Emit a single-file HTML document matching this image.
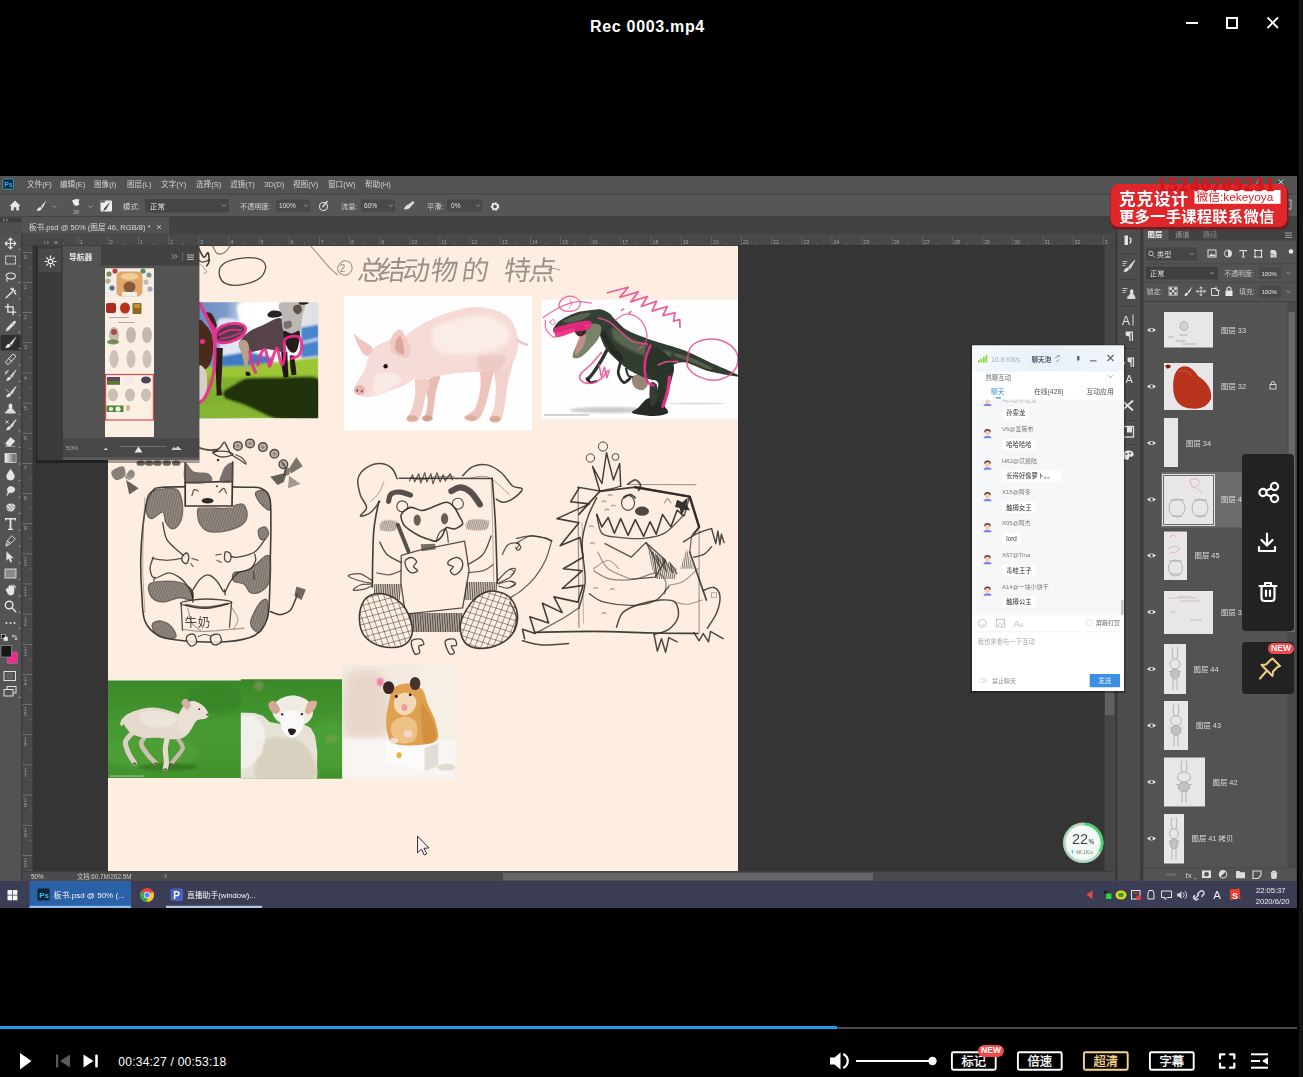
<!DOCTYPE html>
<html lang="zh"><head><meta charset="utf-8"><title>Rec 0003.mp4</title>
<style>
html,body{margin:0;padding:0;background:#000;}
body{width:1303px;height:1077px;overflow:hidden;font-family:"Liberation Sans",sans-serif;}
#app{position:relative;width:1303px;height:1077px;background:#000;overflow:hidden;}
.abs{position:absolute;display:block;}
.title{position:absolute;left:547.5px;top:15.9px;width:200px;text-align:center;color:#fff;font-weight:bold;font-size:16px;line-height:22px;letter-spacing:0.68px;white-space:nowrap;}
.time{position:absolute;left:118.3px;top:1053px;color:#fff;font-size:12.1px;line-height:18px;letter-spacing:0.2px;white-space:nowrap;}
.newb{position:absolute;background:#f2494b;color:#fff;border-radius:6px;text-align:center;font-weight:bold;letter-spacing:0.1px;}
#video{position:absolute;left:0;top:176px;width:1297px;height:732px;overflow:hidden;background:#282828;}
</style></head>
<body>
<div id="app">
<div id="video">
<svg class="abs" style="left:0;top:0" width="1297" height="732" viewBox="0 176 1297 732" font-family="'Liberation Sans','Noto Sans CJK SC',sans-serif">
<defs>
<linearGradient id="tgrad" x1="0" x2="1"><stop offset="0" stop-color="#f4f4f4"/><stop offset="1" stop-color="#555"/></linearGradient>
<linearGradient id="chatgrad" x1="0" x2="1"><stop offset="0" stop-color="#f4f8fb"/><stop offset="0.5" stop-color="#e8f1f8"/><stop offset="1" stop-color="#f1f6fa"/></linearGradient>
<filter id="b1" x="-5%" y="-5%" width="110%" height="110%"><feGaussianBlur stdDeviation="0.7"/></filter>
<filter id="b2" x="-10%" y="-10%" width="120%" height="120%"><feGaussianBlur stdDeviation="1"/></filter>
<filter id="b3" x="-15%" y="-15%" width="130%" height="130%"><feGaussianBlur stdDeviation="2"/></filter>
<filter id="b5" x="-20%" y="-20%" width="140%" height="140%"><feGaussianBlur stdDeviation="4"/></filter>
</defs>
<g filter="url(#b1)">
<rect x="0.0" y="176.0" width="1297.0" height="732.0" fill="#353535"/>
<rect x="108.0" y="245.5" width="630.0" height="626.0" fill="#fdeee1"/>
<clipPath id="cpCanvas"><rect x="108" y="245.5" width="630" height="625.5"/></clipPath><g clip-path="url(#cpCanvas)"><path d="M197.9 246.9 C198.9 248.6 202.0 256.1 203.7 257.1 C205.4 258.1 207.2 252.0 208.1 252.7 C209.0 253.5 209.2 259.3 209.0 261.5 C208.8 263.7 207.1 265.1 206.7 265.9" fill="none" stroke="#2a2622" stroke-width="1.6" stroke-linecap="round" stroke-linejoin="round" opacity="0.9"/><path d="M196.5 258.6 C197.4 259.2 200.1 261.8 202.3 262.1 C204.5 262.3 208.4 260.4 209.6 260.0" fill="none" stroke="#2a2622" stroke-width="1.4" stroke-linecap="round" stroke-linejoin="round" opacity="0.8"/><path d="M212.5 245.5 C213.2 246.8 214.9 252.1 216.9 253.3 C218.8 254.5 222.0 253.9 224.2 252.7 C226.3 251.6 229.0 247.4 230.0 246.3" fill="none" stroke="#5a544e" stroke-width="1.1" stroke-linecap="round" stroke-linejoin="round" opacity="0.8"/><path d="M200.8 264.4 C201.8 265.6 206.2 270.2 206.7 271.7 C207.1 273.2 204.2 272.9 203.7 273.2" fill="none" stroke="#6a645e" stroke-width="1.0" stroke-linecap="round" stroke-linejoin="round" opacity="0.6"/><path d="M222.7 264.4 C225.9 261.6 232.9 259.5 238.7 258.6 C244.6 257.6 253.2 257.4 257.7 258.6 C262.2 259.8 265.1 262.7 265.6 265.9 C266.0 269.0 264.1 274.5 260.6 277.5 C257.1 280.6 250.2 283.1 244.6 284.2 C239.0 285.4 231.2 285.7 227.1 284.2 C222.9 282.8 220.2 278.8 219.5 275.5 C218.8 272.2 219.5 267.2 222.7 264.4Z" fill="none" stroke="#3a3530" stroke-width="1.3" stroke-linecap="round" stroke-linejoin="round" opacity="0.9"/><path d="M311.0 246.3 C312.6 248.1 317.3 253.5 320.4 257.1 C323.5 260.7 326.9 265.0 329.7 267.9 C332.5 270.8 336.0 273.5 337.3 274.6" fill="none" stroke="#8a847c" stroke-width="1.2" stroke-linecap="round" stroke-linejoin="round" opacity="0.8"/><path d="M337.9 267.3 C338.4 265.3 341.1 261.7 343.1 260.9 C345.1 260.1 348.6 261.2 350.1 262.7 C351.6 264.1 352.4 267.6 351.9 269.7 C351.3 271.7 348.6 274.3 346.6 274.9 C344.6 275.5 341.4 274.4 339.9 273.2 C338.4 271.9 337.3 269.4 337.9 267.3Z" fill="none" stroke="#8f8981" stroke-width="1.1" stroke-linecap="round" stroke-linejoin="round" opacity="0.85"/><text x="339.8" y="272" font-size="10" fill="#8f8981">2</text><g transform="translate(0 0) skewX(-8) translate(39 0)" opacity="0.9"><text y="280" font-size="27" fill="#8f8981" x="357 378 402 430 461 503 528">总结动物的特点</text></g><path d="M548.4 269.7 C549.3 269.5 552.2 268.4 554.2 268.5 C556.1 268.6 559.0 269.9 560.0 270.2" fill="none" stroke="#8f8981" stroke-width="1.2" stroke-linecap="round" stroke-linejoin="round" opacity="0.85"/><clipPath id="cpCow"><rect x="170" y="302.2" width="148.2" height="116"/></clipPath><linearGradient id="gSky" x1="0" y1="0" x2="1" y2="0"><stop offset="0" stop-color="#4f7cc0"/><stop offset="0.38" stop-color="#7f9cc8"/><stop offset="0.55" stop-color="#f4f6f8"/><stop offset="0.8" stop-color="#ffffff"/><stop offset="1" stop-color="#d4d8de"/></linearGradient><g clip-path="url(#cpCow)"><rect x="170.0" y="302.0" width="149.0" height="117.0" fill="url(#gSky)"/><g filter="url(#b2)"><path d="M240.9 302.2 C247.7 299.8 271.8 299.4 279.5 302.2 C287.1 305.1 287.9 313.7 286.7 319.1 C285.5 324.6 279.1 332.8 272.2 334.8 C265.4 336.8 251.3 334.2 245.7 331.2 C240.1 328.2 239.3 321.6 238.5 316.7 C237.6 311.9 234.0 304.7 240.9 302.2Z" fill="#ffffff" opacity="0.95"/><path d="M219.1 319.1 C223.6 316.3 241.1 319.5 245.7 324.0 C250.3 328.4 250.5 340.1 246.9 345.7 C243.3 351.3 228.6 358.6 224.0 357.8 C219.3 357.0 219.9 347.3 219.1 340.9 C218.3 334.4 214.7 322.0 219.1 319.1Z" fill="#e8eef4" opacity="0.9"/><path d="M303.6 302.2 C306.1 298.2 316.2 298.4 318.7 302.2 C321.2 306.1 321.2 321.2 318.7 325.2 C316.2 329.2 306.1 330.2 303.6 326.4 C301.1 322.6 301.1 306.3 303.6 302.2Z" fill="#dfe2e6" opacity="0.95"/><path d="M301.2 327.6 L318.7 324.6 L318.7 355.4 L301.2 357.8Z" fill="#4684cc" opacity="1"/><path d="M301.2 341.5 L318.7 337.2 L318.7 340.3 L301.2 344.5Z" fill="#c4daf0" opacity="0.9"/><path d="M222.2 355.4 L246.9 351.7 L272.2 357.8 L272.2 367.4 L222.2 367.4Z" fill="#3c7ac4" opacity="1"/><path d="M222.2 348.1 L246.9 344.5 L246.9 351.7 L222.2 356.0Z" fill="#dfe8f2" opacity="0.9"/><path d="M198.6 367.4 L245.7 365.6 L318.7 357.2 L318.7 381.9 L198.6 381.9Z" fill="#9cc634" opacity="1"/><path d="M198.6 378.3 L318.7 374.7 L318.7 418.7 L198.6 418.7Z" fill="#7fb02e" opacity="1"/><path d="M223.4 391.6 C224.3 390.2 232.5 385.6 234.8 384.3 C237.2 383.0 242.4 378.9 246.9 378.3 C251.4 377.6 272.3 377.6 279.5 377.7 C286.7 377.7 314.8 374.8 318.7 378.9 C322.6 383.0 323.0 414.7 318.7 418.7 C314.4 422.7 282.0 419.5 275.9 418.7 C269.8 417.9 261.3 412.4 257.8 410.9 C254.3 409.4 244.1 404.9 240.9 403.6 C237.6 402.4 226.9 399.4 225.2 398.2 C223.4 397.0 222.4 392.9 223.4 391.6Z" fill="#1d2c10" opacity="0.95"/><path d="M198.6 403.6 L231.2 401.2 L274.7 418.7 L198.6 418.7Z" fill="#86b634" opacity="0.9"/></g><g filter="url(#b1)"><path d="M239.1 343.3 C239.9 339.9 244.2 335.4 248.1 332.4 C252.0 329.4 257.4 327.6 262.6 325.2 C267.8 322.8 275.8 317.7 279.5 317.9 C283.2 318.1 283.9 322.2 284.9 326.4 C285.9 330.6 285.7 339.1 285.5 343.3 C285.3 347.5 286.7 350.7 283.7 351.7 C280.7 352.7 272.5 349.3 267.4 349.3 C262.3 349.3 257.0 351.1 252.9 351.7 C248.9 352.3 245.6 354.3 243.3 352.9 C241.0 351.5 238.3 346.7 239.1 343.3Z" fill="#57424a" opacity="1"/><path d="M238.5 343.3 C238.8 341.1 241.7 339.7 243.3 339.7 C244.9 339.7 247.1 341.1 248.1 343.3 C249.1 345.5 249.3 349.7 249.3 352.9 C249.3 356.2 248.7 359.2 248.1 362.6 C247.5 366.0 246.4 373.5 245.7 373.5 C245.0 373.5 244.6 366.0 243.9 362.6 C243.2 359.2 242.4 356.2 241.5 352.9 C240.6 349.7 238.2 345.5 238.5 343.3Z" fill="#b8a08a" opacity="1"/><path d="M245.7 372.2 C246.2 371.7 248.5 371.7 249.3 372.2 C250.1 372.8 251.0 374.7 250.5 375.3 C250.0 375.8 247.1 376.1 246.3 375.6 C245.5 375.1 245.2 372.8 245.7 372.2Z" fill="#1c1410" opacity="1"/><path d="M281.3 351.7 L287.3 351.7 L287.9 367.4 L288.5 377.1 L283.7 377.7 L281.9 367.4Z" fill="#1f1612" opacity="1"/><path d="M289.7 355.4 L294.0 355.4 L295.8 367.4 L296.4 374.7 L291.6 375.3 L290.4 367.4Z" fill="#241a14" opacity="1"/><path d="M280.1 302.8 C283.8 300.5 299.9 300.2 303.6 302.5 C307.4 304.8 303.0 311.9 302.4 316.7 C301.8 321.5 301.8 328.1 300.0 331.2 C298.2 334.3 294.3 335.4 291.6 335.4 C288.8 335.4 285.4 334.3 283.7 331.2 C282.0 328.1 281.9 321.5 281.3 316.7 C280.7 312.0 276.4 305.2 280.1 302.8Z" fill="#bdb8b4" opacity="1"/><path d="M294.0 305.9 C295.1 304.9 298.7 303.9 300.0 304.7 C301.3 305.5 302.2 309.1 301.8 310.7 C301.4 312.3 299.0 314.3 297.6 314.3 C296.2 314.3 294.0 312.1 293.4 310.7 C292.8 309.3 292.9 306.9 294.0 305.9Z" fill="#4a403c" opacity="0.85"/><path d="M283.7 322.8 C284.5 321.5 289.0 320.3 290.4 321.0 C291.7 321.6 292.4 325.1 291.6 326.4 C290.8 327.7 286.8 329.4 285.5 328.8 C284.2 328.2 282.9 324.1 283.7 322.8Z" fill="#5a504c" opacity="0.7"/><path d="M298.8 302.2 C299.9 301.8 306.4 301.9 307.9 302.2 C309.3 302.5 308.4 303.7 307.3 304.1 C306.1 304.5 302.6 305.0 301.2 304.7 C299.8 304.4 297.7 302.6 298.8 302.2Z" fill="#2a2220" opacity="1"/><path d="M267.4 314.3 C267.8 313.2 270.2 311.2 272.2 310.7 C274.3 310.2 277.9 310.6 279.5 311.3 C281.1 312.0 282.3 313.9 281.9 314.9 C281.5 315.9 279.1 316.9 277.1 317.3 C275.1 317.7 271.4 317.8 269.8 317.3 C268.2 316.8 267.0 315.4 267.4 314.3Z" fill="#2c2426" opacity="1"/><path d="M283.7 331.2 C284.7 329.6 288.9 333.6 291.6 333.6 C294.2 333.6 298.2 329.6 299.4 331.2 C300.6 332.8 299.4 339.9 298.8 343.3 C298.2 346.7 297.2 350.3 295.8 351.7 C294.4 353.1 292.1 353.1 290.4 351.7 C288.6 350.3 286.6 346.7 285.5 343.3 C284.4 339.9 282.7 332.8 283.7 331.2Z" fill="#221a1c" opacity="1"/><path d="M198.6 322.8 C199.8 315.5 203.7 323.2 205.9 325.2 C208.1 327.2 210.7 330.8 211.9 334.8 C213.1 338.9 213.3 344.7 213.1 349.3 C212.9 353.9 212.1 359.2 210.7 362.6 C209.3 366.0 206.7 368.8 204.7 369.8 C202.6 370.8 199.6 376.5 198.6 368.6 C197.6 360.8 197.4 330.0 198.6 322.8Z" fill="#4b2c1e" opacity="1"/><path d="M198.6 367.4 C199.7 362.2 203.9 367.8 205.3 369.8 C206.7 371.8 206.9 375.9 207.1 379.5 C207.3 383.1 207.1 388.3 206.5 391.6 C205.9 394.8 204.8 397.2 203.4 398.8 C202.1 400.4 199.4 406.4 198.6 401.2 C197.8 396.0 197.5 372.7 198.6 367.4Z" fill="#d8d0c8" opacity="1"/><path d="M214.3 348.1 L222.8 348.1 L222.2 367.4 L221.0 386.7 L222.2 395.2 L216.7 395.8 L216.1 379.5Z" fill="#2a1c14" opacity="1"/><path d="M205.9 313.1 C206.5 311.7 210.1 312.3 211.9 314.3 C213.7 316.3 216.5 322.6 216.7 325.2 C216.9 327.8 214.5 330.4 213.1 330.0 C211.7 329.6 209.5 325.6 208.3 322.8 C207.1 319.9 205.3 314.5 205.9 313.1Z" fill="#3a2218" opacity="1"/></g><path d="M199.8 303.4 C200.8 305.5 203.7 310.9 205.9 315.5 C208.1 320.1 211.6 325.6 213.1 331.2 C214.6 336.8 214.7 343.3 214.9 349.3 C215.1 355.4 215.0 361.6 214.3 367.4 C213.6 373.3 212.3 379.3 210.7 384.3 C209.1 389.3 206.5 394.6 204.7 397.6 C202.8 400.6 200.6 401.6 199.8 402.4" fill="none" stroke="#ec2f8b" stroke-width="3.2" stroke-linecap="round" stroke-linejoin="round" opacity="0.92"/><path d="M202.2 309.5 C203.7 311.7 208.4 319.3 210.7 322.8 C213.0 326.2 215.2 328.8 216.1 330.0" fill="none" stroke="#ec2f8b" stroke-width="2.4" stroke-linecap="round" stroke-linejoin="round" opacity="0.85"/><ellipse cx="202.5" cy="341.5" rx="2.6" ry="2.6" fill="#ec2f8b" opacity="0.95"/><path d="M216.1 332.4 C217.1 329.9 219.6 327.3 222.8 325.8 C225.9 324.3 231.2 323.3 234.8 323.4 C238.5 323.5 243.0 324.7 244.5 326.4 C246.0 328.1 245.3 331.4 243.9 333.6 C242.5 335.8 239.2 338.2 236.0 339.7 C232.9 341.2 228.4 342.5 225.2 342.7 C222.0 342.9 218.2 342.6 216.7 340.9 C215.2 339.2 215.1 334.9 216.1 332.4Z" fill="#3a1c30" opacity="0.85"/><path d="M216.1 332.4 C217.1 329.9 219.6 327.3 222.8 325.8 C225.9 324.3 231.2 323.3 234.8 323.4 C238.5 323.5 243.0 324.7 244.5 326.4 C246.0 328.1 245.3 331.4 243.9 333.6 C242.5 335.8 239.2 338.2 236.0 339.7 C232.9 341.2 228.4 342.5 225.2 342.7 C222.0 342.9 218.2 342.6 216.7 340.9 C215.2 339.2 215.1 334.9 216.1 332.4Z" fill="none" stroke="#ec2f8b" stroke-width="3.0" stroke-linecap="round" stroke-linejoin="round" opacity="0.95"/><path d="M219.1 334.8 C221.0 334.0 226.4 330.8 230.0 330.0 C233.6 329.2 239.1 330.0 240.9 330.0" fill="none" stroke="#ec2f8b" stroke-width="2.0" stroke-linecap="round" stroke-linejoin="round" opacity="0.9"/><path d="M220.3 339.1 C222.2 338.7 227.8 337.7 231.2 336.6 C234.6 335.5 239.3 333.1 240.9 332.4" fill="none" stroke="#ec2f8b" stroke-width="1.6" stroke-linecap="round" stroke-linejoin="round" opacity="0.8"/><path d="M249.9 351.7 C250.2 353.5 250.8 359.2 251.7 362.6 C252.6 366.0 254.7 370.6 255.4 372.2" fill="none" stroke="#ec2f8b" stroke-width="3.4" stroke-linecap="round" stroke-linejoin="round" opacity="0.9"/><path d="M257.8 365.0 C258.3 363.2 259.6 356.8 260.8 354.1 C262.0 351.5 263.9 348.7 265.0 349.3 C266.1 349.9 266.6 354.9 267.4 357.8 C268.2 360.6 268.8 366.6 269.8 366.2 C270.8 365.8 272.2 358.4 273.5 355.4 C274.7 352.3 276.1 347.7 277.1 348.1 C278.1 348.5 278.6 354.9 279.5 357.8 C280.4 360.6 281.6 365.8 282.5 365.0 C283.4 364.2 284.6 357.0 284.9 352.9 C285.2 348.9 283.4 343.6 284.3 340.9 C285.2 338.2 287.9 337.2 290.4 336.6 C292.8 336.0 296.9 335.7 298.8 337.2 C300.7 338.8 301.8 342.7 301.8 345.7 C301.8 348.7 300.5 353.2 298.8 355.4 C297.1 357.5 292.8 357.9 291.6 358.4" fill="none" stroke="#ec2f8b" stroke-width="3.0" stroke-linecap="round" stroke-linejoin="round" opacity="0.9"/></g><rect x="343.8" y="296.0" width="188.2" height="134.5" fill="#fffefe"/><g filter="url(#b1)"><path d="M481.2 366.7 C479.0 370.3 481.5 381.3 480.4 388.2 C479.4 395.1 477.8 403.5 475.1 408.2 C472.4 412.9 465.6 414.7 464.3 416.6 C463.0 418.5 465.0 419.3 467.4 419.7 C469.8 420.1 475.8 421.6 478.9 418.9 C482.0 416.2 483.8 409.7 485.8 403.6 C487.9 397.4 489.9 388.2 491.2 382.1 C492.5 376.0 495.2 369.3 493.5 366.7 C491.8 364.2 483.4 363.2 481.2 366.7Z" fill="#ecc4bc" opacity="1"/><path d="M426.0 382.1 C424.0 386.2 427.8 395.4 427.8 400.5 C427.8 405.6 426.6 409.5 426.0 412.8 C425.3 416.1 422.8 418.9 423.7 420.2 C424.5 421.4 429.2 422.2 430.9 420.2 C432.5 418.2 432.8 413.0 433.6 408.2 C434.5 403.4 434.9 396.7 435.9 391.3 C437.0 385.9 441.4 377.5 439.8 376.0 C438.1 374.4 428.0 378.0 426.0 382.1Z" fill="#e8beb4" opacity="1"/><path d="M493.5 362.1 C490.6 367.3 495.7 377.7 495.8 385.2 C495.9 392.6 495.3 400.8 494.3 406.7 C493.2 412.5 488.6 418.0 489.7 420.5 C490.7 422.9 497.8 424.0 500.4 421.2 C503.0 418.4 503.9 409.6 505.0 403.6 C506.2 397.6 506.2 391.3 507.3 385.2 C508.5 379.0 510.9 371.9 511.9 366.7 C512.9 361.6 516.5 355.2 513.4 354.5 C510.4 353.7 496.4 357.0 493.5 362.1Z" fill="#f2d2cc" opacity="1"/><path d="M416.0 376.0 C413.7 378.0 415.9 389.0 415.2 394.4 C414.6 399.7 413.5 403.8 412.1 408.2 C410.7 412.5 405.9 418.3 406.8 420.5 C407.7 422.6 415.0 422.8 417.5 421.2 C420.1 419.7 420.8 415.2 422.1 411.3 C423.4 407.3 424.0 402.3 425.2 397.4 C426.3 392.6 430.6 385.7 429.0 382.1 C427.5 378.5 418.3 373.9 416.0 376.0Z" fill="#f0cec6" opacity="1"/><ellipse cx="412.1" cy="418.2" rx="5.5" ry="3.0" fill="#d0a08c" opacity="0.75" filter="url(#b1)"/><ellipse cx="427.2" cy="418.2" rx="5.5" ry="3.0" fill="#c8927e" opacity="0.75" filter="url(#b1)"/><ellipse cx="471.2" cy="418.2" rx="5.5" ry="3.0" fill="#d8a894" opacity="0.75" filter="url(#b1)"/><ellipse cx="495.0" cy="418.9" rx="5.5" ry="3.0" fill="#cc9a86" opacity="0.75" filter="url(#b1)"/><path d="M406.0 336.0 C409.6 331.2 419.0 326.1 426.0 322.2 C432.9 318.4 439.8 315.5 447.4 313.0 C455.1 310.5 464.1 307.7 472.0 307.2 C479.9 306.7 488.6 308.0 495.0 310.0 C501.4 311.9 506.7 315.1 510.4 319.2 C514.1 323.3 516.0 329.7 517.3 334.5 C518.6 339.4 518.8 343.7 518.1 348.3 C517.3 352.9 515.5 358.6 512.7 362.1 C509.9 365.7 506.4 368.2 501.2 369.8 C495.9 371.5 488.6 371.6 481.2 372.1 C473.8 372.6 464.3 372.1 456.7 372.9 C449.0 373.7 441.8 375.6 435.2 376.7 C428.5 377.9 421.4 380.9 416.7 379.8 C412.1 378.6 409.6 374.5 407.5 369.8 C405.5 365.1 404.7 357.0 404.5 351.4 C404.2 345.8 402.4 340.9 406.0 336.0Z" fill="#f5dad5" opacity="1"/><path d="M432.1 329.9 C435.2 324.5 448.0 321.5 456.7 319.2 C465.4 316.9 476.1 315.1 484.3 316.1 C492.5 317.1 501.7 321.2 505.8 325.3 C509.9 329.4 511.4 336.3 508.8 340.7 C506.3 345.0 498.6 349.1 490.4 351.4 C482.2 353.7 468.4 354.5 459.7 354.5 C451.0 354.5 442.8 355.5 438.2 351.4 C433.6 347.3 429.0 335.3 432.1 329.9Z" fill="#fcf0ec" opacity="0.85" filter="url(#b3)"/><path d="M478.1 357.5 C480.2 354.7 488.9 354.5 493.5 354.5 C498.1 354.5 504.7 355.0 505.8 357.5 C506.8 360.1 503.7 367.5 499.6 369.8 C495.5 372.1 484.8 373.4 481.2 371.4 C477.6 369.3 476.1 360.4 478.1 357.5Z" fill="#e8c0b8" opacity="0.6" filter="url(#b2)"/><path d="M517.3 339.9 C518.1 340.4 520.3 342.2 521.9 343.0 C523.5 343.7 526.1 344.4 527.0 344.6" fill="none" stroke="#ecc0b8" stroke-width="2.2" stroke-linecap="round" stroke-linejoin="round" opacity="1"/><path d="M372.2 349.1 C375.2 346.4 381.2 343.1 386.0 341.4 C390.9 339.8 397.0 338.5 401.4 339.1 C405.7 339.8 409.6 341.9 412.1 345.3 C414.7 348.6 416.2 354.0 416.7 359.1 C417.3 364.2 417.3 371.6 415.2 376.0 C413.2 380.3 408.6 382.7 404.5 385.2 C400.4 387.6 395.5 388.7 390.7 390.5 C385.8 392.3 379.9 394.9 375.3 395.9 C370.7 396.9 366.5 397.3 363.0 396.7 C359.6 396.0 355.9 393.9 354.6 392.1 C353.3 390.3 353.7 389.6 355.3 385.9 C357.0 382.2 362.4 374.5 364.6 369.8 C366.7 365.1 367.1 361.0 368.4 357.5 C369.7 354.1 369.3 351.8 372.2 349.1Z" fill="#f6dcd8" opacity="1"/><path d="M375.3 376.0 C377.9 372.4 386.3 372.4 390.7 372.9 C395.0 373.4 401.4 376.5 401.4 379.0 C401.4 381.6 395.0 385.7 390.7 388.2 C386.3 390.8 377.9 396.4 375.3 394.4 C372.7 392.3 372.7 379.5 375.3 376.0Z" fill="#fbeeea" opacity="0.8" filter="url(#b2)"/><path d="M354.1 333.7 C354.6 333.2 357.8 337.6 360.0 339.1 C362.1 340.7 364.7 341.3 366.9 343.0 C369.0 344.6 372.9 346.9 373.0 349.1 C373.1 351.3 369.5 355.6 367.6 356.0 C365.7 356.4 363.3 353.7 361.5 351.4 C359.7 349.1 358.1 345.1 356.9 342.2 C355.7 339.2 353.6 334.3 354.1 333.7Z" fill="#f0c4c0" opacity="1"/><path d="M390.7 350.6 C389.5 347.6 390.0 341.1 391.4 337.6 C392.8 334.1 396.8 329.9 399.1 329.6 C401.4 329.3 403.3 332.9 405.2 336.0 C407.2 339.2 410.2 344.7 410.6 348.3 C411.0 351.9 409.6 356.3 407.5 357.5 C405.5 358.8 401.1 357.2 398.3 356.0 C395.5 354.9 391.8 353.7 390.7 350.6Z" fill="#f2cac4" opacity="1"/><path d="M396.0 350.6 C394.7 348.3 395.3 343.1 396.0 340.7 C396.7 338.2 399.0 335.5 400.2 336.0 C401.4 336.6 402.7 340.7 403.2 343.7 C403.8 346.8 404.9 353.3 403.7 354.5 C402.5 355.6 397.3 352.9 396.0 350.6Z" fill="#d89c98" opacity="0.8" filter="url(#b1)"/><ellipse cx="359.6" cy="390.1" rx="5.5" ry="5.0" fill="#eab4b2" opacity="1"/><ellipse cx="357.2" cy="390.5" rx="1.0" ry="1.3" fill="#7a4a4a" opacity="1"/><ellipse cx="361.8" cy="391.3" rx="1.0" ry="1.3" fill="#8a5a58" opacity="1"/><ellipse cx="385.6" cy="366.3" rx="2.2" ry="2.2" fill="#1a1012" opacity="1"/></g><rect x="541.5" y="299.6" width="196.5" height="119.0" fill="#fefefe"/><g filter="url(#b1)"><ellipse cx="609.1" cy="410.1" rx="40.0" ry="3.0" fill="#bdbdc2" opacity="0.8" filter="url(#b2)"/><ellipse cx="696.6" cy="403.5" rx="28.0" ry="1.0" fill="#d8d8dc" opacity="0.8" filter="url(#b1)"/><rect x="544.0" y="414.0" width="45.0" height="1.8" fill="#b0b0b0" opacity="0.65"/><path d="M633.6 375.6 C635.7 374.4 641.9 373.5 644.4 374.8 C646.8 376.1 648.5 380.7 648.2 383.2 C648.0 385.8 645.0 389.4 642.8 390.1 C640.7 390.9 637.0 389.2 635.2 387.8 C633.4 386.4 632.4 383.7 632.1 381.7 C631.8 379.7 631.6 376.7 633.6 375.6Z" fill="#94806f" opacity="0.95"/><path d="M601.4 310.3 C603.2 309.6 607.3 312.4 610.6 314.9 C613.9 317.5 621.0 326.3 626.0 329.5 C630.9 332.7 642.1 336.7 647.4 338.7 C652.8 340.7 660.7 342.9 665.9 344.6 C671.0 346.2 680.1 348.7 685.8 351.0 C691.5 353.3 702.0 358.6 708.8 361.7 C715.7 364.9 733.5 372.5 737.2 374.5 C741.0 376.5 741.0 377.1 737.2 376.6 C733.5 376.2 715.7 373.1 708.8 371.3 C702.0 369.4 690.5 363.4 685.8 362.5 C681.1 361.7 676.4 363.1 673.5 364.8 C670.7 366.6 667.0 373.5 664.3 375.6 C661.7 377.6 656.9 380.2 653.6 380.2 C650.3 380.2 643.5 377.2 639.8 375.6 C636.1 373.9 629.4 370.3 626.0 367.9 C622.5 365.4 616.5 360.0 613.7 357.1 C610.8 354.3 606.4 349.7 604.5 346.4 C602.5 343.1 600.1 336.1 599.1 332.6 C598.1 329.1 596.5 323.3 596.8 320.3 C597.1 317.3 599.6 311.0 601.4 310.3Z" fill="#323d33" opacity="1"/><path d="M612.1 328.0 C613.9 327.2 621.1 333.1 626.0 335.7 C630.8 338.2 636.2 341.0 641.3 343.3 C646.4 345.6 651.5 347.9 656.7 349.5 C661.8 351.0 671.0 351.0 672.0 352.5 C673.0 354.1 667.4 358.2 662.8 358.7 C658.2 359.2 650.0 357.1 644.4 355.6 C638.7 354.1 633.9 352.0 629.0 349.5 C624.2 346.9 618.0 343.8 615.2 340.3 C612.4 336.7 610.4 328.7 612.1 328.0Z" fill="#61755a" opacity="0.75" filter="url(#b2)"/><path d="M675.1 353.3 C677.9 353.6 687.4 356.2 693.5 358.7 C699.6 361.1 709.4 366.1 711.9 367.9 C714.5 369.6 712.4 370.1 708.8 369.1 C705.3 368.1 695.8 363.7 690.4 361.7 C685.0 359.8 679.2 358.5 676.6 357.1 C674.0 355.7 672.3 353.0 675.1 353.3Z" fill="#6a7a5e" opacity="0.6" filter="url(#b1)"/><path d="M604.5 331.0 C606.3 332.3 609.1 339.0 612.1 343.3 C615.2 347.7 621.6 354.1 622.9 357.1 C624.2 360.2 622.1 363.0 619.8 361.7 C617.5 360.5 612.1 353.8 609.1 349.5 C606.0 345.1 602.2 338.7 601.4 335.7 C600.6 332.6 602.7 329.8 604.5 331.0Z" fill="#20281f" opacity="0.7" filter="url(#b1)"/><path d="M647.4 346.4 C650.5 344.1 658.4 347.9 662.8 351.0 C667.1 354.1 672.0 360.2 673.5 364.8 C675.1 369.4 673.0 374.0 672.0 378.6 C671.0 383.2 668.7 387.8 667.4 392.4 C666.1 397.0 666.1 403.7 664.3 406.3 C662.5 408.8 658.1 409.6 656.7 407.8 C655.2 406.0 655.6 399.6 655.9 395.5 C656.1 391.4 659.1 386.3 658.2 383.2 C657.3 380.2 652.8 380.2 650.5 377.1 C648.2 374.0 644.9 369.9 644.4 364.8 C643.9 359.7 644.4 348.7 647.4 346.4Z" fill="#2b352c" opacity="1"/><path d="M632.1 412.7 C630.8 411.4 635.9 410.0 638.2 407.8 C640.5 405.6 643.4 400.9 645.9 399.4 C648.5 397.8 651.0 397.9 653.6 398.6 C656.1 399.2 658.8 400.9 661.3 403.2 C663.7 405.5 668.9 410.3 668.2 412.4 C667.4 414.5 660.4 415.3 656.7 415.8 C652.9 416.3 650.0 416.0 645.9 415.5 C641.8 415.0 633.4 414.0 632.1 412.7Z" fill="#262c26" opacity="1"/><path d="M650.5 383.2 C651.7 380.7 655.5 382.2 656.7 384.8 C657.8 387.3 658.1 395.0 657.4 398.6 C656.8 402.2 654.1 406.0 652.8 406.3 C651.5 406.5 650.1 404.0 649.7 400.1 C649.4 396.3 649.4 385.8 650.5 383.2Z" fill="#353d33" opacity="1"/><path d="M553.0 329.8 C553.6 327.8 556.2 323.4 560.0 320.6 C563.7 317.8 570.4 314.6 575.3 312.9 C580.2 311.2 584.8 310.9 589.1 310.3 C593.5 309.8 597.6 308.5 601.4 309.6 C605.2 310.6 611.1 313.7 612.1 316.5 C613.2 319.3 610.4 325.0 607.5 326.4 C604.7 327.9 598.8 325.5 595.3 325.2 C591.7 324.9 590.7 323.8 586.0 324.6 C581.4 325.4 572.5 328.5 567.6 329.8 C562.8 331.1 559.3 332.6 556.9 332.6 C554.5 332.6 552.5 331.8 553.0 329.8Z" fill="#343f35" opacity="1"/><path d="M563.0 321.1 C564.0 319.8 572.2 316.3 576.8 314.9 C581.4 313.5 589.1 312.1 590.7 312.6 C592.2 313.1 589.4 316.3 586.0 318.0 C582.7 319.7 574.5 322.1 570.7 322.6 C566.9 323.1 562.0 322.3 563.0 321.1Z" fill="#5e6c5a" opacity="0.75" filter="url(#b1)"/><path d="M589.1 324.1 C591.8 323.4 599.0 323.5 600.6 325.7 C602.3 327.8 600.8 333.5 599.1 337.2 C597.4 340.9 593.7 344.6 590.7 347.9 C587.6 351.3 583.6 355.6 580.7 357.1 C577.7 358.7 574.0 358.7 573.0 357.4 C572.0 356.2 573.3 352.6 574.5 349.5 C575.7 346.3 578.6 341.9 580.2 338.7 C581.9 335.5 583.0 332.7 584.5 330.3 C586.0 327.8 586.4 324.9 589.1 324.1Z" fill="#78846a" opacity="1"/><path d="M580.2 335.7 C581.6 333.1 583.5 330.5 584.5 331.0 C585.5 331.6 586.6 335.7 586.0 338.7 C585.5 341.8 583.2 346.8 581.4 349.5 C579.7 352.2 576.5 355.4 575.6 354.8 C574.7 354.3 575.3 349.6 576.1 346.4 C576.8 343.2 578.8 338.2 580.2 335.7Z" fill="#c4908c" opacity="0.9"/><path d="M574.5 327.2 C575.9 325.8 582.6 324.8 584.5 325.7 C586.4 326.6 586.7 330.8 586.0 332.6 C585.4 334.4 582.3 336.2 580.7 336.4 C579.0 336.7 577.1 335.7 576.1 334.1 C575.0 332.6 573.1 328.6 574.5 327.2Z" fill="#33151d" opacity="0.9"/><path d="M553.8 328.7 C555.5 327.3 560.5 326.1 564.6 324.9 C568.7 323.8 574.2 322.5 578.4 321.8 C582.6 321.2 587.7 320.3 589.9 321.1 C592.1 321.8 592.1 324.9 591.4 326.4 C590.8 328.0 588.7 329.4 586.0 330.3 C583.4 331.2 578.6 331.0 575.3 331.8 C572.0 332.6 569.2 334.0 566.1 334.9 C563.0 335.8 558.8 337.4 556.9 337.2 C555.0 336.9 555.1 334.8 554.6 333.3 C554.1 331.9 552.2 330.2 553.8 328.7Z" fill="#ec2a80" opacity="0.92"/><path d="M606.8 350.2 C605.7 352.2 602.9 357.9 600.6 361.7 C598.3 365.6 595.1 370.3 593.0 373.3 C590.8 376.2 588.5 378.4 587.6 379.4" fill="none" stroke="#2d362e" stroke-width="3.4" stroke-linecap="round" stroke-linejoin="round" opacity="1"/><path d="M586.8 378.6 C587.5 379.3 589.1 382.0 590.7 382.5 C592.2 382.9 595.1 381.6 596.0 381.4" fill="none" stroke="#1c221c" stroke-width="2.4" stroke-linecap="round" stroke-linejoin="round" opacity="1"/><path d="M620.6 361.7 C620.2 363.7 617.8 369.8 618.3 373.3 C618.8 376.7 621.7 381.6 623.7 382.5 C625.6 383.4 628.8 379.3 629.8 378.6" fill="none" stroke="#2a322a" stroke-width="2.8" stroke-linecap="round" stroke-linejoin="round" opacity="1"/><path d="M626.0 368.7 C626.3 369.8 627.2 374.2 628.3 375.6 C629.3 377.0 631.5 376.8 632.1 377.1" fill="none" stroke="#303830" stroke-width="2.2" stroke-linecap="round" stroke-linejoin="round" opacity="1"/><path d="M607.5 292.7 L628.3 287.3 L619.8 297.3 L638.2 291.9 L630.6 301.9 L647.4 296.5 L641.3 306.5 L656.7 301.1 L652.0 311.1 L667.4 306.5 L662.8 315.7 L675.1 312.6 L673.5 321.1 L679.7 319.5 L680.0 327.2" fill="none" stroke="#ee4a92" stroke-width="1.7" stroke-linecap="round" stroke-linejoin="round" opacity="0.9"/><path d="M559.2 303.4 C560.0 301.5 562.8 298.4 565.3 297.3 C567.9 296.2 572.1 296.1 574.5 297.0 C577.0 297.9 579.8 300.6 580.2 302.7 C580.6 304.7 578.9 308.1 576.8 309.6 C574.7 311.0 570.3 311.5 567.6 311.4 C564.9 311.3 562.1 310.1 560.7 308.8 C559.3 307.5 558.4 305.3 559.2 303.4Z" fill="none" stroke="#ee4a92" stroke-width="1.2" stroke-linecap="round" stroke-linejoin="round" opacity="0.85"/><path d="M569.9 299.6 C570.2 300.3 571.6 302.8 571.5 304.2 C571.3 305.6 569.5 307.4 569.2 308.0" fill="none" stroke="#ee4a92" stroke-width="1.0" stroke-linecap="round" stroke-linejoin="round" opacity="0.7"/><path d="M543.1 317.5 C545.6 316.0 553.0 310.6 558.4 308.0 C563.8 305.4 569.8 302.7 575.3 301.9 C580.8 301.1 588.7 302.9 591.4 303.1" fill="none" stroke="#ee4a92" stroke-width="1.3" stroke-linecap="round" stroke-linejoin="round" opacity="0.8"/><path d="M545.4 320.3 C545.5 321.8 544.7 326.7 546.1 329.5 C547.5 332.3 551.8 336.4 553.8 337.2 C555.9 338.0 557.7 334.6 558.4 334.1" fill="none" stroke="#ee4a92" stroke-width="1.3" stroke-linecap="round" stroke-linejoin="round" opacity="0.8"/><path d="M550.0 321.8 C550.1 321.0 552.2 319.4 553.0 319.5 C553.9 319.7 555.4 321.8 555.3 322.6 C555.3 323.4 553.5 324.7 552.6 324.6 C551.7 324.5 549.9 322.7 550.0 321.8Z" fill="none" stroke="#ee4a92" stroke-width="1.0" stroke-linecap="round" stroke-linejoin="round" opacity="0.8"/><path d="M615.2 320.3 C617.0 319.3 622.1 314.5 626.0 314.2 C629.8 313.8 634.9 315.4 638.2 318.0 C641.6 320.6 644.6 325.5 645.9 329.5 C647.2 333.5 647.2 338.5 645.9 341.8 C644.6 345.1 639.5 348.2 638.2 349.5" fill="none" stroke="#ee4a92" stroke-width="1.3" stroke-linecap="round" stroke-linejoin="round" opacity="0.8"/><path d="M621.4 310.3 L623.7 308.8" fill="none" stroke="#ee4a92" stroke-width="1.6" stroke-linecap="round" stroke-linejoin="round" opacity="0.8"/><path d="M629.0 313.4 L630.9 311.4" fill="none" stroke="#ee4a92" stroke-width="1.6" stroke-linecap="round" stroke-linejoin="round" opacity="0.8"/><path d="M598.3 318.0 C600.1 318.6 605.5 319.7 609.1 321.8 C612.7 324.0 616.0 327.8 619.8 331.0 C623.7 334.2 627.5 338.9 632.1 341.0 C636.7 343.2 644.9 343.6 647.4 344.1" fill="none" stroke="#ee4a92" stroke-width="1.7" stroke-linecap="round" stroke-linejoin="round" opacity="0.85"/><path d="M687.4 360.2 C687.9 356.6 688.1 349.9 691.2 346.4 C694.3 342.9 700.5 340.4 705.8 339.5 C711.0 338.6 717.7 339.1 722.7 341.0 C727.6 342.9 733.3 347.0 735.7 351.0 C738.1 355.0 738.4 360.7 737.2 364.8 C736.1 368.9 732.8 373.0 728.8 375.6 C724.8 378.1 718.8 380.2 713.4 380.2 C708.1 380.2 700.8 377.6 696.6 375.6 C692.3 373.5 689.7 370.4 688.1 367.9 C686.6 365.3 686.8 363.8 687.4 360.2Z" fill="none" stroke="#ee4a92" stroke-width="1.5" stroke-linecap="round" stroke-linejoin="round" opacity="0.85"/><path d="M650.5 345.6 C649.7 347.5 646.9 352.9 645.9 357.1 C644.9 361.4 644.4 366.9 644.7 371.0 C644.9 375.0 646.0 379.3 647.4 381.7 C648.9 384.1 652.6 384.9 653.6 385.5" fill="none" stroke="#e8308a" stroke-width="2.6" stroke-linecap="round" stroke-linejoin="round" opacity="0.92"/><path d="M658.2 364.8 C659.7 364.3 664.1 362.3 667.4 361.7 C670.7 361.2 676.4 361.7 678.1 361.7" fill="none" stroke="#ee4a92" stroke-width="1.7" stroke-linecap="round" stroke-linejoin="round" opacity="0.85"/><path d="M669.7 377.1 C669.3 379.7 668.5 387.6 667.4 392.4 C666.2 397.3 663.6 404.0 662.8 406.3" fill="none" stroke="#e8308a" stroke-width="3.4" stroke-linecap="round" stroke-linejoin="round" opacity="0.92"/><path d="M601.4 352.5 C599.6 354.6 594.1 361.2 590.7 364.8 C587.2 368.4 582.2 371.3 580.7 374.0 C579.1 376.7 579.8 379.4 581.4 380.9 C583.1 382.5 587.3 383.6 590.7 383.2 C594.0 382.9 598.6 380.7 601.4 378.6 C604.2 376.6 606.5 372.2 607.5 371.0" fill="none" stroke="#ee4a92" stroke-width="1.6" stroke-linecap="round" stroke-linejoin="round" opacity="0.85"/><path d="M599.1 364.8 L601.4 377.1 L604.5 367.1 L606.8 377.9 L609.4 370.2" fill="none" stroke="#ee4a92" stroke-width="1.5" stroke-linecap="round" stroke-linejoin="round" opacity="0.85"/></g><clipPath id="cpL"><rect x="108" y="680.500" width="133" height="97.500"/></clipPath><clipPath id="cpS"><rect x="240.800" y="679.300" width="101.400" height="99.400"/></clipPath><clipPath id="cpH"><rect x="342.200" y="665" width="114.300" height="113.300"/></clipPath><linearGradient id="gGr" x1="0" y1="0" x2="0" y2="1"><stop offset="0" stop-color="#3a8829"/><stop offset="0.5" stop-color="#479a31"/><stop offset="1" stop-color="#42922e"/></linearGradient><g clip-path="url(#cpL)"><rect x="108.0" y="680.0" width="134.0" height="99.0" fill="url(#gGr)"/><ellipse cx="150.0" cy="752.0" rx="50.0" ry="16.0" fill="#56a83a" opacity="0.5" filter="url(#b3)"/><ellipse cx="215.0" cy="700.0" rx="30.0" ry="14.0" fill="#327f25" opacity="0.5" filter="url(#b3)"/><ellipse cx="168.0" cy="767.0" rx="30.0" ry="3.5" fill="#2c641f" opacity="0.55" filter="url(#b2)"/><g filter="url(#b1)"><path d="M133.0 732.4 C131.8 733.9 126.3 738.2 125.6 741.5 C124.8 744.9 126.8 749.0 128.3 752.6 C129.8 756.1 133.4 761.1 134.4 762.8" fill="none" stroke="#ddd0c4" stroke-width="5.0" stroke-linecap="round" stroke-linejoin="round" opacity="1"/><path d="M145.4 736.0 C144.8 737.4 140.8 741.1 141.3 744.3 C141.8 747.5 145.9 752.2 148.2 755.3 C150.6 758.4 154.2 761.5 155.4 762.8" fill="none" stroke="#cdbfb2" stroke-width="4.6" stroke-linecap="round" stroke-linejoin="round" opacity="1"/><path d="M168.1 734.6 C167.6 736.9 165.6 743.8 165.3 748.4 C165.1 753.0 166.4 758.9 166.4 762.2 C166.4 765.6 165.5 767.3 165.3 768.3" fill="none" stroke="#e6dace" stroke-width="5.2" stroke-linecap="round" stroke-linejoin="round" opacity="1"/><path d="M178.1 738.8 C178.8 740.3 183.0 744.8 182.8 747.9 C182.5 751.0 178.3 754.7 176.4 757.3 C174.5 759.8 172.3 762.3 171.4 763.3" fill="none" stroke="#c6b8ab" stroke-width="4.2" stroke-linecap="round" stroke-linejoin="round" opacity="1"/><path d="M122.8 719.4 C123.5 715.9 129.2 713.1 134.4 711.1 C139.6 709.1 147.3 707.4 153.7 707.5 C160.2 707.7 167.6 710.0 173.1 711.9 C178.6 713.9 184.0 716.3 186.9 719.4 C189.8 722.5 191.4 727.2 190.2 730.5 C189.1 733.7 185.1 737.5 180.0 738.8 C174.8 740.0 165.5 738.2 159.3 737.9 C153.0 737.7 147.5 738.3 142.7 737.4 C137.8 736.4 133.6 735.4 130.3 732.4 C126.9 729.4 122.1 723.0 122.8 719.4Z" fill="#e6dacf" opacity="1"/><path d="M139.9 713.9 C141.8 711.3 153.3 710.7 159.3 711.1 C165.3 711.6 174.0 714.1 175.8 716.6 C177.7 719.2 174.9 724.7 170.3 726.3 C165.7 727.9 153.3 728.4 148.2 726.3 C143.1 724.2 138.1 716.4 139.9 713.9Z" fill="#efe6dd" opacity="0.8"/><path d="M128.3 716.6 C127.5 717.2 124.4 719.0 123.3 720.2 C122.2 721.5 122.0 723.5 121.7 724.1" fill="none" stroke="#e6dacf" stroke-width="3.4" stroke-linecap="round" stroke-linejoin="round" opacity="1"/><path d="M177.2 719.4 C177.7 714.8 181.5 708.7 184.1 705.6 C186.8 702.5 189.8 700.9 193.0 700.9 C196.1 700.9 200.3 703.4 202.9 705.6 C205.5 707.8 208.0 711.7 208.4 713.9 C208.9 716.0 207.7 717.4 205.7 718.6 C203.7 719.7 199.1 718.8 196.6 720.8 C194.0 722.8 192.7 728.4 190.2 730.5 C187.7 732.5 183.5 735.1 181.4 733.2 C179.2 731.4 176.8 724.0 177.2 719.4Z" fill="#eae0d6" opacity="1"/><path d="M181.4 702.8 C181.2 701.0 184.2 698.4 185.8 698.7 C187.4 699.0 190.6 702.9 190.8 704.8 C190.9 706.6 188.5 710.1 186.9 709.7 C185.3 709.4 181.6 704.7 181.4 702.8Z" fill="#d6b0a4" opacity="1"/><ellipse cx="199.3" cy="709.2" rx="0.9" ry="0.9" fill="#3a2a28" opacity="1"/><ellipse cx="207.3" cy="714.7" rx="1.3" ry="1.1" fill="#7a5a58" opacity="1"/><ellipse cx="134.4" cy="763.6" rx="1.8" ry="1.2" fill="#4a3a30" opacity="0.8"/><ellipse cx="155.7" cy="763.6" rx="1.8" ry="1.2" fill="#4a3a30" opacity="0.8"/><ellipse cx="165.3" cy="769.4" rx="1.8" ry="1.2" fill="#4a3a30" opacity="0.8"/><ellipse cx="171.1" cy="764.2" rx="1.8" ry="1.2" fill="#4a3a30" opacity="0.8"/></g><rect x="110.0" y="775.5" width="34.0" height="1.2" fill="#cfe0c8" opacity="0.6"/></g><g clip-path="url(#cpS)"><rect x="240.0" y="679.0" width="103.0" height="100.0" fill="url(#gGr)"/><ellipse cx="330.0" cy="745.0" rx="20.0" ry="26.0" fill="#4ea838" opacity="0.5" filter="url(#b3)"/><ellipse cx="259.0" cy="686.0" rx="5.0" ry="5.0" fill="#7f9458" opacity="0.7" filter="url(#b2)"/><ellipse cx="331.0" cy="739.0" rx="6.0" ry="4.5" fill="#78a44e" opacity="0.6" filter="url(#b2)"/><g filter="url(#b1)"><path d="M236.6 712.5 L254.6 713.1 L262.9 715.8 L269.8 721.9 L280.8 724.1 L302.9 724.1 L310.7 727.7 L315.1 736.0 L317.3 751.2 L316.8 784.3 L236.6 784.3Z" fill="#e6e2d6" opacity="1"/><path d="M257.4 742.9 C260.7 738.8 268.6 737.8 275.3 737.4 C282.0 736.9 291.4 737.4 297.4 740.1 C303.4 742.9 308.5 747.5 311.2 753.9 C314.0 760.4 322.8 774.7 314.0 778.8 C305.3 783.0 268.5 781.6 258.7 778.8 C249.0 776.1 255.7 768.2 255.4 762.2 C255.2 756.3 254.0 747.0 257.4 742.9Z" fill="#d4ccb8" opacity="0.75" filter="url(#b2)"/><path d="M236.6 715.3 L254.6 716.1 L262.9 724.9 L265.6 737.4 L261.5 753.9 L250.4 766.4 L236.6 770.5Z" fill="#f4f2ee" opacity="0.9" filter="url(#b2)"/><path d="M273.1 705.6 C274.7 702.4 279.6 698.9 283.6 697.3 C287.7 695.7 293.0 695.0 297.4 695.9 C301.8 696.8 307.3 699.6 309.9 702.8 C312.4 706.1 313.8 711.6 312.6 715.3 C311.5 718.9 307.8 723.5 302.9 724.9 C298.1 726.4 288.4 725.5 283.6 724.1 C278.8 722.7 275.7 719.7 273.9 716.6 C272.2 713.6 271.5 708.8 273.1 705.6Z" fill="#eeece4" opacity="1"/><path d="M268.4 704.2 C268.9 702.5 272.0 700.1 273.9 700.9 C275.9 701.7 279.7 707.0 280.0 709.2 C280.3 711.3 277.4 713.6 275.9 713.9 C274.4 714.2 272.1 712.7 270.9 711.1 C269.7 709.5 267.9 705.9 268.4 704.2Z" fill="#d2a894" opacity="1"/><path d="M304.9 711.1 C305.0 709.1 307.0 703.6 309.0 702.0 C311.0 700.4 315.8 700.3 316.8 701.4 C317.7 702.6 315.9 707.1 314.6 709.2 C313.2 711.3 310.1 713.8 308.5 714.2 C306.9 714.5 304.8 713.1 304.9 711.1Z" fill="#dcae9c" opacity="1"/><path d="M280.8 713.9 C282.7 711.4 288.2 710.3 291.9 710.3 C295.6 710.3 301.0 711.4 302.9 713.9 C304.9 716.3 304.2 721.6 303.5 724.9 C302.8 728.3 300.7 732.0 298.8 734.1 C296.9 736.1 294.2 737.4 291.9 737.4 C289.6 737.4 286.8 736.1 285.0 734.1 C283.1 732.0 281.5 728.3 280.8 724.9 C280.2 721.6 279.0 716.3 280.8 713.9Z" fill="#faf9f7" opacity="1"/><ellipse cx="282.2" cy="714.4" rx="1.3" ry="1.1" fill="#2a2422" opacity="1"/><ellipse cx="301.8" cy="714.2" rx="1.3" ry="1.1" fill="#2a2422" opacity="1"/><path d="M288.0 729.6 C288.4 728.7 290.6 728.4 291.9 728.5 C293.2 728.6 295.7 729.3 296.0 730.2 C296.4 731.1 294.8 733.2 294.1 734.1 C293.4 734.9 292.6 735.2 291.9 735.2 C291.2 735.2 290.3 735.0 289.7 734.1 C289.0 733.1 287.7 730.6 288.0 729.6Z" fill="#221c1a" opacity="1"/></g></g><g clip-path="url(#cpH)"><rect x="342.0" y="665.0" width="115.0" height="114.0" fill="#f3ebe2"/><path d="M347.2 676.6 C353.1 666.7 376.6 666.9 383.1 676.6 C389.5 686.3 391.8 724.7 385.8 734.6 C379.9 744.5 353.6 745.7 347.2 736.0 C340.7 726.3 341.2 686.5 347.2 676.6Z" fill="#e6d4c8" opacity="0.9" filter="url(#b5)"/><rect x="342.0" y="738.0" width="115.0" height="41.0" fill="#f8f5f2" filter="url(#b3)"/><rect x="422.0" y="665.0" width="36.0" height="70.0" fill="#f6f0e6" filter="url(#b3)" opacity="0.9"/><ellipse cx="380.3" cy="682.1" rx="3.2" ry="4.0" fill="#f25c98" opacity="0.8" filter="url(#b2)"/><g filter="url(#b1)"><path d="M385.8 740.7 L438.3 742.9 L438.3 766.4 L424.5 771.1 L387.2 762.8Z" fill="#fbfbfa" opacity="1"/><path d="M424.5 747.9 L438.3 742.9 L438.3 766.4 L424.5 771.1Z" fill="#e2ddd8" opacity="1"/><ellipse cx="446.6" cy="767.2" rx="9.0" ry="3.5" fill="#dccfc2" opacity="0.7"/><path d="M388.6 704.2 C389.7 699.6 389.8 692.5 392.8 689.0 C395.7 685.6 401.7 683.5 406.6 683.5 C411.4 683.5 418.2 685.6 421.8 689.0 C425.3 692.5 425.5 698.7 427.8 704.2 C430.1 709.7 434.1 716.2 435.6 722.2 C437.1 728.2 439.7 736.3 437.0 740.1 C434.2 744.0 426.1 744.6 419.0 745.1 C411.9 745.7 399.4 745.6 394.1 743.4 C388.8 741.3 388.5 736.9 387.2 732.4 C385.9 727.9 386.2 721.3 386.4 716.6 C386.6 711.9 387.5 708.8 388.6 704.2Z" fill="#dfa050" opacity="1"/><path d="M421.8 704.2 C423.6 703.3 430.5 715.0 432.8 720.8 C435.1 726.5 437.0 735.1 435.6 738.8 C434.2 742.4 426.8 745.0 424.5 742.9 C422.2 740.8 422.2 732.8 421.8 726.3 C421.3 719.9 419.9 705.1 421.8 704.2Z" fill="#d08c3c" opacity="0.8"/><path d="M392.8 722.2 C395.1 719.4 401.3 716.5 405.2 716.6 C409.1 716.8 414.6 719.1 416.2 723.0 C417.9 726.9 417.6 736.8 414.9 740.1 C412.1 743.4 403.6 744.0 399.7 742.9 C395.7 741.7 392.5 736.7 391.4 733.2 C390.2 729.8 390.5 724.9 392.8 722.2Z" fill="#f0c48a" opacity="0.9"/><path d="M394.7 698.7 C396.3 695.7 401.7 692.6 405.2 692.6 C408.7 692.6 414.2 695.8 415.7 698.7 C417.2 701.5 415.9 707.0 414.0 709.7 C412.2 712.5 407.7 715.2 404.6 715.3 C401.6 715.4 397.5 713.1 395.8 710.3 C394.1 707.5 393.1 701.6 394.7 698.7Z" fill="#f6dcbc" opacity="0.95"/><ellipse cx="388.6" cy="687.6" rx="5.6" ry="6.4" fill="#3a2626" opacity="1"/><ellipse cx="415.1" cy="683.5" rx="5.2" ry="6.6" fill="#4a3030" opacity="1"/><ellipse cx="396.3" cy="696.5" rx="1.4" ry="1.4" fill="#1a1212" opacity="1"/><ellipse cx="410.2" cy="694.8" rx="1.4" ry="1.4" fill="#1a1212" opacity="1"/><ellipse cx="404.4" cy="707.5" rx="3.0" ry="3.6" fill="#ee9aa4" opacity="1"/><ellipse cx="394.1" cy="740.7" rx="4.0" ry="3.0" fill="#f6dccc" opacity="1"/><ellipse cx="408.0" cy="734.1" rx="4.5" ry="3.5" fill="#f6d8c8" opacity="1"/><ellipse cx="399.1" cy="755.3" rx="2.6" ry="3.0" fill="#ecb43c" opacity="1"/></g></g><path d="M111.5 471.6 C112.7 469.3 120.7 465.6 123.0 466.3 C125.2 467.0 126.3 473.5 125.1 475.7 C123.8 478.0 117.9 480.6 115.7 479.9 C113.4 479.2 110.3 473.8 111.5 471.6Z" fill="#6a645e" opacity="0.8"/><path d="M125.1 476.8 C125.4 475.0 129.8 469.6 131.3 469.5 C132.9 469.3 134.8 474.0 134.5 475.7 C134.1 477.5 130.8 479.7 129.2 479.9 C127.7 480.1 124.7 478.5 125.1 476.8Z" fill="#7a746e" opacity="0.7"/><path d="M126.1 479.9 L129.2 494.5 L138.6 488.3Z" fill="#4a443f" opacity="0.85"/><ellipse cx="131.3" cy="473.6" rx="3.5" ry="3.5" fill="#8a847e" opacity="0.7"/><ellipse cx="140.7" cy="463.2" rx="4.2" ry="2.6" fill="#4a443f" opacity="0.8"/><ellipse cx="149.1" cy="463.2" rx="4.2" ry="2.6" fill="#4a443f" opacity="0.8"/><ellipse cx="157.4" cy="463.2" rx="4.2" ry="2.6" fill="#4a443f" opacity="0.8"/><ellipse cx="166.8" cy="463.2" rx="4.2" ry="2.6" fill="#4a443f" opacity="0.8"/><ellipse cx="176.2" cy="463.2" rx="4.2" ry="2.6" fill="#4a443f" opacity="0.8"/><path d="M198.2 447.5 C199.9 448.0 205.5 449.7 208.6 450.0 C211.8 450.4 215.6 449.7 217.0 449.6" fill="none" stroke="#2e2a26" stroke-width="1.95" stroke-linecap="round" stroke-linejoin="round" opacity="0.8"/><path d="M213.9 452.8 C214.9 451.9 218.4 449.3 220.1 447.5 C221.9 445.8 223.1 442.3 224.3 442.3 C225.5 442.3 226.4 445.6 227.4 447.5 C228.5 449.4 230.0 452.8 230.6 453.8" fill="none" stroke="#2e2a26" stroke-width="1.46" stroke-linecap="round" stroke-linejoin="round" opacity="0.85"/><path d="M212.8 452.8 C213.5 453.7 217.9 456.6 221.2 456.9 C224.5 457.3 231.6 455.7 232.7 454.8 C233.7 454.0 230.0 452.3 227.4 451.7 C224.8 451.1 219.4 451.1 217.0 451.3 C214.5 451.5 212.1 451.8 212.8 452.8Z" fill="none" stroke="#2e2a26" stroke-width="1.34" stroke-linecap="round" stroke-linejoin="round" opacity="0.85"/><path d="M231.6 454.8 C233.0 455.7 237.5 458.5 240.0 460.1 C242.4 461.6 245.9 464.6 246.2 464.2 C246.6 463.9 243.8 459.5 242.1 458.0 C240.3 456.4 236.8 455.4 235.8 454.8" fill="none" stroke="#2e2a26" stroke-width="1.22" stroke-linecap="round" stroke-linejoin="round" opacity="0.8"/><ellipse cx="218.0" cy="460.1" rx="1.3" ry="1.3" fill="#2e2a26" opacity="0.9"/><circle cx="237.9" cy="445.9" r="4.3" fill="#b4a89c" stroke="#3a3430" stroke-width="1.4" opacity="0.9"/><path d="M236.4 445.9 h3 M237.9 444.4 v3" fill="none" stroke="#6a645e" stroke-width="0.85" stroke-linecap="round" stroke-linejoin="round" opacity="0.7"/><circle cx="250.0" cy="443.4" r="4.3" fill="#b4a89c" stroke="#3a3430" stroke-width="1.4" opacity="0.9"/><path d="M248.5 443.4 h3 M250.0 441.9 v3" fill="none" stroke="#6a645e" stroke-width="0.85" stroke-linecap="round" stroke-linejoin="round" opacity="0.7"/><circle cx="262.9" cy="447.1" r="4.3" fill="#b4a89c" stroke="#3a3430" stroke-width="1.4" opacity="0.9"/><path d="M261.4 447.1 h3 M262.9 445.6 v3" fill="none" stroke="#6a645e" stroke-width="0.85" stroke-linecap="round" stroke-linejoin="round" opacity="0.7"/><circle cx="274.4" cy="453.8" r="4.3" fill="#b4a89c" stroke="#3a3430" stroke-width="1.4" opacity="0.9"/><path d="M272.9 453.8 h3 M274.4 452.3 v3" fill="none" stroke="#6a645e" stroke-width="0.85" stroke-linecap="round" stroke-linejoin="round" opacity="0.7"/><circle cx="283.4" cy="464.2" r="4.3" fill="#b4a89c" stroke="#3a3430" stroke-width="1.4" opacity="0.9"/><path d="M281.9 464.2 h3 M283.4 462.7 v3" fill="none" stroke="#6a645e" stroke-width="0.85" stroke-linecap="round" stroke-linejoin="round" opacity="0.7"/><path d="M296.4 456.9 L302.6 466.3 L291.1 473.6 L289.1 468.4Z" fill="#5a544e" opacity="0.8"/><path d="M270.3 476.8 L287.0 472.6 L283.8 482.0 L277.6 485.1Z" fill="#4a443f" opacity="0.85"/><path d="M289.1 475.7 L300.5 484.1 L288.0 488.3Z" fill="#7a746e" opacity="0.7"/><ellipse cx="287.0" cy="471.6" rx="3.0" ry="4.0" fill="#6a645e" opacity="0.8"/><path d="M281.7 462.2 C282.4 463.2 285.6 466.3 285.9 468.4 C286.3 470.5 284.2 473.6 283.8 474.7" fill="none" stroke="#2e2a26" stroke-width="1.22" stroke-linecap="round" stroke-linejoin="round" opacity="0.7"/><path d="M162.7 487.2 C171.2 486.6 190.5 486.6 204.4 486.6 C218.4 486.6 236.8 486.9 246.2 487.2 C255.6 487.5 257.0 486.5 260.9 488.3 C264.8 490.0 268.0 491.9 269.6 497.7 C271.3 503.4 270.8 512.3 270.9 522.7 C271.0 533.2 270.5 548.5 270.3 560.3 C270.0 572.2 270.1 584.0 269.6 593.8 C269.1 603.5 269.6 611.9 267.1 618.8 C264.6 625.8 261.5 631.7 254.6 635.5 C247.6 639.4 237.2 640.9 225.3 641.8 C213.5 642.7 194.7 641.8 183.6 640.8 C172.4 639.7 164.9 638.9 158.5 635.5 C152.1 632.2 147.7 627.9 144.9 620.9 C142.1 614.0 142.5 603.9 141.8 593.8 C141.1 583.7 140.6 571.5 140.7 560.3 C140.9 549.2 141.8 536.7 142.8 526.9 C143.9 517.2 145.3 507.9 147.0 501.8 C148.7 495.8 150.7 492.8 153.3 490.4 C155.9 487.9 154.1 487.9 162.7 487.2Z" fill="none" stroke="#2e2a26" stroke-width="1.59" stroke-linecap="round" stroke-linejoin="round" opacity="0.9"/><path d="M144.9 497.7 C144.7 502.9 143.8 516.8 143.5 529.0 C143.1 541.2 142.6 556.9 142.8 570.8 C143.1 584.7 144.6 605.6 144.9 612.6" fill="none" stroke="#6a645e" stroke-width="0.98" stroke-linecap="round" stroke-linejoin="round" opacity="0.5"/><clipPath id="pt1"><path d="M150.1 492.4 C152.9 490.3 158.1 489.3 162.7 488.9 C167.2 488.4 174.0 487.2 177.3 489.7 C180.6 492.2 181.9 498.8 182.5 503.9 C183.1 509.1 182.6 516.5 181.1 520.6 C179.5 524.8 175.7 528.7 173.1 529.0 C170.6 529.4 167.5 525.5 165.8 522.7 C164.1 520.0 164.9 513.0 162.7 512.3 C160.4 511.6 154.8 518.2 152.2 518.6 C149.6 518.9 148.0 517.2 147.0 514.4 C146.0 511.6 145.9 505.5 146.4 501.8 C146.9 498.2 147.4 494.6 150.1 492.4Z"/></clipPath><path d="M150.1 492.4 C152.9 490.3 158.1 489.3 162.7 488.9 C167.2 488.4 174.0 487.2 177.3 489.7 C180.6 492.2 181.9 498.8 182.5 503.9 C183.1 509.1 182.6 516.5 181.1 520.6 C179.5 524.8 175.7 528.7 173.1 529.0 C170.6 529.4 167.5 525.5 165.8 522.7 C164.1 520.0 164.9 513.0 162.7 512.3 C160.4 511.6 154.8 518.2 152.2 518.6 C149.6 518.9 148.0 517.2 147.0 514.4 C146.0 511.6 145.9 505.5 146.4 501.8 C146.9 498.2 147.4 494.6 150.1 492.4Z" fill="#4d4742" opacity="0.72" filter="url(#b1)"/><path d="M143.4 487.9 L134.4 530.0M146.0 487.9 L137.0 530.0M148.6 487.9 L139.6 530.0M151.2 487.9 L142.2 530.0M153.8 487.9 L144.8 530.0M156.4 487.9 L147.4 530.0M159.0 487.9 L150.0 530.0M161.6 487.9 L152.6 530.0M164.2 487.9 L155.2 530.0M166.8 487.9 L157.8 530.0M169.4 487.9 L160.4 530.0M172.0 487.9 L163.0 530.0M174.6 487.9 L165.6 530.0M177.2 487.9 L168.2 530.0M179.8 487.9 L170.8 530.0M182.4 487.9 L173.4 530.0M185.0 487.9 L176.0 530.0M187.6 487.9 L178.6 530.0M190.2 487.9 L181.2 530.0M192.8 487.9 L183.8 530.0M195.4 487.9 L186.4 530.0" stroke="#fdeee1" stroke-width="0.7" opacity="0.32" fill="none" clip-path="url(#pt1)"/><path d="M150.1 492.4 C152.9 490.3 158.1 489.3 162.7 488.9 C167.2 488.4 174.0 487.2 177.3 489.7 C180.6 492.2 181.9 498.8 182.5 503.9 C183.1 509.1 182.6 516.5 181.1 520.6 C179.5 524.8 175.7 528.7 173.1 529.0 C170.6 529.4 167.5 525.5 165.8 522.7 C164.1 520.0 164.9 513.0 162.7 512.3 C160.4 511.6 154.8 518.2 152.2 518.6 C149.6 518.9 148.0 517.2 147.0 514.4 C146.0 511.6 145.9 505.5 146.4 501.8 C146.9 498.2 147.4 494.6 150.1 492.4Z" fill="none" stroke="#2e2a26" stroke-width="1.1" stroke-linecap="round" stroke-linejoin="round" opacity="0.55"/><clipPath id="pt2"><path d="M198.2 508.1 C199.7 505.5 204.1 507.1 208.6 507.1 C213.2 507.1 219.8 508.6 225.3 508.1 C230.9 507.6 238.4 502.9 242.1 503.9 C245.7 505.0 247.3 510.9 247.3 514.4 C247.3 517.9 245.7 522.0 242.1 524.8 C238.4 527.6 230.9 530.0 225.3 531.1 C219.8 532.2 213.0 532.9 208.6 531.5 C204.3 530.1 201.0 526.6 199.2 522.7 C197.5 518.8 196.6 510.7 198.2 508.1Z"/></clipPath><path d="M198.2 508.1 C199.7 505.5 204.1 507.1 208.6 507.1 C213.2 507.1 219.8 508.6 225.3 508.1 C230.9 507.6 238.4 502.9 242.1 503.9 C245.7 505.0 247.3 510.9 247.3 514.4 C247.3 517.9 245.7 522.0 242.1 524.8 C238.4 527.6 230.9 530.0 225.3 531.1 C219.8 532.2 213.0 532.9 208.6 531.5 C204.3 530.1 201.0 526.6 199.2 522.7 C197.5 518.8 196.6 510.7 198.2 508.1Z" fill="#4d4742" opacity="0.72" filter="url(#b1)"/><path d="M195.2 502.9 L186.2 532.5M197.8 502.9 L188.8 532.5M200.4 502.9 L191.4 532.5M203.0 502.9 L194.0 532.5M205.6 502.9 L196.6 532.5M208.2 502.9 L199.2 532.5M210.8 502.9 L201.8 532.5M213.4 502.9 L204.4 532.5M216.0 502.9 L207.0 532.5M218.6 502.9 L209.6 532.5M221.2 502.9 L212.2 532.5M223.8 502.9 L214.8 532.5M226.4 502.9 L217.4 532.5M229.0 502.9 L220.0 532.5M231.6 502.9 L222.6 532.5M234.2 502.9 L225.2 532.5M236.8 502.9 L227.8 532.5M239.4 502.9 L230.4 532.5M242.0 502.9 L233.0 532.5M244.6 502.9 L235.6 532.5M247.2 502.9 L238.2 532.5M249.8 502.9 L240.8 532.5M252.4 502.9 L243.4 532.5M255.0 502.9 L246.0 532.5M257.6 502.9 L248.6 532.5M260.2 502.9 L251.2 532.5" stroke="#fdeee1" stroke-width="0.7" opacity="0.32" fill="none" clip-path="url(#pt2)"/><path d="M198.2 508.1 C199.7 505.5 204.1 507.1 208.6 507.1 C213.2 507.1 219.8 508.6 225.3 508.1 C230.9 507.6 238.4 502.9 242.1 503.9 C245.7 505.0 247.3 510.9 247.3 514.4 C247.3 517.9 245.7 522.0 242.1 524.8 C238.4 527.6 230.9 530.0 225.3 531.1 C219.8 532.2 213.0 532.9 208.6 531.5 C204.3 530.1 201.0 526.6 199.2 522.7 C197.5 518.8 196.6 510.7 198.2 508.1Z" fill="none" stroke="#2e2a26" stroke-width="1.1" stroke-linecap="round" stroke-linejoin="round" opacity="0.55"/><clipPath id="pt3"><path d="M255.6 492.4 C256.8 490.9 262.6 489.1 265.0 490.4 C267.5 491.6 269.5 496.5 270.3 499.8 C271.0 503.1 270.8 509.2 269.6 510.2 C268.4 511.2 264.9 507.8 262.9 506.0 C261.0 504.3 258.9 502.0 257.7 499.8 C256.5 497.5 254.4 494.0 255.6 492.4Z"/></clipPath><path d="M255.6 492.4 C256.8 490.9 262.6 489.1 265.0 490.4 C267.5 491.6 269.5 496.5 270.3 499.8 C271.0 503.1 270.8 509.2 269.6 510.2 C268.4 511.2 264.9 507.8 262.9 506.0 C261.0 504.3 258.9 502.0 257.7 499.8 C256.5 497.5 254.4 494.0 255.6 492.4Z" fill="#4d4742" opacity="0.72" filter="url(#b1)"/><path d="M252.6 489.4 L243.6 511.2M255.2 489.4 L246.2 511.2M257.8 489.4 L248.8 511.2M260.4 489.4 L251.4 511.2M263.0 489.4 L254.0 511.2M265.6 489.4 L256.6 511.2M268.2 489.4 L259.2 511.2M270.8 489.4 L261.8 511.2M273.4 489.4 L264.4 511.2M276.0 489.4 L267.0 511.2M278.6 489.4 L269.6 511.2M281.2 489.4 L272.2 511.2" stroke="#fdeee1" stroke-width="0.7" opacity="0.32" fill="none" clip-path="url(#pt3)"/><path d="M255.6 492.4 C256.8 490.9 262.6 489.1 265.0 490.4 C267.5 491.6 269.5 496.5 270.3 499.8 C271.0 503.1 270.8 509.2 269.6 510.2 C268.4 511.2 264.9 507.8 262.9 506.0 C261.0 504.3 258.9 502.0 257.7 499.8 C256.5 497.5 254.4 494.0 255.6 492.4Z" fill="none" stroke="#2e2a26" stroke-width="1.1" stroke-linecap="round" stroke-linejoin="round" opacity="0.55"/><clipPath id="pt4"><path d="M258.3 530.0 C259.2 528.1 263.3 526.4 265.0 526.9 C266.8 527.4 268.8 531.1 268.8 533.2 C268.8 535.3 266.5 538.6 265.0 539.4 C263.5 540.3 260.9 540.0 259.8 538.4 C258.7 536.8 257.5 532.0 258.3 530.0Z"/></clipPath><path d="M258.3 530.0 C259.2 528.1 263.3 526.4 265.0 526.9 C266.8 527.4 268.8 531.1 268.8 533.2 C268.8 535.3 266.5 538.6 265.0 539.4 C263.5 540.3 260.9 540.0 259.8 538.4 C258.7 536.8 257.5 532.0 258.3 530.0Z" fill="#4d4742" opacity="0.72" filter="url(#b1)"/><path d="M255.3 525.9 L246.3 540.4M257.9 525.9 L248.9 540.4M260.5 525.9 L251.5 540.4M263.1 525.9 L254.1 540.4M265.7 525.9 L256.7 540.4M268.3 525.9 L259.3 540.4M270.9 525.9 L261.9 540.4M273.5 525.9 L264.5 540.4M276.1 525.9 L267.1 540.4M278.7 525.9 L269.7 540.4M281.3 525.9 L272.3 540.4" stroke="#fdeee1" stroke-width="0.7" opacity="0.32" fill="none" clip-path="url(#pt4)"/><path d="M258.3 530.0 C259.2 528.1 263.3 526.4 265.0 526.9 C266.8 527.4 268.8 531.1 268.8 533.2 C268.8 535.3 266.5 538.6 265.0 539.4 C263.5 540.3 260.9 540.0 259.8 538.4 C258.7 536.8 257.5 532.0 258.3 530.0Z" fill="none" stroke="#2e2a26" stroke-width="1.1" stroke-linecap="round" stroke-linejoin="round" opacity="0.55"/><clipPath id="pt5"><path d="M233.7 572.9 C235.8 571.1 242.6 572.2 246.2 570.8 C249.9 569.4 252.5 567.0 255.6 564.5 C258.8 562.1 262.6 557.2 265.0 556.2 C267.5 555.1 269.5 554.1 270.3 558.3 C271.0 562.4 271.2 575.7 269.6 581.2 C268.1 586.8 264.1 589.8 260.9 591.7 C257.6 593.6 253.2 593.9 250.4 592.7 C247.6 591.5 246.9 586.3 244.1 584.4 C241.4 582.4 235.4 583.1 233.7 581.2 C232.0 579.3 231.6 574.6 233.7 572.9Z"/></clipPath><path d="M233.7 572.9 C235.8 571.1 242.6 572.2 246.2 570.8 C249.9 569.4 252.5 567.0 255.6 564.5 C258.8 562.1 262.6 557.2 265.0 556.2 C267.5 555.1 269.5 554.1 270.3 558.3 C271.0 562.4 271.2 575.7 269.6 581.2 C268.1 586.8 264.1 589.8 260.9 591.7 C257.6 593.6 253.2 593.9 250.4 592.7 C247.6 591.5 246.9 586.3 244.1 584.4 C241.4 582.4 235.4 583.1 233.7 581.2 C232.0 579.3 231.6 574.6 233.7 572.9Z" fill="#4d4742" opacity="0.72" filter="url(#b1)"/><path d="M230.7 555.2 L221.7 593.7M233.3 555.2 L224.3 593.7M235.9 555.2 L226.9 593.7M238.5 555.2 L229.5 593.7M241.1 555.2 L232.1 593.7M243.7 555.2 L234.7 593.7M246.3 555.2 L237.3 593.7M248.9 555.2 L239.9 593.7M251.5 555.2 L242.5 593.7M254.1 555.2 L245.1 593.7M256.7 555.2 L247.7 593.7M259.3 555.2 L250.3 593.7M261.9 555.2 L252.9 593.7M264.5 555.2 L255.5 593.7M267.1 555.2 L258.1 593.7M269.7 555.2 L260.7 593.7M272.3 555.2 L263.3 593.7M274.9 555.2 L265.9 593.7M277.5 555.2 L268.5 593.7M280.1 555.2 L271.1 593.7M282.7 555.2 L273.7 593.7" stroke="#fdeee1" stroke-width="0.7" opacity="0.32" fill="none" clip-path="url(#pt5)"/><path d="M233.7 572.9 C235.8 571.1 242.6 572.2 246.2 570.8 C249.9 569.4 252.5 567.0 255.6 564.5 C258.8 562.1 262.6 557.2 265.0 556.2 C267.5 555.1 269.5 554.1 270.3 558.3 C271.0 562.4 271.2 575.7 269.6 581.2 C268.1 586.8 264.1 589.8 260.9 591.7 C257.6 593.6 253.2 593.9 250.4 592.7 C247.6 591.5 246.9 586.3 244.1 584.4 C241.4 582.4 235.4 583.1 233.7 581.2 C232.0 579.3 231.6 574.6 233.7 572.9Z" fill="none" stroke="#2e2a26" stroke-width="1.1" stroke-linecap="round" stroke-linejoin="round" opacity="0.55"/><clipPath id="pt6"><path d="M149.1 584.4 C151.0 581.8 157.6 581.6 162.7 581.2 C167.7 580.9 174.5 580.9 179.4 582.3 C184.3 583.7 189.8 586.6 191.9 589.6 C194.0 592.5 194.0 598.6 191.9 600.0 C189.8 601.4 184.3 597.6 179.4 597.9 C174.5 598.3 167.4 602.3 162.7 602.1 C158.0 601.9 153.4 599.9 151.2 596.9 C148.9 593.9 147.2 587.0 149.1 584.4Z"/></clipPath><path d="M149.1 584.4 C151.0 581.8 157.6 581.6 162.7 581.2 C167.7 580.9 174.5 580.9 179.4 582.3 C184.3 583.7 189.8 586.6 191.9 589.6 C194.0 592.5 194.0 598.6 191.9 600.0 C189.8 601.4 184.3 597.6 179.4 597.9 C174.5 598.3 167.4 602.3 162.7 602.1 C158.0 601.9 153.4 599.9 151.2 596.9 C148.9 593.9 147.2 587.0 149.1 584.4Z" fill="#4d4742" opacity="0.72" filter="url(#b1)"/><path d="M146.1 580.2 L137.1 603.1M148.7 580.2 L139.7 603.1M151.3 580.2 L142.3 603.1M153.9 580.2 L144.9 603.1M156.5 580.2 L147.5 603.1M159.1 580.2 L150.1 603.1M161.7 580.2 L152.7 603.1M164.3 580.2 L155.3 603.1M166.9 580.2 L157.9 603.1M169.5 580.2 L160.5 603.1M172.1 580.2 L163.1 603.1M174.7 580.2 L165.7 603.1M177.3 580.2 L168.3 603.1M179.9 580.2 L170.9 603.1M182.5 580.2 L173.5 603.1M185.1 580.2 L176.1 603.1M187.7 580.2 L178.7 603.1M190.3 580.2 L181.3 603.1M192.9 580.2 L183.9 603.1M195.5 580.2 L186.5 603.1M198.1 580.2 L189.1 603.1M200.7 580.2 L191.7 603.1M203.3 580.2 L194.3 603.1" stroke="#fdeee1" stroke-width="0.7" opacity="0.32" fill="none" clip-path="url(#pt6)"/><path d="M149.1 584.4 C151.0 581.8 157.6 581.6 162.7 581.2 C167.7 580.9 174.5 580.9 179.4 582.3 C184.3 583.7 189.8 586.6 191.9 589.6 C194.0 592.5 194.0 598.6 191.9 600.0 C189.8 601.4 184.3 597.6 179.4 597.9 C174.5 598.3 167.4 602.3 162.7 602.1 C158.0 601.9 153.4 599.9 151.2 596.9 C148.9 593.9 147.2 587.0 149.1 584.4Z" fill="none" stroke="#2e2a26" stroke-width="1.1" stroke-linecap="round" stroke-linejoin="round" opacity="0.55"/><clipPath id="pt7"><path d="M152.2 624.1 C153.1 622.0 157.4 620.6 160.6 620.9 C163.7 621.3 168.4 623.5 171.0 626.1 C173.6 628.8 176.9 634.5 176.2 636.6 C175.6 638.7 170.3 639.2 166.8 638.7 C163.4 638.2 157.8 635.9 155.4 633.5 C152.9 631.0 151.4 626.1 152.2 624.1Z"/></clipPath><path d="M152.2 624.1 C153.1 622.0 157.4 620.6 160.6 620.9 C163.7 621.3 168.4 623.5 171.0 626.1 C173.6 628.8 176.9 634.5 176.2 636.6 C175.6 638.7 170.3 639.2 166.8 638.7 C163.4 638.2 157.8 635.9 155.4 633.5 C152.9 631.0 151.4 626.1 152.2 624.1Z" fill="#4d4742" opacity="0.72" filter="url(#b1)"/><path d="M149.2 619.9 L140.2 639.7M151.8 619.9 L142.8 639.7M154.4 619.9 L145.4 639.7M157.0 619.9 L148.0 639.7M159.6 619.9 L150.6 639.7M162.2 619.9 L153.2 639.7M164.8 619.9 L155.8 639.7M167.4 619.9 L158.4 639.7M170.0 619.9 L161.0 639.7M172.6 619.9 L163.6 639.7M175.2 619.9 L166.2 639.7M177.8 619.9 L168.8 639.7M180.4 619.9 L171.4 639.7M183.0 619.9 L174.0 639.7M185.6 619.9 L176.6 639.7M188.2 619.9 L179.2 639.7" stroke="#fdeee1" stroke-width="0.7" opacity="0.32" fill="none" clip-path="url(#pt7)"/><path d="M152.2 624.1 C153.1 622.0 157.4 620.6 160.6 620.9 C163.7 621.3 168.4 623.5 171.0 626.1 C173.6 628.8 176.9 634.5 176.2 636.6 C175.6 638.7 170.3 639.2 166.8 638.7 C163.4 638.2 157.8 635.9 155.4 633.5 C152.9 631.0 151.4 626.1 152.2 624.1Z" fill="none" stroke="#2e2a26" stroke-width="1.1" stroke-linecap="round" stroke-linejoin="round" opacity="0.55"/><clipPath id="pt8"><path d="M250.4 623.0 C250.4 618.3 256.0 608.0 258.8 604.2 C261.5 600.4 265.7 597.6 267.1 600.0 C268.5 602.5 268.5 613.4 267.1 618.8 C265.7 624.2 261.5 631.7 258.8 632.4 C256.0 633.1 250.4 627.7 250.4 623.0Z"/></clipPath><path d="M250.4 623.0 C250.4 618.3 256.0 608.0 258.8 604.2 C261.5 600.4 265.7 597.6 267.1 600.0 C268.5 602.5 268.5 613.4 267.1 618.8 C265.7 624.2 261.5 631.7 258.8 632.4 C256.0 633.1 250.4 627.7 250.4 623.0Z" fill="#4d4742" opacity="0.72" filter="url(#b1)"/><path d="M247.4 599.0 L238.4 633.4M250.0 599.0 L241.0 633.4M252.6 599.0 L243.6 633.4M255.2 599.0 L246.2 633.4M257.8 599.0 L248.8 633.4M260.4 599.0 L251.4 633.4M263.0 599.0 L254.0 633.4M265.6 599.0 L256.6 633.4M268.2 599.0 L259.2 633.4M270.8 599.0 L261.8 633.4M273.4 599.0 L264.4 633.4M276.0 599.0 L267.0 633.4M278.6 599.0 L269.6 633.4" stroke="#fdeee1" stroke-width="0.7" opacity="0.32" fill="none" clip-path="url(#pt8)"/><path d="M250.4 623.0 C250.4 618.3 256.0 608.0 258.8 604.2 C261.5 600.4 265.7 597.6 267.1 600.0 C268.5 602.5 268.5 613.4 267.1 618.8 C265.7 624.2 261.5 631.7 258.8 632.4 C256.0 633.1 250.4 627.7 250.4 623.0Z" fill="none" stroke="#2e2a26" stroke-width="1.1" stroke-linecap="round" stroke-linejoin="round" opacity="0.55"/><rect x="184.8" y="481.5" width="48.0" height="26.0" fill="#fdeee1"/><path d="M185.2 463.2 L185.2 506.0 L232.0 506.0 L232.7 462.2" fill="none" stroke="#2e2a26" stroke-width="1.71" stroke-linecap="round" stroke-linejoin="round" opacity="0.95"/><path d="M185.2 482.6 L232.0 481.4" fill="none" stroke="#2e2a26" stroke-width="1.59" stroke-linecap="round" stroke-linejoin="round" opacity="0.9"/><path d="M185.6 463.2 C187.0 461.4 190.2 469.8 194.0 471.6 C197.8 473.3 205.8 471.9 208.6 473.6 C211.4 475.4 214.5 480.6 210.7 482.0 C207.0 483.4 190.2 485.3 186.1 482.2 C181.9 479.1 184.3 465.0 185.6 463.2Z" fill="#57514c" opacity="0.8"/><path d="M225.3 466.3 C227.0 464.8 230.9 460.7 232.0 463.2 C233.2 465.7 234.2 478.3 232.2 481.4 C230.2 484.4 221.8 482.8 220.1 481.4 C218.4 479.9 221.3 475.1 222.2 472.6 C223.1 470.1 223.7 467.9 225.3 466.3Z" fill="#57514c" opacity="0.8"/><path d="M191.9 495.6 C192.3 494.6 193.0 490.5 194.0 489.7 C195.0 489.0 197.5 490.8 198.2 491.0" fill="none" stroke="#2e2a26" stroke-width="1.22" stroke-linecap="round" stroke-linejoin="round" opacity="0.8"/><path d="M219.1 492.4 C219.8 491.8 222.4 488.1 223.7 488.3 C224.9 488.4 225.9 492.6 226.4 493.5" fill="none" stroke="#2e2a26" stroke-width="1.22" stroke-linecap="round" stroke-linejoin="round" opacity="0.8"/><ellipse cx="207.6" cy="500.8" rx="6.0" ry="2.8" fill="#221e1c" opacity="0.95"/><ellipse cx="217.0" cy="486.2" rx="1.0" ry="1.0" fill="#2e2a26" opacity="0.9"/><path d="M162.7 522.7 C163.4 525.5 164.1 534.6 166.8 539.4 C169.6 544.3 176.2 549.0 179.4 552.0 C182.5 554.9 184.6 556.3 185.6 557.2" fill="none" stroke="#2e2a26" stroke-width="1.34" stroke-linecap="round" stroke-linejoin="round" opacity="0.85"/><path d="M152.2 558.3 C154.7 558.6 162.0 560.3 166.8 560.3 C171.7 560.3 179.0 558.6 181.5 558.3" fill="none" stroke="#2e2a26" stroke-width="1.22" stroke-linecap="round" stroke-linejoin="round" opacity="0.8"/><path d="M182.5 556.2 C183.2 554.8 185.6 552.9 186.7 553.0 C187.7 553.2 188.8 555.5 188.8 557.2 C188.8 558.9 187.7 562.8 186.7 563.5 C185.6 564.2 183.2 562.6 182.5 561.4 C181.8 560.2 181.8 557.6 182.5 556.2Z" fill="#fdeee1" stroke="#2e2a26" stroke-width="1.34" stroke-linecap="round" stroke-linejoin="round" opacity="0.85"/><path d="M265.0 539.4 C263.3 541.5 259.1 549.0 254.6 552.0 C250.1 554.9 241.9 556.5 237.9 557.2 C233.9 557.9 231.8 556.3 230.6 556.2" fill="none" stroke="#2e2a26" stroke-width="1.34" stroke-linecap="round" stroke-linejoin="round" opacity="0.85"/><path d="M225.3 552.0 C226.3 550.9 229.8 552.5 230.6 554.1 C231.3 555.6 230.9 560.3 229.9 561.4 C229.0 562.4 225.7 561.9 224.9 560.3 C224.2 558.8 224.4 553.0 225.3 552.0Z" fill="#fdeee1" stroke="#2e2a26" stroke-width="1.34" stroke-linecap="round" stroke-linejoin="round" opacity="0.85"/><path d="M191.9 558.3 L198.2 560.3" fill="none" stroke="#2e2a26" stroke-width="1.22" stroke-linecap="round" stroke-linejoin="round" opacity="0.7"/><path d="M190.9 563.5 L193.0 566.6" fill="none" stroke="#2e2a26" stroke-width="1.22" stroke-linecap="round" stroke-linejoin="round" opacity="0.7"/><path d="M215.9 555.1 L221.2 554.1" fill="none" stroke="#2e2a26" stroke-width="1.22" stroke-linecap="round" stroke-linejoin="round" opacity="0.7"/><path d="M217.0 560.3 L221.2 562.4" fill="none" stroke="#2e2a26" stroke-width="1.22" stroke-linecap="round" stroke-linejoin="round" opacity="0.7"/><path d="M153.3 557.2 C152.7 559.1 149.9 565.2 150.1 568.7 C150.4 572.2 151.6 577.4 154.7 578.1 C157.9 578.8 164.5 572.7 168.9 572.9 C173.4 573.0 178.0 576.4 181.5 579.1 C185.0 581.9 187.9 586.5 189.8 589.6 C191.7 592.7 192.4 596.5 193.0 597.9" fill="none" stroke="#2e2a26" stroke-width="1.34" stroke-linecap="round" stroke-linejoin="round" opacity="0.85"/><path d="M193.0 589.6 C194.2 587.8 197.7 581.6 200.3 579.1 C202.9 576.7 205.8 574.6 208.6 575.0 C211.4 575.3 214.5 578.4 217.0 581.2 C219.4 584.0 222.2 589.9 223.3 591.7" fill="none" stroke="#2e2a26" stroke-width="1.34" stroke-linecap="round" stroke-linejoin="round" opacity="0.85"/><path d="M225.3 591.7 C226.2 589.9 228.5 584.4 230.6 581.2 C232.7 578.1 234.6 575.0 237.9 572.9 C241.2 570.8 247.4 570.8 250.4 568.7 C253.4 566.6 254.9 562.8 255.6 560.3 C256.3 557.9 254.8 555.1 254.6 554.1" fill="none" stroke="#2e2a26" stroke-width="1.34" stroke-linecap="round" stroke-linejoin="round" opacity="0.85"/><path d="M191.9 590.6 L193.0 602.1" fill="none" stroke="#2e2a26" stroke-width="1.46" stroke-linecap="round" stroke-linejoin="round" opacity="0.8"/><path d="M224.3 589.6 L225.3 594.8" fill="none" stroke="#2e2a26" stroke-width="1.46" stroke-linecap="round" stroke-linejoin="round" opacity="0.8"/><path d="M154.7 577.1 L153.9 581.2" fill="none" stroke="#2e2a26" stroke-width="1.34" stroke-linecap="round" stroke-linejoin="round" opacity="0.7"/><path d="M253.5 571.8 L254.2 579.1" fill="none" stroke="#2e2a26" stroke-width="1.34" stroke-linecap="round" stroke-linejoin="round" opacity="0.7"/><path d="M180.4 603.2 C180.4 601.6 195.9 599.2 204.4 599.0 C213.0 598.8 231.6 600.6 231.6 602.1 C231.6 603.7 213.0 608.2 204.4 608.4 C195.9 608.6 180.4 604.7 180.4 603.2Z" fill="none" stroke="#2e2a26" stroke-width="1.34" stroke-linecap="round" stroke-linejoin="round" opacity="0.85"/><path d="M185.6 604.6 C188.8 605.1 197.5 607.5 204.4 607.3 C211.4 607.2 223.6 604.4 227.4 603.8" fill="none" stroke="#2e2a26" stroke-width="1.95" stroke-linecap="round" stroke-linejoin="round" opacity="0.7"/><path d="M181.1 603.2 L182.5 630.3" fill="none" stroke="#2e2a26" stroke-width="1.34" stroke-linecap="round" stroke-linejoin="round" opacity="0.8"/><path d="M231.6 602.1 L229.5 627.2" fill="none" stroke="#2e2a26" stroke-width="1.34" stroke-linecap="round" stroke-linejoin="round" opacity="0.8"/><path d="M182.5 629.3 C186.2 629.6 194.2 631.5 204.4 631.4 C214.7 631.2 237.5 628.8 244.1 628.2" fill="none" stroke="#6a645e" stroke-width="1.22" stroke-linecap="round" stroke-linejoin="round" opacity="0.6"/><path d="M187.7 608.4 C188.4 610.8 189.8 619.4 191.9 623.0 C194.0 626.7 198.9 629.1 200.3 630.3" fill="none" stroke="#6a645e" stroke-width="1.1" stroke-linecap="round" stroke-linejoin="round" opacity="0.6"/><path d="M230.6 606.3 C231.8 608.4 237.4 615.0 237.9 618.8 C238.4 622.7 234.4 627.5 233.7 629.3" fill="none" stroke="#6a645e" stroke-width="1.1" stroke-linecap="round" stroke-linejoin="round" opacity="0.5"/><text x="184.5" y="626.5" font-size="12.5" letter-spacing="0.7" fill="#2e2a26" opacity="0.85">牛奶</text><path d="M187.7 635.5 C189.0 634.5 192.5 633.3 194.0 634.5 C195.5 635.7 197.0 640.9 196.5 642.9 C196.0 644.8 192.5 646.3 190.9 646.0 C189.2 645.6 187.2 642.5 186.7 640.8 C186.2 639.0 186.5 636.6 187.7 635.5Z" fill="#fdeee1" stroke="#2e2a26" stroke-width="1.34" stroke-linecap="round" stroke-linejoin="round" opacity="0.85"/><path d="M211.8 635.5 C213.2 634.5 217.5 633.5 219.1 634.5 C220.6 635.5 221.9 640.1 221.2 641.8 C220.4 643.6 216.2 645.1 214.5 644.9 C212.7 644.8 211.2 642.3 210.7 640.8 C210.3 639.2 210.4 636.6 211.8 635.5Z" fill="#fdeee1" stroke="#2e2a26" stroke-width="1.34" stroke-linecap="round" stroke-linejoin="round" opacity="0.85"/><path d="M198.2 636.6 C199.2 636.2 202.4 634.6 204.4 634.5 C206.5 634.4 209.7 635.7 210.7 636.0" fill="none" stroke="#2e2a26" stroke-width="1.22" stroke-linecap="round" stroke-linejoin="round" opacity="0.7"/><path d="M270.3 611.5 C271.8 612.0 276.3 614.8 279.7 614.7 C283.0 614.5 287.5 612.9 290.1 610.5 C292.7 608.0 294.1 602.8 295.3 600.0 C296.5 597.2 297.1 594.8 297.4 593.8" fill="none" stroke="#2e2a26" stroke-width="1.46" stroke-linecap="round" stroke-linejoin="round" opacity="0.9"/><path d="M294.3 595.9 L296.4 586.5 L305.8 589.6 L301.6 600.0Z" fill="#4a443f" opacity="0.8"/><path d="M397.2 478.8 C396.4 477.1 394.8 471.2 392.1 468.6 C389.4 466.0 385.1 463.7 380.9 463.5 C376.6 463.3 370.4 465.0 366.6 467.6 C362.7 470.1 359.0 474.2 358.0 478.8 C357.0 483.4 359.0 490.4 360.4 495.2 C361.9 499.9 366.6 503.9 366.6 507.4 C366.6 510.9 359.7 515.1 360.4 516.0 C361.1 516.8 367.4 515.0 370.6 512.5 C373.9 510.1 378.3 503.2 379.8 501.3" fill="none" stroke="#2e2a26" stroke-width="1.46" stroke-linecap="round" stroke-linejoin="round" opacity="0.85"/><path d="M383.9 481.9 C383.1 483.8 381.0 489.9 378.8 493.1 C376.6 496.4 372.0 499.9 370.6 501.3" fill="none" stroke="#6a645e" stroke-width="0.98" stroke-linecap="round" stroke-linejoin="round" opacity="0.6"/><path d="M462.6 475.8 C464.3 474.2 468.7 468.4 472.8 466.6 C476.9 464.8 482.3 463.9 487.1 464.9 C491.9 465.9 497.1 469.2 501.4 472.7 C505.6 476.2 509.2 483.2 512.6 486.0 C516.1 488.7 522.1 487.0 522.2 489.0 C522.4 491.1 516.8 496.0 513.6 498.2 C510.5 500.4 506.3 502.1 503.4 502.3 C500.5 502.5 497.5 499.8 496.3 499.2" fill="none" stroke="#2e2a26" stroke-width="1.46" stroke-linecap="round" stroke-linejoin="round" opacity="0.85"/><path d="M470.7 477.8 C473.5 477.6 482.0 475.2 487.1 476.8 C492.2 478.3 497.6 483.9 501.4 487.0 C505.1 490.1 508.2 493.8 509.6 495.2" fill="none" stroke="#6a645e" stroke-width="0.98" stroke-linecap="round" stroke-linejoin="round" opacity="0.6"/><path d="M399.2 478.2 L492.2 478.4" fill="none" stroke="#2e2a26" stroke-width="1.46" stroke-linecap="round" stroke-linejoin="round" opacity="0.85"/><path d="M492.2 478.4 C492.7 485.6 494.4 504.3 495.3 521.7 C496.1 539.1 497.0 572.8 497.3 583.0" fill="none" stroke="#2e2a26" stroke-width="1.59" stroke-linecap="round" stroke-linejoin="round" opacity="0.9"/><path d="M378.8 501.3 C378.0 506.4 374.8 517.6 373.7 531.9 C372.6 546.2 372.5 577.9 372.3 587.1" fill="none" stroke="#2e2a26" stroke-width="1.59" stroke-linecap="round" stroke-linejoin="round" opacity="0.9"/><path d="M491.2 479.8 C491.4 488.5 492.4 515.1 492.8 531.9 C493.2 548.8 493.5 572.8 493.6 581.0" fill="none" stroke="#6a645e" stroke-width="0.98" stroke-linecap="round" stroke-linejoin="round" opacity="0.5"/><path d="M409.5 480.9 L412.5 474.7 L414.6 481.9 L418.7 473.7 L420.7 482.9 L424.8 472.7 L426.8 481.9 L430.9 473.7 L433.0 483.9 L437.0 472.7 L440.1 481.9 L443.2 474.7 L445.2 480.9 L450.3 473.7 L452.4 479.8" fill="none" stroke="#2e2a26" stroke-width="1.22" stroke-linecap="round" stroke-linejoin="round" opacity="0.75"/><path d="M410.5 477.8 C412.4 478.1 417.5 480.0 421.7 479.8 C426.0 479.7 430.6 477.3 436.0 476.8 C441.5 476.3 451.3 476.8 454.4 476.8" fill="none" stroke="#2e2a26" stroke-width="0.98" stroke-linecap="round" stroke-linejoin="round" opacity="0.5"/><path d="M388.6 501.3 C389.0 500.1 389.1 495.7 391.1 494.1 C393.0 492.6 397.0 491.9 400.3 492.1 C403.5 492.3 408.8 494.6 410.5 495.2" fill="none" stroke="#3a3430" stroke-width="5.12" stroke-linecap="round" stroke-linejoin="round" opacity="0.85"/><path d="M451.3 491.1 C452.9 490.5 457.3 487.2 460.5 487.4 C463.8 487.6 467.5 489.3 470.7 492.1 C474.0 494.9 478.4 502.3 479.9 504.4" fill="none" stroke="#3a3430" stroke-width="6.1" stroke-linecap="round" stroke-linejoin="round" opacity="0.85"/><circle cx="402.3" cy="506.4" r="5.5" fill="#fdeee1" stroke="#2e2a26" stroke-width="1.1" opacity="0.85"/><circle cx="457.9" cy="503.7" r="5.5" fill="#fdeee1" stroke="#2e2a26" stroke-width="1.1" opacity="0.85"/><ellipse cx="388.6" cy="525.8" rx="9.5" ry="6.2" fill="#8a847e" opacity="0.35"/><path d="M383.1 520.8 L380.1 530.8M385.1 520.8 L382.1 530.8M387.1 520.8 L384.1 530.8M389.1 520.8 L386.1 530.8M391.1 520.8 L388.1 530.8M393.1 520.8 L390.1 530.8M395.1 520.8 L392.1 530.8M397.1 520.8 L394.1 530.8" stroke="#4a443f" stroke-width="0.7" opacity="0.55" fill="none"/><ellipse cx="477.3" cy="524.8" rx="12.0" ry="6.2" fill="#8a847e" opacity="0.35"/><path d="M469.3 519.8 L466.3 529.8M471.3 519.8 L468.3 529.8M473.3 519.8 L470.3 529.8M475.3 519.8 L472.3 529.8M477.3 519.8 L474.3 529.8M479.3 519.8 L476.3 529.8M481.3 519.8 L478.3 529.8M483.3 519.8 L480.3 529.8M485.3 519.8 L482.3 529.8M487.3 519.8 L484.3 529.8M489.3 519.8 L486.3 529.8" stroke="#4a443f" stroke-width="0.7" opacity="0.55" fill="none"/><path d="M401.3 514.6 C402.5 511.8 407.1 508.1 410.5 507.4 C413.9 506.7 418.1 510.5 421.7 510.5 C425.3 510.5 427.8 508.8 431.9 507.4 C436.0 506.1 442.5 502.3 446.2 502.3 C450.0 502.3 452.2 505.0 454.4 507.4 C456.6 509.8 458.1 513.9 459.5 516.6 C460.9 519.3 463.4 521.7 462.6 523.8 C461.7 525.8 457.1 528.2 454.4 528.9 C451.7 529.5 448.3 526.7 446.2 527.8 C444.2 529.0 443.8 533.8 442.1 536.0 C440.4 538.2 438.4 540.6 436.0 541.1 C433.6 541.6 430.6 539.9 427.8 539.1 C425.1 538.2 422.7 537.5 419.7 536.0 C416.6 534.5 412.2 531.9 409.5 529.9 C406.7 527.8 404.7 526.3 403.3 523.8 C402.0 521.2 400.1 517.3 401.3 514.6Z" fill="#fdeee1" stroke="#2e2a26" stroke-width="1.59" stroke-linecap="round" stroke-linejoin="round" opacity="0.9"/><ellipse cx="417.2" cy="520.1" rx="3.6" ry="5.6" fill="#4a443f" opacity="0.85"/><ellipse cx="444.6" cy="518.7" rx="3.6" ry="5.6" fill="#4a443f" opacity="0.85"/><path d="M436.0 541.1 C436.7 539.6 438.4 533.8 440.1 531.9 C441.8 530.1 444.9 528.2 446.2 529.9 C447.6 531.6 447.9 540.1 448.3 542.1" fill="none" stroke="#2e2a26" stroke-width="1.22" stroke-linecap="round" stroke-linejoin="round" opacity="0.8"/><path d="M397.8 524.8 L408.4 551.3" fill="none" stroke="#3a3430" stroke-width="3.9" stroke-linecap="round" stroke-linejoin="round" opacity="0.85"/><path d="M379.8 542.1 C381.0 544.2 383.4 551.0 387.0 554.4 C390.6 557.8 398.9 561.2 401.3 562.6" fill="none" stroke="#2e2a26" stroke-width="1.34" stroke-linecap="round" stroke-linejoin="round" opacity="0.85"/><path d="M491.2 536.0 C489.8 539.1 486.9 549.6 483.0 554.4 C479.1 559.2 470.2 562.9 467.7 564.6" fill="none" stroke="#2e2a26" stroke-width="1.34" stroke-linecap="round" stroke-linejoin="round" opacity="0.85"/><path d="M376.8 572.8 C378.8 573.1 384.9 575.2 389.0 574.8 C393.1 574.5 399.2 571.4 401.3 570.7" fill="none" stroke="#2e2a26" stroke-width="1.22" stroke-linecap="round" stroke-linejoin="round" opacity="0.7"/><path d="M467.7 572.8 C470.2 572.4 478.7 572.1 483.0 570.7 C487.3 569.4 491.5 565.6 493.2 564.6" fill="none" stroke="#2e2a26" stroke-width="1.22" stroke-linecap="round" stroke-linejoin="round" opacity="0.7"/><path d="M375.0 584.0 L374.0 600.0M376.8 584.0 L375.8 600.0M378.6 584.0 L377.6 600.0M380.4 584.0 L379.4 600.0M382.2 584.0 L381.2 600.0M384.0 584.0 L383.0 600.0M385.8 584.0 L384.8 600.0M387.6 584.0 L386.6 600.0M389.4 584.0 L388.4 600.0M391.2 584.0 L390.2 600.0M393.0 584.0 L392.0 600.0M394.8 584.0 L393.8 600.0M396.6 584.0 L395.6 600.0M398.4 584.0 L397.4 600.0M400.2 584.0 L399.2 600.0" stroke="#2e2a26" stroke-width="1.1" opacity="0.75" fill="none"/><path d="M466.0 582.0 L465.0 600.0M467.8 582.0 L466.8 600.0M469.6 582.0 L468.6 600.0M471.4 582.0 L470.4 600.0M473.2 582.0 L472.2 600.0M475.0 582.0 L474.0 600.0M476.8 582.0 L475.8 600.0M478.6 582.0 L477.6 600.0M480.4 582.0 L479.4 600.0M482.2 582.0 L481.2 600.0M484.0 582.0 L483.0 600.0M485.8 582.0 L484.8 600.0M487.6 582.0 L486.6 600.0M489.4 582.0 L488.4 600.0M491.2 582.0 L490.2 600.0M493.0 582.0 L492.0 600.0M494.8 582.0 L493.8 600.0M496.6 582.0 L495.6 600.0" stroke="#2e2a26" stroke-width="1.1" opacity="0.75" fill="none"/><path d="M409.0 613.0 L408.0 632.0M410.7 613.0 L409.7 632.0M412.4 613.0 L411.4 632.0M414.1 613.0 L413.1 632.0M415.8 613.0 L414.8 632.0M417.5 613.0 L416.5 632.0M419.2 613.0 L418.2 632.0M420.9 613.0 L419.9 632.0M422.6 613.0 L421.6 632.0M424.3 613.0 L423.3 632.0M426.0 613.0 L425.0 632.0M427.7 613.0 L426.7 632.0M429.4 613.0 L428.4 632.0M431.1 613.0 L430.1 632.0M432.8 613.0 L431.8 632.0M434.5 613.0 L433.5 632.0M436.2 613.0 L435.2 632.0M437.9 613.0 L436.9 632.0M439.6 613.0 L438.6 632.0M441.3 613.0 L440.3 632.0M443.0 613.0 L442.0 632.0M444.7 613.0 L443.7 632.0M446.4 613.0 L445.4 632.0M448.1 613.0 L447.1 632.0M449.8 613.0 L448.8 632.0M451.5 613.0 L450.5 632.0M453.2 613.0 L452.2 632.0M454.9 613.0 L453.9 632.0M456.6 613.0 L455.6 632.0M458.3 613.0 L457.3 632.0M460.0 613.0 L459.0 632.0M461.7 613.0 L460.7 632.0" stroke="#2e2a26" stroke-width="1.2" opacity="0.8" fill="none"/><path d="M401.3 555.4 L420.7 549.9 L464.6 541.1 L469.1 570.7 L462.6 607.9 L405.4 614.1 L400.9 583.0Z" fill="#fdeee1" stroke="#2e2a26" stroke-width="1.34" stroke-linecap="round" stroke-linejoin="round" opacity="0.8"/><path d="M420.7 544.2 L435.0 543.8 L436.0 549.3 L421.7 551.3Z" fill="#4a443f" opacity="0.75"/><path d="M405.4 560.5 C406.2 558.8 409.6 557.3 411.5 557.5 C413.4 557.6 416.3 560.0 416.6 561.6 C416.9 563.1 413.4 565.1 413.5 566.7 C413.7 568.2 418.0 569.7 417.6 570.7 C417.3 571.8 413.4 573.3 411.5 572.8 C409.6 572.3 407.4 569.7 406.4 567.7 C405.4 565.6 404.5 562.2 405.4 560.5Z" fill="#fdeee1" stroke="#2e2a26" stroke-width="1.34" stroke-linecap="round" stroke-linejoin="round" opacity="0.85"/><path d="M449.3 560.5 C450.8 559.3 455.3 557.1 457.5 557.5 C459.7 557.8 462.1 560.4 462.6 562.6 C463.1 564.8 461.9 568.7 460.5 570.7 C459.2 572.8 456.1 574.8 454.4 574.8 C452.7 574.8 450.5 572.1 450.3 570.7 C450.1 569.4 453.7 567.7 453.4 566.7 C453.0 565.6 449.0 565.6 448.3 564.6 C447.6 563.6 447.8 561.7 449.3 560.5Z" fill="#fdeee1" stroke="#2e2a26" stroke-width="1.34" stroke-linecap="round" stroke-linejoin="round" opacity="0.85"/><path d="M372.7 581.0 C370.6 579.8 364.5 574.7 360.4 573.8 C356.3 573.0 348.2 574.7 348.2 575.9 C348.2 577.0 356.5 579.8 360.4 581.0 C364.3 582.2 369.8 582.7 371.7 583.0" fill="none" stroke="#2e2a26" stroke-width="1.22" stroke-linecap="round" stroke-linejoin="round" opacity="0.8"/><path d="M371.7 584.0 C369.8 584.2 363.5 584.0 360.4 585.0 C357.4 586.1 352.6 589.5 353.3 590.2 C354.0 590.8 361.3 589.9 364.5 589.1 C367.7 588.3 371.3 586.1 372.7 585.5" fill="none" stroke="#2e2a26" stroke-width="1.22" stroke-linecap="round" stroke-linejoin="round" opacity="0.8"/><path d="M497.3 581.0 C499.0 579.3 504.5 572.8 507.5 570.7 C510.5 568.7 514.8 567.7 515.3 568.7 C515.8 569.7 513.4 574.5 510.6 576.9 C507.8 579.3 500.4 582.0 498.3 583.0" fill="none" stroke="#2e2a26" stroke-width="1.22" stroke-linecap="round" stroke-linejoin="round" opacity="0.8"/><path d="M498.3 584.0 C500.2 583.5 506.7 581.0 509.6 581.0 C512.5 581.0 516.0 582.8 515.7 584.0 C515.3 585.2 510.3 587.8 507.5 588.1 C504.7 588.5 500.4 586.4 498.9 586.1" fill="none" stroke="#2e2a26" stroke-width="1.22" stroke-linecap="round" stroke-linejoin="round" opacity="0.8"/><clipPath id="ham0"><path d="M370.6 595.3 C374.4 593.7 379.8 592.9 384.9 594.2 C390.1 595.6 397.0 599.2 401.3 603.4 C405.5 607.7 408.8 614.3 410.5 619.8 C412.2 625.2 413.0 631.7 411.5 636.1 C410.0 640.5 406.4 644.6 401.3 646.3 C396.2 648.0 387.0 648.0 380.9 646.3 C374.7 644.6 368.1 640.5 364.5 636.1 C360.9 631.7 359.7 625.2 359.4 619.8 C359.1 614.3 360.6 607.5 362.5 603.4 C364.3 599.3 366.9 596.8 370.6 595.3Z"/></clipPath><path d="M370.6 595.3 C374.4 593.7 379.8 592.9 384.9 594.2 C390.1 595.6 397.0 599.2 401.3 603.4 C405.5 607.7 408.8 614.3 410.5 619.8 C412.2 625.2 413.0 631.7 411.5 636.1 C410.0 640.5 406.4 644.6 401.3 646.3 C396.2 648.0 387.0 648.0 380.9 646.3 C374.7 644.6 368.1 640.5 364.5 636.1 C360.9 631.7 359.7 625.2 359.4 619.8 C359.1 614.3 360.6 607.5 362.5 603.4 C364.3 599.3 366.9 596.8 370.6 595.3Z" fill="#fdeee1" opacity="1"/><path d="M329.4 594.2 L347.4 646.3M335.4 594.2 L353.4 646.3M341.4 594.2 L359.4 646.3M347.4 594.2 L365.4 646.3M353.4 594.2 L371.4 646.3M359.4 594.2 L377.4 646.3M365.4 594.2 L383.4 646.3M371.4 594.2 L389.4 646.3M377.4 594.2 L395.4 646.3M383.4 594.2 L401.4 646.3M389.4 594.2 L407.4 646.3M395.4 594.2 L413.4 646.3M401.4 594.2 L419.4 646.3M407.4 594.2 L425.4 646.3M413.4 594.2 L431.4 646.3M419.4 594.2 L437.4 646.3M425.4 594.2 L443.4 646.3M431.4 594.2 L449.4 646.3M437.4 594.2 L455.4 646.3M359.4 574.2 L411.5 560.2M359.4 580.6 L411.5 566.6M359.4 587.0 L411.5 573.0M359.4 593.4 L411.5 579.4M359.4 599.8 L411.5 585.8M359.4 606.2 L411.5 592.2M359.4 612.6 L411.5 598.6M359.4 619.0 L411.5 605.0M359.4 625.4 L411.5 611.4M359.4 631.8 L411.5 617.8M359.4 638.2 L411.5 624.2M359.4 644.6 L411.5 630.6M359.4 651.0 L411.5 637.0M359.4 657.4 L411.5 643.4M359.4 663.8 L411.5 649.8" stroke="#2e2a26" stroke-width="0.8" opacity="0.6" clip-path="url(#ham0)" fill="none"/><path d="M370.6 595.3 C374.4 593.7 379.8 592.9 384.9 594.2 C390.1 595.6 397.0 599.2 401.3 603.4 C405.5 607.7 408.8 614.3 410.5 619.8 C412.2 625.2 413.0 631.7 411.5 636.1 C410.0 640.5 406.4 644.6 401.3 646.3 C396.2 648.0 387.0 648.0 380.9 646.3 C374.7 644.6 368.1 640.5 364.5 636.1 C360.9 631.7 359.7 625.2 359.4 619.8 C359.1 614.3 360.6 607.5 362.5 603.4 C364.3 599.3 366.9 596.8 370.6 595.3Z" fill="none" stroke="#2e2a26" stroke-width="1.59" stroke-linecap="round" stroke-linejoin="round" opacity="0.9"/><clipPath id="ham1"><path d="M495.3 591.2 C499.7 591.9 505.9 593.6 509.6 597.3 C513.2 601.0 516.6 607.9 517.3 613.6 C518.0 619.4 516.6 626.9 513.6 632.0 C510.7 637.1 505.1 641.6 499.3 644.3 C493.6 647.0 484.7 648.7 478.9 648.4 C473.1 648.0 467.7 646.3 464.6 642.2 C461.6 638.2 459.5 630.3 460.5 623.9 C461.6 617.4 467.0 608.5 470.7 603.4 C474.5 598.3 478.9 595.3 483.0 593.2 C487.1 591.2 490.8 590.5 495.3 591.2Z"/></clipPath><path d="M495.3 591.2 C499.7 591.9 505.9 593.6 509.6 597.3 C513.2 601.0 516.6 607.9 517.3 613.6 C518.0 619.4 516.6 626.9 513.6 632.0 C510.7 637.1 505.1 641.6 499.3 644.3 C493.6 647.0 484.7 648.7 478.9 648.4 C473.1 648.0 467.7 646.3 464.6 642.2 C461.6 638.2 459.5 630.3 460.5 623.9 C461.6 617.4 467.0 608.5 470.7 603.4 C474.5 598.3 478.9 595.3 483.0 593.2 C487.1 591.2 490.8 590.5 495.3 591.2Z" fill="#fdeee1" opacity="1"/><path d="M430.5 591.2 L408.5 648.4M436.5 591.2 L414.5 648.4M442.5 591.2 L420.5 648.4M448.5 591.2 L426.5 648.4M454.5 591.2 L432.5 648.4M460.5 591.2 L438.5 648.4M466.5 591.2 L444.5 648.4M472.5 591.2 L450.5 648.4M478.5 591.2 L456.5 648.4M484.5 591.2 L462.5 648.4M490.5 591.2 L468.5 648.4M496.5 591.2 L474.5 648.4M502.5 591.2 L480.5 648.4M508.5 591.2 L486.5 648.4M514.5 591.2 L492.5 648.4M520.5 591.2 L498.5 648.4M526.5 591.2 L504.5 648.4M532.5 591.2 L510.5 648.4M538.5 591.2 L516.5 648.4M544.5 591.2 L522.5 648.4M460.5 571.2 L517.3 589.2M460.5 577.6 L517.3 595.6M460.5 584.0 L517.3 602.0M460.5 590.4 L517.3 608.4M460.5 596.8 L517.3 614.8M460.5 603.2 L517.3 621.2M460.5 609.6 L517.3 627.6M460.5 616.0 L517.3 634.0M460.5 622.4 L517.3 640.4M460.5 628.8 L517.3 646.8M460.5 635.2 L517.3 653.2M460.5 641.6 L517.3 659.6M460.5 648.0 L517.3 666.0M460.5 654.4 L517.3 672.4M460.5 660.8 L517.3 678.8M460.5 667.2 L517.3 685.2" stroke="#2e2a26" stroke-width="0.8" opacity="0.6" clip-path="url(#ham1)" fill="none"/><path d="M495.3 591.2 C499.7 591.9 505.9 593.6 509.6 597.3 C513.2 601.0 516.6 607.9 517.3 613.6 C518.0 619.4 516.6 626.9 513.6 632.0 C510.7 637.1 505.1 641.6 499.3 644.3 C493.6 647.0 484.7 648.7 478.9 648.4 C473.1 648.0 467.7 646.3 464.6 642.2 C461.6 638.2 459.5 630.3 460.5 623.9 C461.6 617.4 467.0 608.5 470.7 603.4 C474.5 598.3 478.9 595.3 483.0 593.2 C487.1 591.2 490.8 590.5 495.3 591.2Z" fill="none" stroke="#2e2a26" stroke-width="1.59" stroke-linecap="round" stroke-linejoin="round" opacity="0.9"/><path d="M411.5 641.2 C412.5 638.8 418.7 638.7 420.7 639.2 C422.7 639.7 424.1 643.1 423.8 644.3 C423.4 645.5 419.3 645.0 418.7 646.3 C418.0 647.7 420.4 651.3 419.7 652.5 C419.0 653.7 415.9 655.4 414.6 653.5 C413.2 651.6 410.5 643.6 411.5 641.2Z" fill="#fdeee1" stroke="#2e2a26" stroke-width="1.34" stroke-linecap="round" stroke-linejoin="round" opacity="0.85"/><path d="M445.2 641.2 C446.1 638.8 452.5 638.5 454.4 639.2 C456.3 639.9 457.0 644.1 456.4 645.3 C455.9 646.5 451.7 645.1 451.3 646.3 C451.0 647.5 454.7 651.3 454.4 652.5 C454.1 653.7 450.8 655.4 449.3 653.5 C447.8 651.6 444.4 643.6 445.2 641.2Z" fill="#fdeee1" stroke="#2e2a26" stroke-width="1.34" stroke-linecap="round" stroke-linejoin="round" opacity="0.85"/><path d="M502.4 554.4 C503.3 552.9 505.1 547.1 507.5 545.2 C509.9 543.3 514.5 542.8 516.7 543.2 C518.9 543.5 520.6 546.1 520.8 547.3 C521.0 548.4 518.6 550.3 517.7 550.3 C516.9 550.3 516.0 547.8 515.7 547.3" fill="none" stroke="#2e2a26" stroke-width="1.22" stroke-linecap="round" stroke-linejoin="round" opacity="0.8"/><path d="M516.7 543.2 C518.9 542.0 525.4 536.9 530.0 536.0 C534.6 535.1 540.7 536.8 544.3 537.7 C547.9 538.5 550.2 540.5 551.4 541.1" fill="none" stroke="#2e2a26" stroke-width="1.22" stroke-linecap="round" stroke-linejoin="round" opacity="0.8"/><path d="M516.3 538.4 C518.7 538.0 526.4 536.0 530.9 535.9 C535.4 535.8 539.9 537.0 543.4 537.8 C546.9 538.5 550.4 540.0 551.8 540.5" fill="none" stroke="#2e2a26" stroke-width="1.22" stroke-linecap="round" stroke-linejoin="round" opacity="0.8"/><path d="M516.3 548.9 C516.8 548.2 519.2 545.7 519.4 544.7 C519.6 543.6 517.7 542.9 517.3 542.6" fill="none" stroke="#2e2a26" stroke-width="1.1" stroke-linecap="round" stroke-linejoin="round" opacity="0.7"/><path d="M551.8 540.5 C550.7 543.8 548.3 554.2 545.5 560.3 C542.7 566.4 538.9 572.2 535.1 577.1 C531.2 581.9 526.7 586.1 522.5 589.6 C518.4 593.1 512.1 596.5 510.0 597.9" fill="none" stroke="#2e2a26" stroke-width="1.22" stroke-linecap="round" stroke-linejoin="round" opacity="0.75"/><path d="M510.0 568.7 C510.7 569.2 514.0 570.8 514.2 571.8 C514.4 572.9 511.6 574.4 511.0 575.0" fill="none" stroke="#2e2a26" stroke-width="1.1" stroke-linecap="round" stroke-linejoin="round" opacity="0.6"/><path d="M510.0 581.2 C510.9 581.6 515.0 582.4 515.2 583.3 C515.4 584.2 511.7 585.9 511.0 586.5" fill="none" stroke="#2e2a26" stroke-width="1.1" stroke-linecap="round" stroke-linejoin="round" opacity="0.6"/><path d="M510.0 602.1 C511.0 604.6 515.6 611.9 516.3 616.7 C517.0 621.6 514.5 628.9 514.2 631.4" fill="none" stroke="#2e2a26" stroke-width="1.46" stroke-linecap="round" stroke-linejoin="round" opacity="0.7"/><path d="M627.0 484.5 L695.9 484.7" fill="none" stroke="#6a645e" stroke-width="1.22" stroke-linecap="round" stroke-linejoin="round" opacity="0.6"/><path d="M699.1 526.9 L699.1 632.4" fill="none" stroke="#6a645e" stroke-width="1.22" stroke-linecap="round" stroke-linejoin="round" opacity="0.6"/><path d="M578.1 487.2 L578.9 627.2" fill="none" stroke="#6a645e" stroke-width="1.34" stroke-linecap="round" stroke-linejoin="round" opacity="0.65"/><path d="M582.1 522.7 L583.5 623.0" fill="none" stroke="#6a645e" stroke-width="0.98" stroke-linecap="round" stroke-linejoin="round" opacity="0.45"/><path d="M578.9 488.3 L570.6 501.8 L589.4 503.9 L557.0 518.6 L578.9 522.7 L560.1 545.7 L580.0 537.4 L583.1 557.2 L563.3 568.7 L582.1 570.8 L562.2 588.5 L583.1 585.4 L577.9 602.1 L553.9 596.9 L562.2 612.6 L542.4 603.2 L548.6 623.0 L529.8 616.7 L535.1 633.5 L522.5 629.3 L524.6 638.7" fill="none" stroke="#2e2a26" stroke-width="1.59" stroke-linecap="round" stroke-linejoin="round" opacity="0.9"/><path d="M577.9 487.2 L599.8 491.0" fill="none" stroke="#2e2a26" stroke-width="1.46" stroke-linecap="round" stroke-linejoin="round" opacity="0.85"/><path d="M535.1 632.4 C544.8 632.2 573.4 631.3 593.6 631.4 C613.8 631.5 638.8 632.7 656.2 633.0 C673.6 633.4 691.0 633.4 698.0 633.5" fill="none" stroke="#2e2a26" stroke-width="1.71" stroke-linecap="round" stroke-linejoin="round" opacity="0.9"/><path d="M522.5 640.8 C525.7 641.5 533.7 644.5 541.3 644.9 C549.0 645.4 564.0 643.7 568.5 643.5" fill="none" stroke="#2e2a26" stroke-width="1.46" stroke-linecap="round" stroke-linejoin="round" opacity="0.85"/><path d="M577.9 608.4 C575.3 610.1 569.0 614.8 562.2 618.8 C555.4 622.8 541.3 630.1 537.2 632.4" fill="none" stroke="#2e2a26" stroke-width="1.22" stroke-linecap="round" stroke-linejoin="round" opacity="0.7"/><path d="M578.9 514.4 L599.8 491.4 L635.3 487.2 L689.7 496.6 L699.1 526.9 L693.8 534.2" fill="none" stroke="#2e2a26" stroke-width="1.71" stroke-linecap="round" stroke-linejoin="round" opacity="0.9"/><path d="M596.7 497.7 C595.1 501.2 589.7 510.9 587.3 518.6 C584.9 526.2 582.4 533.2 582.1 543.6 C581.7 554.1 585.7 570.4 585.2 581.2 C584.7 592.0 580.0 603.9 578.9 608.4" fill="none" stroke="#2e2a26" stroke-width="1.46" stroke-linecap="round" stroke-linejoin="round" opacity="0.85"/><path d="M635.3 487.2 L689.7 496.6 L699.1 526.9" fill="none" stroke="#2e2a26" stroke-width="2.44" stroke-linecap="round" stroke-linejoin="round" opacity="0.9"/><path d="M689.2 497.3 L684.4 515.4" fill="none" stroke="#2e2a26" stroke-width="1.59" stroke-linecap="round" stroke-linejoin="round" opacity="0.8"/><path d="M699.1 526.9 L691.7 535.3 L689.7 552.0" fill="none" stroke="#2e2a26" stroke-width="1.22" stroke-linecap="round" stroke-linejoin="round" opacity="0.7"/><path d="M645.8 542.6 C647.2 545.2 652.4 552.5 654.1 558.3 C655.9 564.0 655.9 573.9 656.2 577.1" fill="none" stroke="#2e2a26" stroke-width="1.22" stroke-linecap="round" stroke-linejoin="round" opacity="0.65"/><path d="M652.1 552.0 L660.4 568.7 L656.2 555.1 L666.7 571.8 L662.5 558.3 L672.9 572.9 L669.8 562.4 L677.1 573.9" fill="none" stroke="#2e2a26" stroke-width="1.1" stroke-linecap="round" stroke-linejoin="round" opacity="0.7"/><path d="M597.7 552.0 C599.5 554.8 602.6 564.2 608.2 568.7 C613.8 573.2 627.3 577.4 631.2 579.1" fill="none" stroke="#5a544e" stroke-width="1.1" stroke-linecap="round" stroke-linejoin="round" opacity="0.6"/><path d="M668.8 585.4 C671.2 584.7 678.5 584.0 683.4 581.2 C688.3 578.4 695.6 570.8 698.0 568.7" fill="none" stroke="#5a544e" stroke-width="1.1" stroke-linecap="round" stroke-linejoin="round" opacity="0.6"/><path d="M596.7 514.4 L601.9 526.9 L608.2 517.5 L614.4 533.2 L620.7 518.6 L628.0 535.3 L635.3 519.6 L643.7 536.3 L650.0 521.7 L656.2 534.2 L662.5 514.4 L670.9 526.9 L677.1 510.2 L683.4 515.4" fill="none" stroke="#2e2a26" stroke-width="1.59" stroke-linecap="round" stroke-linejoin="round" opacity="0.9"/><path d="M596.7 514.4 C597.6 517.5 598.3 529.4 601.9 533.2 C605.6 537.0 611.7 536.5 618.6 537.4 C625.6 538.2 636.0 539.1 643.7 538.4 C651.4 537.7 658.0 537.0 664.6 533.2 C671.2 529.4 680.3 518.4 683.4 515.4" fill="none" stroke="#2e2a26" stroke-width="1.34" stroke-linecap="round" stroke-linejoin="round" opacity="0.8"/><ellipse cx="642.0" cy="511.2" rx="7.0" ry="4.6" fill="#3a3430" opacity="0.9"/><ellipse cx="628.0" cy="502.9" rx="6.5" ry="7.5" fill="#fdeee1" stroke="#2e2a26" stroke-width="1.1" opacity="0.85"/><path d="M623.9 497.7 C624.9 497.1 628.2 494.5 630.1 494.5 C632.0 494.5 634.5 497.1 635.3 497.7" fill="none" stroke="#2e2a26" stroke-width="1.95" stroke-linecap="round" stroke-linejoin="round" opacity="0.8"/><path d="M628.0 484.1 C629.2 483.4 633.3 479.7 635.3 479.9 C637.4 480.1 640.0 483.4 640.6 485.1 C641.1 486.9 638.8 489.5 638.5 490.4" fill="none" stroke="#2e2a26" stroke-width="1.83" stroke-linecap="round" stroke-linejoin="round" opacity="0.8"/><path d="M664.6 502.9 C665.1 502.2 666.7 498.7 667.7 498.7 C668.8 498.7 670.3 502.2 670.9 502.9" fill="none" stroke="#6a645e" stroke-width="1.22" stroke-linecap="round" stroke-linejoin="round" opacity="0.6"/><path d="M677.1 499.8 L682.3 502.3 L687.6 497.7 L686.5 505.0 L690.1 510.2 L684.4 509.8 L681.3 515.4 L679.6 508.1 L675.0 507.1Z" fill="#221e1c" opacity="0.9"/><path d="M601.9 501.8 q2 -2 4 0" fill="none" stroke="#6a645e" stroke-width="1.1" stroke-linecap="round" stroke-linejoin="round" opacity="0.6"/><path d="M608.2 495.6 q2 -2 4 0" fill="none" stroke="#6a645e" stroke-width="1.1" stroke-linecap="round" stroke-linejoin="round" opacity="0.6"/><path d="M611.3 506.0 q2 -2 4 0" fill="none" stroke="#6a645e" stroke-width="1.1" stroke-linecap="round" stroke-linejoin="round" opacity="0.6"/><path d="M605.0 510.2 q2 -2 4 0" fill="none" stroke="#6a645e" stroke-width="1.1" stroke-linecap="round" stroke-linejoin="round" opacity="0.6"/><path d="M589.4 526.9 q2 -2 4 0" fill="none" stroke="#6a645e" stroke-width="1.1" stroke-linecap="round" stroke-linejoin="round" opacity="0.6"/><path d="M590.4 543.6 q2 -2 4 0" fill="none" stroke="#6a645e" stroke-width="1.1" stroke-linecap="round" stroke-linejoin="round" opacity="0.6"/><path d="M593.6 588.5 q2 -2 4 0" fill="none" stroke="#6a645e" stroke-width="1.1" stroke-linecap="round" stroke-linejoin="round" opacity="0.6"/><path d="M610.3 589.6 q2 -2 4 0" fill="none" stroke="#6a645e" stroke-width="1.1" stroke-linecap="round" stroke-linejoin="round" opacity="0.6"/><path d="M601.9 613.6 q2 -2 4 0" fill="none" stroke="#6a645e" stroke-width="1.1" stroke-linecap="round" stroke-linejoin="round" opacity="0.6"/><path d="M599.8 491.0 L592.5 466.3 L601.9 483.5 L606.5 452.8 L613.4 479.9 L619.7 463.6 L620.7 486.2" fill="none" stroke="#2e2a26" stroke-width="1.46" stroke-linecap="round" stroke-linejoin="round" opacity="0.9"/><path d="M599.8 491.0 C601.6 490.6 606.8 489.7 610.3 488.9 C613.8 488.1 619.0 486.6 620.7 486.2" fill="none" stroke="#2e2a26" stroke-width="1.22" stroke-linecap="round" stroke-linejoin="round" opacity="0.8"/><circle cx="590.4" cy="458.0" r="4.2" fill="#fdeee1" stroke="#2e2a26" stroke-width="1" opacity="0.85"/><circle cx="603.0" cy="446.5" r="4.6" fill="#fdeee1" stroke="#2e2a26" stroke-width="1" opacity="0.85"/><circle cx="615.5" cy="456.9" r="3.4" fill="#fdeee1" stroke="#2e2a26" stroke-width="1" opacity="0.85"/><path d="M605.0 543.6 L631.2 557.2 L645.8 542.6 L665.6 560.3 L655.2 577.1 L632.2 579.1" fill="none" stroke="#2e2a26" stroke-width="1.34" stroke-linecap="round" stroke-linejoin="round" opacity="0.8"/><clipPath id="bibc"><path d="M646.8 543.6 L654.1 552.0 L677.1 568.7 L675.0 579.1 L656.2 579.1 L652.1 568.7Z"/></clipPath><g clip-path="url(#bibc)"><path d="M638.0 540.0 L645.0 582.0M639.9 540.0 L646.9 582.0M641.8 540.0 L648.8 582.0M643.7 540.0 L650.7 582.0M645.6 540.0 L652.6 582.0M647.5 540.0 L654.5 582.0M649.4 540.0 L656.4 582.0M651.3 540.0 L658.3 582.0M653.2 540.0 L660.2 582.0M655.1 540.0 L662.1 582.0M657.0 540.0 L664.0 582.0M658.9 540.0 L665.9 582.0M660.8 540.0 L667.8 582.0M662.7 540.0 L669.7 582.0M664.6 540.0 L671.6 582.0M666.5 540.0 L673.5 582.0M668.4 540.0 L675.4 582.0M670.3 540.0 L677.3 582.0M672.2 540.0 L679.2 582.0" stroke="#2e2a26" stroke-width="0.9" opacity="0.7" fill="none"/></g><clipPath id="bibd"><path d="M686.5 548.9 L693.8 568.7 L680.3 568.7Z"/></clipPath><g clip-path="url(#bibd)"><path d="M679.0 545.0 L676.0 572.0M680.9 545.0 L677.9 572.0M682.8 545.0 L679.8 572.0M684.7 545.0 L681.7 572.0M686.6 545.0 L683.6 572.0M688.5 545.0 L685.5 572.0M690.4 545.0 L687.4 572.0M692.3 545.0 L689.3 572.0M694.2 545.0 L691.2 572.0M696.1 545.0 L693.1 572.0M698.0 545.0 L695.0 572.0M699.9 545.0 L696.9 572.0" stroke="#2e2a26" stroke-width="0.9" opacity="0.65" fill="none"/></g><path d="M689.7 552.0 L699.1 579.1 L706.4 600.0" fill="none" stroke="#2e2a26" stroke-width="1.71" stroke-linecap="round" stroke-linejoin="round" opacity="0.85"/><path d="M683.4 542.0 C685.8 540.5 693.3 535.4 698.0 533.2 C702.7 531.0 709.3 529.4 711.6 528.6" fill="none" stroke="#2e2a26" stroke-width="1.34" stroke-linecap="round" stroke-linejoin="round" opacity="0.85"/><path d="M693.8 557.2 C695.6 556.7 701.3 555.8 704.3 554.1 C707.2 552.3 710.4 548.0 711.6 546.8" fill="none" stroke="#2e2a26" stroke-width="1.34" stroke-linecap="round" stroke-linejoin="round" opacity="0.8"/><path d="M711.6 528.6 L715.8 543.6 L717.9 531.1 L719.9 544.7 L721.4 534.2 L724.1 542.6" fill="none" stroke="#2e2a26" stroke-width="1.46" stroke-linecap="round" stroke-linejoin="round" opacity="0.85"/><path d="M593.6 570.8 C596.3 572.2 603.3 577.7 610.3 579.1 C617.2 580.5 627.7 580.2 635.3 579.1 C643.0 578.1 651.2 572.5 656.2 572.9 C661.3 573.2 664.2 577.7 665.6 581.2 C667.0 584.7 664.8 591.7 664.6 593.8" fill="none" stroke="#5a544e" stroke-width="1.22" stroke-linecap="round" stroke-linejoin="round" opacity="0.7"/><path d="M589.4 593.8 C591.8 595.2 596.3 600.2 604.0 602.1 C611.7 604.0 626.6 605.6 635.3 605.3 C644.0 604.9 650.7 603.2 656.2 600.0 C661.8 596.9 666.7 588.7 668.8 586.5" fill="none" stroke="#2e2a26" stroke-width="1.34" stroke-linecap="round" stroke-linejoin="round" opacity="0.8"/><path d="M593.6 568.7 C596.0 567.3 604.0 560.3 608.2 560.3 C612.4 560.3 616.9 567.3 618.6 568.7" fill="none" stroke="#6a645e" stroke-width="1.1" stroke-linecap="round" stroke-linejoin="round" opacity="0.6"/><path d="M616.5 627.2 C617.6 624.8 619.0 616.4 622.8 612.6 C626.6 608.7 633.3 606.3 639.5 604.2 C645.8 602.1 654.5 600.4 660.4 600.0 C666.3 599.7 672.1 599.3 675.0 602.1 C678.0 604.9 679.2 612.2 678.2 616.7 C677.1 621.3 672.8 626.3 668.8 629.3 C664.8 632.2 656.6 633.6 654.1 634.5" fill="none" stroke="#2e2a26" stroke-width="1.46" stroke-linecap="round" stroke-linejoin="round" opacity="0.85"/><path d="M654.1 634.5 L657.3 651.2 L661.5 638.7 L665.6 652.3 L668.8 637.6 L677.1 641.8" fill="none" stroke="#2e2a26" stroke-width="1.46" stroke-linecap="round" stroke-linejoin="round" opacity="0.85"/><path d="M675.0 602.1 C677.1 602.5 683.0 604.6 687.6 604.2 C692.1 603.9 699.8 600.7 702.2 600.0" fill="none" stroke="#6a645e" stroke-width="1.1" stroke-linecap="round" stroke-linejoin="round" opacity="0.6"/><path d="M703.2 590.6 C705.0 590.1 710.9 586.6 713.7 587.5 C716.5 588.4 719.4 591.7 719.9 595.9 C720.5 600.0 718.9 607.2 716.8 612.6 C714.7 618.0 709.0 625.6 707.4 628.2" fill="none" stroke="#2e2a26" stroke-width="1.46" stroke-linecap="round" stroke-linejoin="round" opacity="0.85"/><path d="M693.8 632.4 L699.1 640.8 L703.2 633.5 L708.5 641.8 L710.5 631.4 L723.1 638.7" fill="none" stroke="#2e2a26" stroke-width="1.46" stroke-linecap="round" stroke-linejoin="round" opacity="0.85"/><rect x="711.6" y="592.7" width="5" height="5" fill="none" stroke="#6a645e" stroke-width="0.8" opacity="0.6"/></g>
<rect x="22.0" y="233.0" width="1086.0" height="12.5" fill="#49494b"/><rect x="22.0" y="245.0" width="1086.0" height="0.8" fill="#303030"/><rect x="22.0" y="245.5" width="11.0" height="626.0" fill="#49494b"/><rect x="32.6" y="245.5" width="0.8" height="626.0" fill="#303030"/><rect x="47.7" y="236.0" width="0.7" height="9.0" fill="#6a6a6a"/><rect x="62.8" y="242.5" width="0.6" height="2.5" fill="#6a6a6a"/><text x="49.5" y="243.6" font-size="5.2" fill="#a0a0a0">2</text><rect x="77.8" y="236.0" width="0.7" height="9.0" fill="#6a6a6a"/><rect x="92.9" y="242.5" width="0.6" height="2.5" fill="#6a6a6a"/><text x="79.65" y="243.6" font-size="5.2" fill="#a0a0a0">1</text><rect x="108.0" y="236.0" width="0.7" height="9.0" fill="#6a6a6a"/><rect x="123.1" y="242.5" width="0.6" height="2.5" fill="#6a6a6a"/><text x="109.8" y="243.6" font-size="5.2" fill="#a0a0a0">0</text><rect x="138.2" y="236.0" width="0.7" height="9.0" fill="#6a6a6a"/><rect x="153.2" y="242.5" width="0.6" height="2.5" fill="#6a6a6a"/><text x="139.95" y="243.6" font-size="5.2" fill="#a0a0a0">1</text><rect x="168.3" y="236.0" width="0.7" height="9.0" fill="#6a6a6a"/><rect x="183.4" y="242.5" width="0.6" height="2.5" fill="#6a6a6a"/><text x="170.1" y="243.6" font-size="5.2" fill="#a0a0a0">2</text><rect x="198.4" y="236.0" width="0.7" height="9.0" fill="#6a6a6a"/><rect x="213.5" y="242.5" width="0.6" height="2.5" fill="#6a6a6a"/><text x="200.25" y="243.6" font-size="5.2" fill="#a0a0a0">3</text><rect x="228.6" y="236.0" width="0.7" height="9.0" fill="#6a6a6a"/><rect x="243.7" y="242.5" width="0.6" height="2.5" fill="#6a6a6a"/><text x="230.4" y="243.6" font-size="5.2" fill="#a0a0a0">4</text><rect x="258.8" y="236.0" width="0.7" height="9.0" fill="#6a6a6a"/><rect x="273.8" y="242.5" width="0.6" height="2.5" fill="#6a6a6a"/><text x="260.55" y="243.6" font-size="5.2" fill="#a0a0a0">5</text><rect x="288.9" y="236.0" width="0.7" height="9.0" fill="#6a6a6a"/><rect x="304.0" y="242.5" width="0.6" height="2.5" fill="#6a6a6a"/><text x="290.7" y="243.6" font-size="5.2" fill="#a0a0a0">6</text><rect x="319.0" y="236.0" width="0.7" height="9.0" fill="#6a6a6a"/><rect x="334.1" y="242.5" width="0.6" height="2.5" fill="#6a6a6a"/><text x="320.85" y="243.6" font-size="5.2" fill="#a0a0a0">7</text><rect x="349.2" y="236.0" width="0.7" height="9.0" fill="#6a6a6a"/><rect x="364.3" y="242.5" width="0.6" height="2.5" fill="#6a6a6a"/><text x="351" y="243.6" font-size="5.2" fill="#a0a0a0">8</text><rect x="379.3" y="236.0" width="0.7" height="9.0" fill="#6a6a6a"/><rect x="394.4" y="242.5" width="0.6" height="2.5" fill="#6a6a6a"/><text x="381.15" y="243.6" font-size="5.2" fill="#a0a0a0">9</text><rect x="409.5" y="236.0" width="0.7" height="9.0" fill="#6a6a6a"/><rect x="424.6" y="242.5" width="0.6" height="2.5" fill="#6a6a6a"/><text x="411.3" y="243.6" font-size="5.2" fill="#a0a0a0">10</text><rect x="439.6" y="236.0" width="0.7" height="9.0" fill="#6a6a6a"/><rect x="454.7" y="242.5" width="0.6" height="2.5" fill="#6a6a6a"/><text x="441.45" y="243.6" font-size="5.2" fill="#a0a0a0">11</text><rect x="469.8" y="236.0" width="0.7" height="9.0" fill="#6a6a6a"/><rect x="484.9" y="242.5" width="0.6" height="2.5" fill="#6a6a6a"/><text x="471.6" y="243.6" font-size="5.2" fill="#a0a0a0">12</text><rect x="499.9" y="236.0" width="0.7" height="9.0" fill="#6a6a6a"/><rect x="515.0" y="242.5" width="0.6" height="2.5" fill="#6a6a6a"/><text x="501.75" y="243.6" font-size="5.2" fill="#a0a0a0">13</text><rect x="530.1" y="236.0" width="0.7" height="9.0" fill="#6a6a6a"/><rect x="545.2" y="242.5" width="0.6" height="2.5" fill="#6a6a6a"/><text x="531.9" y="243.6" font-size="5.2" fill="#a0a0a0">14</text><rect x="560.2" y="236.0" width="0.7" height="9.0" fill="#6a6a6a"/><rect x="575.3" y="242.5" width="0.6" height="2.5" fill="#6a6a6a"/><text x="562.05" y="243.6" font-size="5.2" fill="#a0a0a0">15</text><rect x="590.4" y="236.0" width="0.7" height="9.0" fill="#6a6a6a"/><rect x="605.5" y="242.5" width="0.6" height="2.5" fill="#6a6a6a"/><text x="592.2" y="243.6" font-size="5.2" fill="#a0a0a0">16</text><rect x="620.5" y="236.0" width="0.7" height="9.0" fill="#6a6a6a"/><rect x="635.6" y="242.5" width="0.6" height="2.5" fill="#6a6a6a"/><text x="622.35" y="243.6" font-size="5.2" fill="#a0a0a0">17</text><rect x="650.7" y="236.0" width="0.7" height="9.0" fill="#6a6a6a"/><rect x="665.8" y="242.5" width="0.6" height="2.5" fill="#6a6a6a"/><text x="652.5" y="243.6" font-size="5.2" fill="#a0a0a0">18</text><rect x="680.9" y="236.0" width="0.7" height="9.0" fill="#6a6a6a"/><rect x="695.9" y="242.5" width="0.6" height="2.5" fill="#6a6a6a"/><text x="682.65" y="243.6" font-size="5.2" fill="#a0a0a0">19</text><rect x="711.0" y="236.0" width="0.7" height="9.0" fill="#6a6a6a"/><rect x="726.1" y="242.5" width="0.6" height="2.5" fill="#6a6a6a"/><text x="712.8" y="243.6" font-size="5.2" fill="#a0a0a0">20</text><rect x="741.1" y="236.0" width="0.7" height="9.0" fill="#6a6a6a"/><rect x="756.2" y="242.5" width="0.6" height="2.5" fill="#6a6a6a"/><text x="742.95" y="243.6" font-size="5.2" fill="#a0a0a0">21</text><rect x="771.3" y="236.0" width="0.7" height="9.0" fill="#6a6a6a"/><rect x="786.4" y="242.5" width="0.6" height="2.5" fill="#6a6a6a"/><text x="773.1" y="243.6" font-size="5.2" fill="#a0a0a0">22</text><rect x="801.4" y="236.0" width="0.7" height="9.0" fill="#6a6a6a"/><rect x="816.5" y="242.5" width="0.6" height="2.5" fill="#6a6a6a"/><text x="803.25" y="243.6" font-size="5.2" fill="#a0a0a0">23</text><rect x="831.6" y="236.0" width="0.7" height="9.0" fill="#6a6a6a"/><rect x="846.7" y="242.5" width="0.6" height="2.5" fill="#6a6a6a"/><text x="833.4" y="243.6" font-size="5.2" fill="#a0a0a0">24</text><rect x="861.8" y="236.0" width="0.7" height="9.0" fill="#6a6a6a"/><rect x="876.8" y="242.5" width="0.6" height="2.5" fill="#6a6a6a"/><text x="863.55" y="243.6" font-size="5.2" fill="#a0a0a0">25</text><rect x="891.9" y="236.0" width="0.7" height="9.0" fill="#6a6a6a"/><rect x="907.0" y="242.5" width="0.6" height="2.5" fill="#6a6a6a"/><text x="893.7" y="243.6" font-size="5.2" fill="#a0a0a0">26</text><rect x="922.0" y="236.0" width="0.7" height="9.0" fill="#6a6a6a"/><rect x="937.1" y="242.5" width="0.6" height="2.5" fill="#6a6a6a"/><text x="923.85" y="243.6" font-size="5.2" fill="#a0a0a0">27</text><rect x="952.2" y="236.0" width="0.7" height="9.0" fill="#6a6a6a"/><rect x="967.3" y="242.5" width="0.6" height="2.5" fill="#6a6a6a"/><text x="954" y="243.6" font-size="5.2" fill="#a0a0a0">28</text><rect x="982.3" y="236.0" width="0.7" height="9.0" fill="#6a6a6a"/><rect x="997.4" y="242.5" width="0.6" height="2.5" fill="#6a6a6a"/><text x="984.15" y="243.6" font-size="5.2" fill="#a0a0a0">29</text><rect x="1012.5" y="236.0" width="0.7" height="9.0" fill="#6a6a6a"/><rect x="1027.6" y="242.5" width="0.6" height="2.5" fill="#6a6a6a"/><text x="1014.3" y="243.6" font-size="5.2" fill="#a0a0a0">30</text><rect x="1042.7" y="236.0" width="0.7" height="9.0" fill="#6a6a6a"/><rect x="1057.7" y="242.5" width="0.6" height="2.5" fill="#6a6a6a"/><text x="1044.45" y="243.6" font-size="5.2" fill="#a0a0a0">31</text><rect x="1072.8" y="236.0" width="0.7" height="9.0" fill="#6a6a6a"/><rect x="1087.9" y="242.5" width="0.6" height="2.5" fill="#6a6a6a"/><text x="1074.6" y="243.6" font-size="5.2" fill="#a0a0a0">32</text><rect x="1102.9" y="236.0" width="0.7" height="9.0" fill="#6a6a6a"/><text x="1104.75" y="243.6" font-size="5.2" fill="#a0a0a0">33</text><rect x="22.0" y="252.0" width="10.5" height="0.7" fill="#7d7d7d"/><rect x="28.5" y="267.1" width="4.0" height="0.6" fill="#6e6e6e"/><text x="24" y="259" font-size="5" fill="#a4a4a4">0</text><rect x="22.0" y="282.1" width="10.5" height="0.7" fill="#7d7d7d"/><rect x="28.5" y="297.2" width="4.0" height="0.6" fill="#6e6e6e"/><text x="24" y="289.15" font-size="5" fill="#a4a4a4">1</text><rect x="22.0" y="312.3" width="10.5" height="0.7" fill="#7d7d7d"/><rect x="28.5" y="327.4" width="4.0" height="0.6" fill="#6e6e6e"/><text x="24" y="319.3" font-size="5" fill="#a4a4a4">2</text><rect x="22.0" y="342.4" width="10.5" height="0.7" fill="#7d7d7d"/><rect x="28.5" y="357.5" width="4.0" height="0.6" fill="#6e6e6e"/><text x="24" y="349.45" font-size="5" fill="#a4a4a4">3</text><rect x="22.0" y="372.6" width="10.5" height="0.7" fill="#7d7d7d"/><rect x="28.5" y="387.7" width="4.0" height="0.6" fill="#6e6e6e"/><text x="24" y="379.6" font-size="5" fill="#a4a4a4">4</text><rect x="22.0" y="402.8" width="10.5" height="0.7" fill="#7d7d7d"/><rect x="28.5" y="417.8" width="4.0" height="0.6" fill="#6e6e6e"/><text x="24" y="409.75" font-size="5" fill="#a4a4a4">5</text><rect x="22.0" y="432.9" width="10.5" height="0.7" fill="#7d7d7d"/><rect x="28.5" y="448.0" width="4.0" height="0.6" fill="#6e6e6e"/><text x="24" y="439.9" font-size="5" fill="#a4a4a4">6</text><rect x="22.0" y="463.0" width="10.5" height="0.7" fill="#7d7d7d"/><rect x="28.5" y="478.1" width="4.0" height="0.6" fill="#6e6e6e"/><text x="24" y="470.05" font-size="5" fill="#a4a4a4">7</text><rect x="22.0" y="493.2" width="10.5" height="0.7" fill="#7d7d7d"/><rect x="28.5" y="508.3" width="4.0" height="0.6" fill="#6e6e6e"/><text x="24" y="500.2" font-size="5" fill="#a4a4a4">8</text><rect x="22.0" y="523.3" width="10.5" height="0.7" fill="#7d7d7d"/><rect x="28.5" y="538.4" width="4.0" height="0.6" fill="#6e6e6e"/><text x="24" y="530.35" font-size="5" fill="#a4a4a4">9</text><rect x="22.0" y="553.5" width="10.5" height="0.7" fill="#7d7d7d"/><rect x="28.5" y="568.6" width="4.0" height="0.6" fill="#6e6e6e"/><text x="24" y="560.5" font-size="5" fill="#a4a4a4">1</text><text x="24" y="565.5" font-size="5" fill="#a4a4a4">0</text><rect x="22.0" y="583.6" width="10.5" height="0.7" fill="#7d7d7d"/><rect x="28.5" y="598.7" width="4.0" height="0.6" fill="#6e6e6e"/><text x="24" y="590.65" font-size="5" fill="#a4a4a4">1</text><text x="24" y="595.65" font-size="5" fill="#a4a4a4">1</text><rect x="22.0" y="613.8" width="10.5" height="0.7" fill="#7d7d7d"/><rect x="28.5" y="628.9" width="4.0" height="0.6" fill="#6e6e6e"/><text x="24" y="620.8" font-size="5" fill="#a4a4a4">1</text><text x="24" y="625.8" font-size="5" fill="#a4a4a4">2</text><rect x="22.0" y="644.0" width="10.5" height="0.7" fill="#7d7d7d"/><rect x="28.5" y="659.0" width="4.0" height="0.6" fill="#6e6e6e"/><text x="24" y="650.95" font-size="5" fill="#a4a4a4">1</text><text x="24" y="655.95" font-size="5" fill="#a4a4a4">3</text><rect x="22.0" y="674.1" width="10.5" height="0.7" fill="#7d7d7d"/><rect x="28.5" y="689.2" width="4.0" height="0.6" fill="#6e6e6e"/><text x="24" y="681.1" font-size="5" fill="#a4a4a4">1</text><text x="24" y="686.1" font-size="5" fill="#a4a4a4">4</text><rect x="22.0" y="704.2" width="10.5" height="0.7" fill="#7d7d7d"/><rect x="28.5" y="719.3" width="4.0" height="0.6" fill="#6e6e6e"/><text x="24" y="711.25" font-size="5" fill="#a4a4a4">1</text><text x="24" y="716.25" font-size="5" fill="#a4a4a4">5</text><rect x="22.0" y="734.4" width="10.5" height="0.7" fill="#7d7d7d"/><rect x="28.5" y="749.5" width="4.0" height="0.6" fill="#6e6e6e"/><text x="24" y="741.4" font-size="5" fill="#a4a4a4">1</text><text x="24" y="746.4" font-size="5" fill="#a4a4a4">6</text><rect x="22.0" y="764.5" width="10.5" height="0.7" fill="#7d7d7d"/><rect x="28.5" y="779.6" width="4.0" height="0.6" fill="#6e6e6e"/><text x="24" y="771.55" font-size="5" fill="#a4a4a4">1</text><text x="24" y="776.55" font-size="5" fill="#a4a4a4">7</text><rect x="22.0" y="794.7" width="10.5" height="0.7" fill="#7d7d7d"/><rect x="28.5" y="809.8" width="4.0" height="0.6" fill="#6e6e6e"/><text x="24" y="801.7" font-size="5" fill="#a4a4a4">1</text><text x="24" y="806.7" font-size="5" fill="#a4a4a4">8</text><rect x="22.0" y="824.9" width="10.5" height="0.7" fill="#7d7d7d"/><rect x="28.5" y="839.9" width="4.0" height="0.6" fill="#6e6e6e"/><text x="24" y="831.85" font-size="5" fill="#a4a4a4">1</text><text x="24" y="836.85" font-size="5" fill="#a4a4a4">9</text><rect x="22.0" y="855.0" width="10.5" height="0.7" fill="#7d7d7d"/><rect x="28.5" y="870.1" width="4.0" height="0.6" fill="#6e6e6e"/><text x="24" y="862" font-size="5" fill="#a4a4a4">2</text><text x="24" y="867" font-size="5" fill="#a4a4a4">0</text><rect x="22.0" y="233.0" width="11.0" height="12.5" fill="#49494b"/>
<rect x="1104.0" y="245.5" width="11.0" height="626.0" fill="#474747"/><rect x="1105.0" y="690.0" width="9.0" height="25.0" fill="#606060"/><rect x="1104.0" y="245.5" width="0.8" height="626.0" fill="#3a3a3a"/><rect x="22.0" y="871.3" width="1093.0" height="10.0" fill="#4b4b4d"/><rect x="22.0" y="871.3" width="1093.0" height="0.8" fill="#3a3a3a"/><rect x="503.0" y="872.8" width="370.0" height="7.5" fill="#656567"/><text x="31" y="878.8" font-size="6.3" fill="#d8d8d8">50%</text><text x="77" y="878.9" font-size="6.3" fill="#c8c8c8">文档:60.7M/262.5M</text><path d="M164.5 874 l2 2 l-2 2" stroke="#bbb" stroke-width="0.8" fill="none"/><rect x="1108.0" y="233.0" width="7.0" height="12.5" fill="#474747"/>
<rect x="36.0" y="247.0" width="163.5" height="216.0" fill="rgba(0,0,0,0.35)"/><rect x="37.0" y="237.5" width="26.0" height="8.5" fill="#454547"/><path d="M44 241 l1.6 1.5 l-1.6 1.5 M47 241 l1.6 1.5 l-1.6 1.5" stroke="#bbb" stroke-width="0.7" fill="none"/><path d="M54.5 241 l3 3 m0 -3 l-3 3" stroke="#bbb" stroke-width="0.7"/><rect x="37.0" y="245.8" width="26.0" height="214.2" fill="#3b3b3b"/><rect x="38.5" y="248.5" width="23.0" height="23.5" fill="#4a4a4a" rx="1"/><g stroke="#eee" stroke-width="1.2" fill="none"><circle cx="50.5" cy="261.5" r="2.2"/><path d="M50.5 255.5 v3 M50.5 264.5 v3 M44.5 261.5 h3 M53.5 261.5 h3 M46.3 257.3 l2 2 M52.7 263.7 l2 2 M54.7 257.3 l-2 2 M48.3 263.7 l-2 2"/></g><rect x="63.0" y="245.8" width="136.2" height="214.2" fill="#535353"/><rect x="63.0" y="245.8" width="136.2" height="19.7" fill="#424242"/><rect x="63.0" y="245.8" width="38.0" height="19.7" fill="#535353"/><text x="69" y="259.5" font-size="7.8" font-weight="bold" fill="#e8e8e8">导航器</text><path d="M172 254.5 l2 2 l-2 2 M175 254.5 l2 2 l-2 2" stroke="#ccc" stroke-width="0.8" fill="none"/><rect x="182.3" y="252.0" width="0.8" height="9.0" fill="#777"/><rect x="187.0" y="254.5" width="7.0" height="0.9" fill="#ccc"/><rect x="187.0" y="256.7" width="7.0" height="0.9" fill="#ccc"/><rect x="187.0" y="258.9" width="7.0" height="0.9" fill="#ccc"/><rect x="105.0" y="268.5" width="49.0" height="168.5" fill="#fbeee2"/><rect x="105.0" y="268.5" width="49.0" height="29.0" fill="#f3ede6"/><rect x="116.5" y="271.5" width="26" height="25" rx="5" fill="#e0a868"/><ellipse cx="129.5" cy="287" rx="6" ry="5.5" fill="#8a5a3c"/><ellipse cx="129.5" cy="276.500" rx="9" ry="3.500" fill="#f0cc98"/><rect x="122" y="292" width="15" height="4.500" fill="#f4ede6"/><circle cx="109" cy="274" r="2.6" fill="#7a8a5a"/><circle cx="112" cy="288" r="2.6" fill="#5a6a9a"/><circle cx="149" cy="275" r="2.6" fill="#7a9a9a"/><circle cx="150" cy="289" r="2.6" fill="#a0a8b8"/><circle cx="108" cy="281" r="2.6" fill="#b8a890"/><circle cx="146" cy="282" r="2.6" fill="#c8b8a8"/><circle cx="115" cy="271" r="2.6" fill="#c04040"/><circle cx="143" cy="271" r="2.6" fill="#5a8a6a"/><rect x="106.0" y="303.0" width="10.0" height="10.0" fill="#a82a22" rx="2"/><ellipse cx="125" cy="308" rx="5" ry="5.5" fill="#b8321f"/><rect x="132.5" y="303.0" width="9.0" height="11.0" fill="#8a6a20" rx="1"/><rect x="134.0" y="304.0" width="6.0" height="4.0" fill="#c09030"/><rect x="109.0" y="317.0" width="20.0" height="0.8" fill="#999"/><rect x="118.0" y="322.0" width="16.0" height="0.8" fill="#999"/><ellipse cx="114.0" cy="335.0" rx="5.0" ry="8.0" fill="#8a8580" opacity="0.5"/><ellipse cx="114.0" cy="359.0" rx="4.5" ry="9.0" fill="#8a8580" opacity="0.42"/><ellipse cx="131.0" cy="335.0" rx="5.0" ry="8.0" fill="#8a8580" opacity="0.5"/><ellipse cx="131.0" cy="359.0" rx="4.5" ry="9.0" fill="#8a8580" opacity="0.42"/><ellipse cx="147.0" cy="335.0" rx="5.0" ry="8.0" fill="#8a8580" opacity="0.5"/><ellipse cx="147.0" cy="359.0" rx="4.5" ry="9.0" fill="#8a8580" opacity="0.42"/><ellipse cx="114.0" cy="332.0" rx="3.0" ry="3.0" fill="#a03030" opacity="0.8"/><ellipse cx="113.0" cy="342.0" rx="6.0" ry="2.5" fill="#5a7a3a" opacity="0.8"/><rect x="105.6" y="374.5" width="47.8" height="45.5" fill="#fcefe4" stroke="#e04a4a" stroke-width="1.2"/><rect x="107.0" y="377.0" width="13.0" height="7.5" fill="#5a4a6a"/><rect x="107.0" y="381.0" width="13.0" height="3.5" fill="#5a7a2a"/><rect x="124.0" y="377.0" width="10.0" height="8.0" fill="#f4ece8"/><ellipse cx="146.0" cy="380.0" rx="5.0" ry="3.5" fill="#3a3048" opacity="0.9"/><ellipse cx="113.0" cy="395.0" rx="5.0" ry="6.5" fill="#8a8580" opacity="0.45"/><ellipse cx="130.0" cy="395.0" rx="5.0" ry="6.5" fill="#8a8580" opacity="0.45"/><ellipse cx="146.0" cy="395.0" rx="5.0" ry="6.5" fill="#8a8580" opacity="0.45"/><rect x="106.5" y="405.5" width="17.0" height="6.5" fill="#4a8a30"/><ellipse cx="111.0" cy="409.0" rx="2.2" ry="2.0" fill="#eee" opacity="1"/><ellipse cx="118.0" cy="409.0" rx="2.6" ry="2.6" fill="#f4f4f4" opacity="1"/><ellipse cx="128.0" cy="408.0" rx="2.0" ry="3.0" fill="#d8a070" opacity="0.8"/><rect x="63.0" y="438.5" width="136.2" height="19.0" fill="#474747"/><rect x="63.0" y="457.5" width="136.2" height="2.5" fill="#5b5b5b"/><text x="66" y="450.3" font-size="6.2" fill="#aaa">50%</text><path d="M103.5 450 l2.3 -2.3 l2.3 2.3 Z" fill="#ccc"/><rect x="120.0" y="446.0" width="46.0" height="1.0" fill="#6f6f6f"/><path d="M134.5 452.5 l4 -6 l4 6 Z" fill="#e8e8e8"/><path d="M171 450 l3 -3 l2 1.3 l1.5 -2.3 l4.5 4 Z" fill="#ccc"/>
<rect x="0.0" y="233.0" width="21.5" height="649.0" fill="#535353"/><rect x="21.5" y="223.0" width="0.9" height="659.0" fill="#3a3a3a"/><rect x="0.5" y="335.0" width="20.0" height="15.5" fill="#2f2f2f" rx="1.5"/><g transform="translate(10.5 243.5) scale(0.88)"><path d="M0 -6 V6 M-6 0 H6 M-2 -4 L0 -6 L2 -4 M-2 4 L0 6 L2 4 M-4 -2 L-6 0 L-4 2 M4 -2 L6 0 L4 2" fill="none" stroke="#e4e4e4" stroke-width="1.3" stroke-linecap="round" stroke-linejoin="round"/></g><path d="M18.5 250.0 l1.6 0 l0 -1.6 Z" fill="#bbb"/><g transform="translate(10.5 260.0) scale(0.88)"><path d="M-5.5 -4.5 H5.5 V4.5 H-5.5 Z" fill="none" stroke="#e4e4e4" stroke-width="1.2" stroke-dasharray="2 1.6" stroke-linecap="round" stroke-linejoin="round"/></g><path d="M18.5 266.5 l1.6 0 l0 -1.6 Z" fill="#bbb"/><g transform="translate(10.5 276.5) scale(0.88)"><path d="M-5 0 Q-5 -4 0 -4 Q5.5 -4 5.5 -0.5 Q5.5 3 0 3 Q-3 3 -3.5 1 M-3.5 1 Q-5 3 -4 5.5" fill="none" stroke="#e4e4e4" stroke-width="1.3" stroke-linecap="round" stroke-linejoin="round"/></g><path d="M18.5 283.0 l1.6 0 l0 -1.6 Z" fill="#bbb"/><g transform="translate(10.5 293.0) scale(0.88)"><path d="M-5 5.5 L2 -1.5 M3 -5.5 V-3 M5.5 -2.5 H3.5 M0.5 -5 L1.8 -3.6 M6 1 L4.5 -0.5" fill="none" stroke="#e4e4e4" stroke-width="1.6" stroke-linecap="round" stroke-linejoin="round"/></g><path d="M18.5 299.5 l1.6 0 l0 -1.6 Z" fill="#bbb"/><g transform="translate(10.5 309.5) scale(0.88)"><path d="M-3 -6 V3 H6 M-6 -3 H3 V6" fill="none" stroke="#e4e4e4" stroke-width="1.5" stroke-linecap="round" stroke-linejoin="round"/></g><path d="M18.5 316.0 l1.6 0 l0 -1.6 Z" fill="#bbb"/><g transform="translate(10.5 326.0) scale(0.88)"><path d="M-5 5.5 L-4 2.5 L1.5 -3 L3.5 -1 L-2 4.5 Z M2 -3.5 L4 -5.5 Q5.5 -6 6 -4.5 L4 -1.5 Z" fill="#e4e4e4" stroke="#e4e4e4" stroke-width="0.6" stroke-linecap="round" stroke-linejoin="round"/></g><path d="M18.5 332.5 l1.6 0 l0 -1.6 Z" fill="#bbb"/><g transform="translate(10.5 342.5) scale(0.88)"><path d="M6 -6 L-0.5 1 L1.2 2.6 Z M-1.5 1.8 Q-4.5 2 -5.5 6 Q-1.5 6.5 0.3 3.5 Z" fill="#fff" stroke="#e4e4e4" stroke-width="0.5" stroke-linecap="round" stroke-linejoin="round"/></g><path d="M18.5 349.0 l1.6 0 l0 -1.6 Z" fill="#bbb"/><g transform="translate(10.5 359.0) scale(0.88)"><path d="M-5.5 3.5 L2 -5 Q4 -6 5.5 -4 Q6 -2.5 5 -1.5 L-2.5 6 Z M-2 -0.5 L1.5 3" fill="none" stroke="#e4e4e4" stroke-width="1.1" stroke-linecap="round" stroke-linejoin="round"/></g><path d="M18.5 365.5 l1.6 0 l0 -1.6 Z" fill="#bbb"/><g transform="translate(10.5 375.5) scale(0.88)"><path d="M6 -6 L0 0.5 L1.5 2 Z M-1 1.5 Q-3.5 2 -4.5 5.5 Q-1 6 0.5 3 Z M-6 -1 a3 3 0 0 1 3 -3 M-6 -3.5 a5 5 0 0 1 4 -2.5" fill="#e4e4e4" stroke="#e4e4e4" stroke-width="0.7" stroke-linecap="round" stroke-linejoin="round"/></g><path d="M18.5 382.0 l1.6 0 l0 -1.6 Z" fill="#bbb"/><g transform="translate(10.5 392.0) scale(0.88)"><path d="M6 -6 L0 0.5 L1.5 2 Z M-1 1.5 Q-3.5 2 -4.5 5.5 Q-1 6 0.5 3 Z M-5 -3 l2.5 2.5" fill="#e4e4e4" stroke="#e4e4e4" stroke-width="0.9" stroke-linecap="round" stroke-linejoin="round"/></g><path d="M18.5 398.5 l1.6 0 l0 -1.6 Z" fill="#bbb"/><g transform="translate(10.5 408.5) scale(0.88)"><path d="M-5.5 5.5 H5.5 V3.5 H-5.5 Z M-4 3 Q-4 0.5 -1.5 0.5 L-2 -3 Q-2 -5.5 0 -5.5 Q2 -5.5 2 -3 L1.5 0.5 Q4 0.5 4 3 Z" fill="#e4e4e4" stroke="#e4e4e4" stroke-width="0.4" stroke-linecap="round" stroke-linejoin="round"/></g><path d="M18.5 415.0 l1.6 0 l0 -1.6 Z" fill="#bbb"/><g transform="translate(10.5 425.0) scale(0.88)"><path d="M6 -6 L0 0.5 L1.5 2 Z M-1 1.5 Q-3.5 2 -4.5 5.5 Q-1 6 0.5 3 Z M-5.5 -5 l3 3 M-2.5 -5 l-3 3" fill="#e4e4e4" stroke="#e4e4e4" stroke-width="0.9" stroke-linecap="round" stroke-linejoin="round"/></g><path d="M18.5 431.5 l1.6 0 l0 -1.6 Z" fill="#bbb"/><g transform="translate(10.5 441.5) scale(0.88)"><path d="M-5.5 2 L0 -4.5 L5 -0.5 L0 5 H-3 Z M-5.5 5.5 H5" fill="#e4e4e4" stroke="#e4e4e4" stroke-width="0.7" stroke-linecap="round" stroke-linejoin="round"/></g><path d="M18.5 448.0 l1.6 0 l0 -1.6 Z" fill="#bbb"/><g transform="translate(10.5 458.0)"><rect x="-5.5" y="-4.5" width="11" height="9" fill="url(#tgrad)" stroke="#ddd" stroke-width="0.8"/></g><path d="M18.5 464.5 l1.6 0 l0 -1.6 Z" fill="#bbb"/><g transform="translate(10.5 474.5) scale(0.88)"><path d="M0 -6 Q4.5 -0.5 4.5 2 A4.5 4.5 0 0 1 -4.5 2 Q-4.5 -0.5 0 -6 Z" fill="#e4e4e4" stroke="#e4e4e4" stroke-width="0.4" stroke-linecap="round" stroke-linejoin="round"/></g><path d="M18.5 481.0 l1.6 0 l0 -1.6 Z" fill="#bbb"/><g transform="translate(10.5 491.0) scale(0.88)"><path d="M-1 -5 Q4 -6 5 -2 Q5 1.5 1 2 L-1.5 2 L-4.5 6 L-3 1 Q-5.5 -3 -1 -5 Z" fill="#e4e4e4" stroke="#e4e4e4" stroke-width="0.4" stroke-linecap="round" stroke-linejoin="round"/></g><path d="M18.5 497.5 l1.6 0 l0 -1.6 Z" fill="#bbb"/><g transform="translate(10.5 507.5) scale(0.88)"><path d="M-5 1 Q-6 -3 -2 -4.5 Q3 -6 5.5 -2.5 Q6.5 2 2.5 4.5 Q-3 6 -5 1 Z M-2 -2 l4 4 M1 -3 l3 3 M-4 0 l3 3" fill="#d8d8d8" stroke="#555" stroke-width="0.7" stroke-linecap="round" stroke-linejoin="round"/></g><path d="M18.5 514.0 l1.6 0 l0 -1.6 Z" fill="#bbb"/><g transform="translate(10.5 524.0)"><path d="M-5.5 -6 H5.5 V-3.5 H4.3 V-4.6 H0.9 V4.8 H2.4 V6 H-2.4 V4.8 H-0.9 V-4.6 H-4.3 V-3.5 H-5.5 Z" fill="#e4e4e4"/></g><path d="M18.5 530.5 l1.6 0 l0 -1.6 Z" fill="#bbb"/><g transform="translate(10.5 540.5) scale(0.88)"><path d="M-5 6 L-3.5 0 L1.5 -5.5 L5.5 -1.5 L0 3.5 Z M-3.5 0 L0 3.5 M-5 6 L-1 1.5" fill="none" stroke="#e4e4e4" stroke-width="1.0" stroke-linecap="round" stroke-linejoin="round"/></g><path d="M18.5 547.0 l1.6 0 l0 -1.6 Z" fill="#bbb"/><g transform="translate(10.5 557.0) scale(0.88)"><path d="M-4.5 -6 V4 L-2 1.8 L0 6 L1.8 5.2 L0 1.2 H3.2 Z" fill="#e4e4e4" stroke="#e4e4e4" stroke-width="0.3" stroke-linecap="round" stroke-linejoin="round"/></g><path d="M18.5 563.5 l1.6 0 l0 -1.6 Z" fill="#bbb"/><g transform="translate(10.5 573.5)"><rect x="-5.5" y="-4.5" width="11" height="9" fill="#8a8a8a" stroke="#ddd" stroke-width="0.9"/></g><path d="M18.5 580.0 l1.6 0 l0 -1.6 Z" fill="#bbb"/><g transform="translate(10.5 590.0) scale(0.88)"><path d="M-5 0 Q-5 -3 -2 -2 V-4.5 Q-1 -5.5 0 -4.5 V-5 Q1 -6 2 -5 V-4 Q3 -5 4 -4 V2 Q4 6 0 6 Q-3 6 -5 0 Z M3 -6 a4 4 0 0 1 3 4" fill="#e4e4e4" stroke="#e4e4e4" stroke-width="0.5" stroke-linecap="round" stroke-linejoin="round"/></g><path d="M18.5 596.5 l1.6 0 l0 -1.6 Z" fill="#bbb"/><g transform="translate(10.5 606.5) scale(0.88)"><path d="M-1.5 -6 A4.3 4.3 0 1 1 -1.6 2.6 A4.3 4.3 0 0 1 -1.5 -6 Z M1.8 1.8 L6 6" fill="none" stroke="#e4e4e4" stroke-width="1.6" stroke-linecap="round" stroke-linejoin="round"/></g><path d="M18.5 613.0 l1.6 0 l0 -1.6 Z" fill="#bbb"/><circle cx="6.5" cy="623" r="1" fill="#ddd"/><circle cx="10.5" cy="623" r="1" fill="#ddd"/><circle cx="14.5" cy="623" r="1" fill="#ddd"/><path d="M18.5 629 l1.6 0 l0 -1.6 Z" fill="#bbb"/><rect x="1.5" y="634.5" width="4.0" height="4.0" fill="#111" stroke="#ddd" stroke-width="0.6"/><rect x="3.8" y="636.8" width="4.0" height="4.0" fill="#eee"/><path d="M12 636 h4 v4 M16 640 l-1.5 -1.5 M16 640 l1.5 -1.5 M12 636 l1.5 -1.3 M12 636 l1.5 1.3" stroke="#ddd" stroke-width="0.8" fill="none"/><rect x="7.0" y="652.0" width="10.5" height="11.5" fill="#ee2a8b" stroke="#888" stroke-width="0.5"/><rect x="1.0" y="645.5" width="10.5" height="11.5" fill="#151515" stroke="#aaa" stroke-width="0.6"/><rect x="4" y="671.5" width="11.5" height="9" fill="none" stroke="#ddd" stroke-width="1"/><circle cx="9.7" cy="676" r="2.2" fill="none" stroke="#bbb" stroke-width="0.7" stroke-dasharray="1 0.8"/><rect x="7" y="686.5" width="9" height="6.5" fill="#535353" stroke="#ddd" stroke-width="1"/><rect x="4" y="689.5" width="9" height="6.5" fill="#535353" stroke="#ddd" stroke-width="1"/><path d="M18.5 698 l1.6 0 l0 -1.6 Z" fill="#bbb"/>
<rect x="0.0" y="176.0" width="1297.0" height="18.0" fill="#535353"/><rect x="3.0" y="179.0" width="10.5" height="10.0" fill="#0a2a3f" rx="1.5" stroke="#2ba8d8" stroke-width="0.8"/><text x="4.6" y="187" font-size="6.5" font-weight="bold" fill="#35b4e6">Ps</text><text x="27" y="186.8" font-size="7.6" fill="#d2d2d2">文件(F)</text><text x="60" y="186.8" font-size="7.6" fill="#d2d2d2">编辑(E)</text><text x="94" y="186.8" font-size="7.6" fill="#d2d2d2">图像(I)</text><text x="127" y="186.8" font-size="7.6" fill="#d2d2d2">图层(L)</text><text x="161" y="186.8" font-size="7.6" fill="#d2d2d2">文字(Y)</text><text x="196" y="186.8" font-size="7.6" fill="#d2d2d2">选择(S)</text><text x="230" y="186.8" font-size="7.6" fill="#d2d2d2">滤镜(T)</text><text x="264" y="186.8" font-size="7.6" fill="#d2d2d2">3D(D)</text><text x="293" y="186.8" font-size="7.6" fill="#d2d2d2">视图(V)</text><text x="328" y="186.8" font-size="7.6" fill="#d2d2d2">窗口(W)</text><text x="365" y="186.8" font-size="7.6" fill="#d2d2d2">帮助(H)</text><rect x="0.0" y="194.0" width="1297.0" height="22.5" fill="#565658"/><rect x="0.0" y="193.4" width="1297.0" height="1.2" fill="#484848"/><path d="M9.5 206 L15 200.6 L20.5 206 H19 V210.5 H16.3 V207.3 H13.7 V210.5 H11 V206 Z" fill="#e8e8e8"/><path d="M46.5 200 L41 206.5 L42.6 208 Z" fill="#e6e6e6"/><path d="M40.6 207 Q37.5 207.5 36.8 211 Q40.5 211.4 42 208.4 Z" fill="#e6e6e6"/><path d="M52.5 205.5 l2 2 l2 -2" stroke="#aaa" stroke-width="0.8" fill="none"/><path d="M72 200.5 l4 -1.5 l3.5 0.5 l-1 3 l1 2 l-3 1.5 l-2.5 -1 l-1 -2.5 Z" fill="#eee"/><text x="73" y="214" font-size="5.5" fill="#bbb">28</text><path d="M88.5 205.5 l2 2 l2 -2" stroke="#aaa" stroke-width="0.8" fill="none"/><rect x="100.5" y="200.5" width="11.5" height="11.0" fill="#ececec" rx="0.8"/><path d="M110.5 201.5 L104.5 208 L103 211 L106 209.5 Z" fill="#444"/><path d="M100.5 200.5 h5 l-1 2 h-4 Z" fill="#555"/><text x="123" y="208.7" font-size="7.4" fill="#d2d2d2">模式:</text><rect x="145.0" y="199.0" width="84.0" height="13.5" fill="#454545" rx="1.5"/><text x="150" y="208.7" font-size="7.4" fill="#e2e2e2">正常</text><path d="M222 204.5 l2 2 l2 -2" stroke="#aaa" stroke-width="0.8" fill="none"/><text x="240" y="208.7" font-size="7.2" fill="#d2d2d2">不透明度:</text><rect x="276.0" y="199.5" width="34.0" height="12.5" fill="#484848" rx="1.5"/><text x="279" y="208.3" font-size="6.6" fill="#e2e2e2">100%</text><path d="M304 204.5 l2 2 l2 -2" stroke="#aaa" stroke-width="0.8" fill="none"/><circle cx="323.5" cy="206.5" r="4" fill="none" stroke="#ddd" stroke-width="1.1"/><path d="M327.5 201 l-5 6" stroke="#ddd" stroke-width="1.4"/><text x="341" y="208.7" font-size="7.2" fill="#d2d2d2">流量:</text><rect x="361.0" y="199.5" width="34.0" height="12.5" fill="#484848" rx="1.5"/><text x="364" y="208.3" font-size="6.6" fill="#e2e2e2">60%</text><path d="M389 204.5 l2 2 l2 -2" stroke="#aaa" stroke-width="0.8" fill="none"/><path d="M404 209.5 q0.5 -4 5 -5.5 l4 -3 l1.5 1.5 l-3.5 4 q-2 3.5 -7 3 Z" fill="#ddd"/><text x="427" y="208.7" font-size="7.2" fill="#d2d2d2">平滑:</text><rect x="447.0" y="199.5" width="35.0" height="12.5" fill="#484848" rx="1.5"/><text x="451" y="208.3" font-size="6.6" fill="#e2e2e2">0%</text><path d="M476 204.5 l2 2 l2 -2" stroke="#aaa" stroke-width="0.8" fill="none"/><circle cx="495" cy="206.5" r="3.1" fill="none" stroke="#eee" stroke-width="2.2" stroke-dasharray="1.8 1"/><circle cx="495" cy="206.5" r="2.6" fill="none" stroke="#eee" stroke-width="1.3"/><rect x="0.0" y="216.5" width="1297.0" height="17.0" fill="#434345"/><rect x="0.0" y="216.5" width="22.0" height="17.0" fill="#505050"/><rect x="0.0" y="217.5" width="21.5" height="5.0" fill="#3c3c3c"/><rect x="22.0" y="217.0" width="147.0" height="16.5" fill="#535353"/><text x="29" y="229.8" font-size="7.6" fill="#dadada">板书.psd @ 50% (图层 46, RGB/8) *</text><path d="M157 225 l4 4 m0 -4 l-4 4" stroke="#ccc" stroke-width="0.8"/><path d="M3 218.6 l1.6 1.4 l-1.6 1.4 M6 218.6 l1.6 1.4 l-1.6 1.4" stroke="#bbb" stroke-width="0.7" fill="none"/>
<rect x="1115.0" y="233.0" width="3.0" height="649.0" fill="#3a3a3a"/><rect x="1117.5" y="228.0" width="23.0" height="654.0" fill="#4d4d4d"/><rect x="1140.5" y="228.0" width="3.0" height="654.0" fill="#3a3a3a"/><g transform="translate(1129 240.0)"><path d="M-4.5 -4.5 h3.5 v9.5 h-3.5 Z M1 -3 a4.5 4.5 0 0 1 0 7 l-0.8 -1.2 a3 3 0 0 0 0 -4.6 Z" fill="#e2e2e2" stroke="none" stroke-width="0" stroke-linecap="round"/></g><rect x="1120.0" y="253.0" width="18.0" height="0.6" fill="#3a3a3a"/><g transform="translate(1129 266.0)"><path d="M5.5 -5.5 L-0.5 1 L1 2.5 Z M-1.5 1.8 Q-4 2 -5 5.5 Q-1.5 6 0 3.2 Z M-6 -4.5 h4 M-6 -2.5 h3 M-6 -0.5 h2" fill="#e2e2e2" stroke="#e2e2e2" stroke-width="0.8" stroke-linecap="round"/></g><rect x="1120.0" y="279.0" width="18.0" height="0.6" fill="#3a3a3a"/><g transform="translate(1129 293.0)"><path d="M-1 5.5 H6 V3.8 H-1 Z M0 3.3 Q0 1.2 1.7 1.2 L1.4 -1.5 Q1.4 -3.5 2.7 -3.5 Q4 -3.5 4 -1.5 L3.6 1.2 Q5.3 1.2 5.3 3.3 Z M-6 -4.5 h4 M-6 -2.5 h3 M-6 -0.5 h2" fill="#e2e2e2" stroke="#e2e2e2" stroke-width="0.8" stroke-linecap="round"/></g><rect x="1120.0" y="306.0" width="18.0" height="0.6" fill="#3a3a3a"/><text x="1122" y="324.5" font-size="12" fill="#e2e2e2">A</text><rect x="1132.5" y="314.5" width="1.0" height="11.0" fill="#ddd"/><g transform="translate(1129 336.0)"><path d="M-3 -4.5 H4 V5 H2.8 V-3.3 H1.5 V5 H0.3 V0.5 Q-3.5 0.5 -3.5 -2 Q-3.5 -4.5 -3 -4.5 Z" fill="#e2e2e2" stroke="none" stroke-width="0" stroke-linecap="round"/></g><rect x="1120.0" y="348.0" width="18.0" height="0.6" fill="#3a3a3a"/><g transform="translate(1129 362.0)"><path d="M-1 -4.5 H5 V5 H3.8 V-3.3 H2.7 V5 H1.5 V0.5 Q-1.5 0.5 -1.5 -2 Q-1.5 -4.5 -1 -4.5 Z M-6 3 a2 2 0 1 1 0.1 0 Z" fill="#e2e2e2" stroke="none" stroke-width="0" stroke-linecap="round"/></g><text x="1125.5" y="383" font-size="11" fill="#e2e2e2">A</text><path d="M1121 380.5 a1.8 1.8 0 1 1 0.1 0 M1120 383 h4" stroke="#ddd" stroke-width="1" fill="none"/><path d="M1122 400.5 L1133 410.5 M1133 400.5 L1122 410.5" stroke="#e2e2e2" stroke-width="1.8"/><circle cx="1122" cy="400.5" r="1.4" fill="#ddd"/><circle cx="1122" cy="410.5" r="1.4" fill="#ddd"/><rect x="1120.0" y="420.0" width="18.0" height="0.6" fill="#3a3a3a"/><rect x="1122.5" y="426.5" width="11" height="10.5" fill="none" stroke="#e2e2e2" stroke-width="1.3"/><rect x="1127" y="427" width="5" height="5.5" fill="#e2e2e2"/><rect x="1120.0" y="444.0" width="18.0" height="0.6" fill="#3a3a3a"/><path d="M1123 457 q-1.5 -6 5 -6.5 q6.5 0 5.5 5 q-1.5 2 -3.5 1 q-1.5 0 -1 1.8 q-0.5 2.4 -3 1.2 q-2.2 -0.5 -3 -2.5 Z" fill="#e2e2e2"/><circle cx="1126.5" cy="454" r="1" fill="#4d4d4d"/><circle cx="1130" cy="453.3" r="1" fill="#4d4d4d"/><path d="M1120 458 h5 M1122.5 455.5 v5" stroke="#e2e2e2" stroke-width="1"/>
<rect x="1143.5" y="228.0" width="153.0" height="654.0" fill="#535353"/><rect x="1143.5" y="228.0" width="153.0" height="12.5" fill="#424242"/><rect x="1143.5" y="228.0" width="25.0" height="12.5" fill="#535353"/><text x="1147.5" y="237.3" font-size="7.4" font-weight="bold" fill="#f0f0f0">图层</text><text x="1175" y="237.3" font-size="7.2" fill="#9a9a9a">通道</text><text x="1203" y="237.3" font-size="7.2" fill="#8a8a8a">路径</text><rect x="1285.0" y="232.5" width="7.0" height="0.9" fill="#aaa"/><rect x="1285.0" y="234.7" width="7.0" height="0.9" fill="#aaa"/><rect x="1285.0" y="236.9" width="7.0" height="0.9" fill="#aaa"/><rect x="1146.0" y="247.5" width="51.0" height="13.0" fill="#454545" rx="1.5"/><circle cx="1151" cy="253.5" r="2.2" fill="none" stroke="#ccc" stroke-width="0.9"/><path d="M1152.7 255.3 l2 2" stroke="#ccc" stroke-width="0.9"/><text x="1157" y="257" font-size="7.2" fill="#ddd">类型</text><path d="M1190 252.8 l2 2 l2 -2" stroke="#aaa" stroke-width="0.8" fill="none"/><rect x="1208" y="250" width="8" height="7" fill="none" stroke="#ddd" stroke-width="1"/><path d="M1209 256 l2.3 -2.6 l1.8 1.6 l1.2 -1 l1.4 2 Z" fill="#ddd"/><circle cx="1228" cy="253.5" r="3.6" fill="none" stroke="#ddd" stroke-width="1"/><path d="M1228 249.9 a3.6 3.6 0 0 1 0 7.2 Z" fill="#ddd"/><path d="M1239.5 250 h7.5 v1.8 h-0.9 v-0.7 h-2.2 v5.6 h1 v0.9 h-3.3 v-0.9 h1 v-5.6 h-2.2 v0.7 h-0.9 Z" fill="#ddd"/><rect x="1255" y="250.5" width="6.5" height="6.5" fill="none" stroke="#ddd" stroke-width="1"/><rect x="1254.0" y="249.5" width="1.8" height="1.8" fill="#ddd"/><rect x="1254.0" y="256.0" width="1.8" height="1.8" fill="#ddd"/><rect x="1260.5" y="249.5" width="1.8" height="1.8" fill="#ddd"/><rect x="1260.5" y="256.0" width="1.8" height="1.8" fill="#ddd"/><path d="M1270.5 250 h4 l2 2 v5.5 h-6 Z" fill="#ddd"/><circle cx="1272" cy="256" r="2" fill="#ddd" stroke="#535353" stroke-width="0.6"/><circle cx="1291" cy="251.5" r="2.3" fill="#e8e8e8"/><rect x="1143.5" y="263.5" width="153.0" height="0.7" fill="#444"/><rect x="1146.0" y="266.5" width="72.0" height="13.0" fill="#3f3f3f" rx="1.5"/><text x="1150" y="276" font-size="7.2" fill="#e2e2e2">正常</text><path d="M1210 272 l2 2 l2 -2" stroke="#aaa" stroke-width="0.8" fill="none"/><text x="1224" y="275.7" font-size="7" fill="#c4c4c4">不透明度:</text><rect x="1259.0" y="267.0" width="22.0" height="12.0" fill="#4a4a4a" rx="1"/><text x="1261.5" y="275.5" font-size="6" fill="#e4e4e4">100%</text><path d="M1286.5 272 l2 2 l2 -2" stroke="#aaa" stroke-width="0.8" fill="none"/><rect x="1143.5" y="282.3" width="153.0" height="0.7" fill="#444"/><text x="1146.5" y="294" font-size="7" fill="#c4c4c4">锁定:</text><rect x="1169.5" y="287.5" width="2.4" height="2.4" fill="#ddd"/><rect x="1174.3" y="287.5" width="2.4" height="2.4" fill="#ddd"/><rect x="1171.9" y="289.9" width="2.4" height="2.4" fill="#ddd"/><rect x="1169.5" y="292.3" width="2.4" height="2.4" fill="#ddd"/><rect x="1174.3" y="292.3" width="2.4" height="2.4" fill="#ddd"/><rect x="1169" y="287" width="8.2" height="8.2" fill="none" stroke="#ddd" stroke-width="0.7"/><path d="M1192.5 286.5 L1187.5 292 L1189 293.3 Z M1187 292.6 Q1185 293 1184.4 296 Q1187 296.3 1188.3 294 Z" fill="#eee"/><path d="M1201 286.8 v9 M1196.5 291.3 h9 M1199.5 288.3 l1.5 -1.5 l1.5 1.5 M1199.5 294.3 l1.5 1.5 l1.5 -1.5 M1198 289.8 l-1.5 1.5 l1.5 1.5 M1204 289.8 l1.5 1.5 l-1.5 1.5" stroke="#ddd" stroke-width="0.9" fill="none"/><path d="M1211.5 288.5 h5 l2 2 v5 h-7 Z" fill="none" stroke="#ddd" stroke-width="1"/><path d="M1216 286.5 v4 h4" stroke="#ddd" stroke-width="0.9" fill="none"/><rect x="1225.5" y="290.5" width="7" height="5.5" fill="#e6e6e6"/><path d="M1227 290.5 v-1.5 a2 2 0 0 1 4 0 v1.5" stroke="#e6e6e6" stroke-width="1.1" fill="none"/><text x="1239" y="294" font-size="7" fill="#c4c4c4">填充:</text><rect x="1259.0" y="285.5" width="22.0" height="12.0" fill="#4a4a4a" rx="1"/><text x="1261.5" y="294" font-size="6" fill="#e4e4e4">100%</text><path d="M1286.5 290.5 l2 2 l2 -2" stroke="#aaa" stroke-width="0.8" fill="none"/><rect x="1143.5" y="301.0" width="153.0" height="0.8" fill="#3f3f3f"/><rect x="1287.5" y="302.0" width="8.5" height="566.0" fill="#4a4a4a"/><rect x="1288.5" y="312.0" width="6.5" height="320.0" fill="#696969"/><rect x="1161.0" y="472.0" width="126.5" height="55.5" fill="#6c6c6c"/><path d="M1147.0 330.0 q4.5 -4.2 9 0 q-4.5 4.2 -9 0 Z" fill="#e6e6e6"/><circle cx="1151.5" cy="330.0" r="1.5" fill="#535353"/><rect x="1164.0" y="312.0" width="49.0" height="35.5" fill="#e8e6e8"/><text x="1221" y="332.8" font-size="7.4" fill="#dedede">图层 33</text><path d="M1147.0 386.5 q4.5 -4.2 9 0 q-4.5 4.2 -9 0 Z" fill="#e6e6e6"/><circle cx="1151.5" cy="386.5" r="1.5" fill="#535353"/><rect x="1164.0" y="363.0" width="49.0" height="47.0" fill="#e8e6e8"/><text x="1221" y="389.3" font-size="7.4" fill="#dedede">图层 32</text><path d="M1147.0 443.0 q4.5 -4.2 9 0 q-4.5 4.2 -9 0 Z" fill="#e6e6e6"/><circle cx="1151.5" cy="443.0" r="1.5" fill="#535353"/><rect x="1164.0" y="418.0" width="14.0" height="49.0" fill="#e8e6e8"/><text x="1186" y="445.8" font-size="7.4" fill="#dedede">图层 34</text><path d="M1147.0 499.5 q4.5 -4.2 9 0 q-4.5 4.2 -9 0 Z" fill="#e6e6e6"/><circle cx="1151.5" cy="499.5" r="1.5" fill="#535353"/><rect x="1162.5" y="474.5" width="52.0" height="51.0" fill="none" stroke="#e0e0e0" stroke-width="1"/><rect x="1164.0" y="476.0" width="49.0" height="48.0" fill="#e8e6e8"/><text x="1221" y="502.3" font-size="7.4" fill="#dedede">图层 46</text><path d="M1147.0 555.5 q4.5 -4.2 9 0 q-4.5 4.2 -9 0 Z" fill="#e6e6e6"/><circle cx="1151.5" cy="555.5" r="1.5" fill="#535353"/><rect x="1164.0" y="531.5" width="23.0" height="48.5" fill="#e8e6e8"/><text x="1194.5" y="558.3" font-size="7.4" fill="#dedede">图层 45</text><path d="M1147.0 612.0 q4.5 -4.2 9 0 q-4.5 4.2 -9 0 Z" fill="#e6e6e6"/><circle cx="1151.5" cy="612.0" r="1.5" fill="#535353"/><rect x="1164.0" y="591.0" width="49.0" height="43.0" fill="#e8e6e8"/><text x="1221" y="614.8" font-size="7.4" fill="#dedede">图层 35</text><path d="M1147.0 669.0 q4.5 -4.2 9 0 q-4.5 4.2 -9 0 Z" fill="#e6e6e6"/><circle cx="1151.5" cy="669.0" r="1.5" fill="#535353"/><rect x="1164.0" y="644.0" width="22.0" height="50.0" fill="#e8e6e8"/><text x="1193.5" y="671.8" font-size="7.4" fill="#dedede">图层 44</text><path d="M1147.0 725.5 q4.5 -4.2 9 0 q-4.5 4.2 -9 0 Z" fill="#e6e6e6"/><circle cx="1151.5" cy="725.5" r="1.5" fill="#535353"/><rect x="1164.0" y="701.0" width="24.0" height="49.0" fill="#e8e6e8"/><text x="1196" y="728.3" font-size="7.4" fill="#dedede">图层 43</text><path d="M1147.0 782.0 q4.5 -4.2 9 0 q-4.5 4.2 -9 0 Z" fill="#e6e6e6"/><circle cx="1151.5" cy="782.0" r="1.5" fill="#535353"/><rect x="1164.0" y="757.5" width="41.0" height="49.0" fill="#e8e6e8"/><text x="1212.5" y="784.8" font-size="7.4" fill="#dedede">图层 42</text><path d="M1147.0 838.5 q4.5 -4.2 9 0 q-4.5 4.2 -9 0 Z" fill="#e6e6e6"/><circle cx="1151.5" cy="838.5" r="1.5" fill="#535353"/><rect x="1164.0" y="814.0" width="20.0" height="49.5" fill="#e8e6e8"/><text x="1191.5" y="841.3" font-size="7.4" fill="#dedede">图层 41 拷贝</text><g stroke="#8d8a8c" stroke-width="0.7" fill="none" opacity="0.8"><ellipse cx="1184" cy="326" rx="4" ry="4.5" fill="#cfcdce"/><path d="M1179 335 h8 M1176 341 h10 M1168 337 h6 M1182 344 h14"/></g><path d="M1181 367 Q1190 363.5 1198 376 Q1213 386 1211 399 Q1206 410 1192 408.5 Q1176 408 1173.5 392 Q1171.5 372 1181 367 Z" fill="#b8321e"/><path d="M1165 366 q3 -3 6 0 q-1 3 -4 2.5 Z" fill="#7a1a12"/><path d="M1178 372 Q1186 368 1192 376" stroke="#d05a3a" stroke-width="1.5" fill="none" opacity="0.6"/><rect x="1270" y="384.5" width="6" height="4.5" fill="none" stroke="#ddd" stroke-width="0.9"/><path d="M1271.3 384.5 v-1.3 a1.7 1.7 0 0 1 3.4 0 v1.3" stroke="#ddd" stroke-width="0.9" fill="none"/><g stroke="#8d8a8c" stroke-width="0.7" fill="none" opacity="0.8"><path d="M1190 480 q6 -3 10 2 q-2 6 -8 5 Z M1196 488 l6 4" stroke="#e48aa8"/><ellipse cx="1177" cy="508" rx="8" ry="9"/><ellipse cx="1200" cy="508" rx="8" ry="9"/><path d="M1170 500 h14 M1194 500 h13 M1172 516 h10 M1196 516 h10"/></g><g stroke="#8d8a8c" stroke-width="0.7" fill="none" opacity="0.8"><path d="M1170 537 q3 -4 6 0 M1168 549 q6 -5 12 0 q-4 5 -10 3" stroke="#e48aa8"/><ellipse cx="1175.500" cy="568" rx="7" ry="8"/><path d="M1169 561 h13 M1170 574 h11"/></g><g stroke="#8d8a8c" stroke-width="0.7" fill="none" opacity="0.8" opacity="0.5"><path d="M1169 598 h28 M1180 601 h20 M1170 612 h6 M1190 620 h12" stroke="#b0a8aa"/><path d="M1178 596.500 h14" stroke="#e0a0b0"/></g><g stroke="#8d8a8c" stroke-width="0.7" fill="none" opacity="0.8"><path d="M1173.0 659.0 q-2 -6.0 0 -12.0 M1177.0 659.0 q2 -6.0 0 -12.0"/><ellipse cx="1175.0" cy="664.0" rx="5.0" ry="5.0"/><path d="M1169.0 671.5 h12.0 M1173.0 679.0 v11.0 M1177.0 679.0 v11.0"/><ellipse cx="1175.0" cy="674.0" rx="4.4" ry="5.0" fill="#bdb9bb"/></g><g stroke="#8d8a8c" stroke-width="0.7" fill="none" opacity="0.8"><path d="M1174.0 715.7 q-2 -5.9 0 -11.8 M1178.0 715.7 q2 -5.9 0 -11.8"/><ellipse cx="1176.0" cy="720.6" rx="5.5" ry="4.9"/><path d="M1169.4 728.0 h13.2 M1174.0 735.3 v10.8 M1178.0 735.3 v10.8"/><ellipse cx="1176.0" cy="730.4" rx="4.8" ry="4.9" fill="#bdb9bb"/></g><g stroke="#8d8a8c" stroke-width="0.7" fill="none" opacity="0.8"><path d="M1182.0 772.2 q-2 -5.9 0 -11.8 M1186.0 772.2 q2 -5.9 0 -11.8"/><ellipse cx="1184.0" cy="777.1" rx="6.5" ry="4.9"/><path d="M1176.2 784.5 h15.6 M1182.0 791.8 v10.8 M1186.0 791.8 v10.8"/><ellipse cx="1184.0" cy="786.9" rx="5.7" ry="4.9" fill="#bdb9bb"/></g><g stroke="#8d8a8c" stroke-width="0.7" fill="none" opacity="0.8"><path d="M1172.0 828.9 q-2 -5.9 0 -11.9 M1176.0 828.9 q2 -5.9 0 -11.9"/><ellipse cx="1174.0" cy="833.8" rx="4.5" ry="5.0"/><path d="M1168.6 841.2 h10.8 M1172.0 848.6 v10.9 M1176.0 848.6 v10.9"/><ellipse cx="1174.0" cy="843.7" rx="4.0" ry="5.0" fill="#bdb9bb"/></g><rect x="1143.5" y="867.5" width="153.0" height="14.5" fill="#535353"/><rect x="1143.5" y="867.5" width="153.0" height="0.7" fill="#444"/><path d="M1167 874.500 h8" stroke="#6a6a6a" stroke-width="2.5" stroke-linecap="round"/><text x="1185.5" y="877.5" font-size="8" fill="#d4d4d4">fx</text><path d="M1194 878 l1.2 1.2 l1.2 -1.2" fill="#bbb"/><rect x="1202" y="870.5" width="9" height="7.500" fill="#ddd"/><circle cx="1206.5" cy="874.3" r="2.3" fill="#535353"/><circle cx="1223" cy="874.300" r="3.8" fill="none" stroke="#ddd" stroke-width="1"/><path d="M1220.3 877 a3.8 3.8 0 0 1 5.400 -5.400 Z" fill="#ddd"/><path d="M1236 871 h3.500 l1 1.300 h4.500 v6 h-9 Z" fill="#ddd"/><path d="M1253 871 h8 v4.500 l-3 3 h-5 Z" fill="none" stroke="#ddd" stroke-width="1.1"/><path d="M1270.500 872.300 h7 M1272.500 872.300 v-1.200 h3 v1.200 M1271.300 873 l0.500 5.500 h4.400 l0.500 -5.500 Z" fill="#d8d8d8" stroke="#d8d8d8" stroke-width="0.800"/>
<rect x="970.5" y="344.5" width="155.0" height="348.5" fill="rgba(0,0,0,0.30)"/><rect x="972.0" y="345.5" width="152.0" height="345.5" fill="#ffffff"/><rect x="972.0" y="345.5" width="152.0" height="25.0" fill="url(#chatgrad)"/><rect x="978.0" y="360.3" width="1.7" height="2.2" fill="#8ad42a"/><rect x="980.5" y="358.7" width="1.7" height="3.8" fill="#8ad42a"/><rect x="983.0" y="356.9" width="1.7" height="5.6" fill="#8ad42a"/><rect x="985.5" y="355.1" width="1.7" height="7.4" fill="#8ad42a"/><text x="991" y="362.3" font-size="6.8" fill="#9ab0c4">10.8 KB/s</text><text x="1031.5" y="361.5" font-size="6.6" font-weight="bold" fill="#4a5a6a">聊天泡</text><path d="M1055 358.500 l2.500 -2.500 M1059 359.500 l-2.500 2.500 M1057.500 355.600 h1.700 v1.700" stroke="#6a7a8a" stroke-width="0.900" fill="none"/><path d="M1077 356 h2.500 v3.500 l-1.250 1.800 l-1.250 -1.800 Z" fill="#5a6a7a"/><rect x="1090.0" y="360.3" width="6.5" height="1.1" fill="#5a6a7a"/><path d="M1107.500 355 l6 6 m0 -6 l-6 6" stroke="#5a6a7a" stroke-width="1.200"/><rect x="972.0" y="370.5" width="152.0" height="29.0" fill="#ffffff"/><rect x="976.0" y="370.5" width="144.0" height="0.7" fill="#dfe6ec"/><text x="985.5" y="379.7" font-size="6.4" fill="#6a6a6a">热聊互动</text><path d="M1108 375.300 l2.500 2.500 l2.500 -2.500" stroke="#9a9a9a" stroke-width="0.900" fill="none"/><text x="991" y="394" font-size="6.8" fill="#3a8ae0">聊天</text><rect x="995.5" y="397.2" width="5.5" height="1.4" fill="#3a8ae0" rx="0.7"/><text x="1034" y="394" font-size="6.8" fill="#555">在线(428)</text><text x="1086.5" y="394" font-size="6.8" fill="#555">互动应用</text><rect x="972.0" y="399.5" width="152.0" height="216.0" fill="#f5f7f9"/><rect x="1002.5" y="407.5" width="26.9" height="11.0" fill="#ffffff" rx="2"/><text x="1006.3" y="415.4" font-size="6.3" fill="#333">孙雯龙</text><path d="M983.700 404.700 q3.800 -2.600 7.600 0 v1.200 h-7.600 Z" fill="#7a86e4"/><circle cx="987.500" cy="401.500" r="2.200" fill="#f6c8b8"/><text x="1002" y="402" font-size="6" fill="#8a8a8a" opacity="0.6">A22@孙雯龙</text><rect x="1002.5" y="438.9" width="33.2" height="11.0" fill="#ffffff" rx="2"/><text x="1006.3" y="446.8" font-size="6.3" fill="#333">哈哈哈哈</text><text x="1002" y="431.1" font-size="6" fill="#7a7a7a">V6@爱碗布</text><circle cx="987.5" cy="433.4" r="4.6" fill="#fdf1ee"/><path d="M984.2 432.2 a3.3 3.300 0 0 1 6.600 0 Z" fill="#5a3a32"/><circle cx="987.5" cy="432.8" r="2.400" fill="#f6c8b8"/><path d="M983.7 437.0 q3.800 -2.600 7.600 0 v1.200 h-7.600 Z" fill="#7a86e4"/><rect x="1002.5" y="470.5" width="58.4" height="11.0" fill="#ffffff" rx="2"/><text x="1006.3" y="478.4" font-size="6.3" fill="#333">长得好像萝卜。。</text><text x="1002" y="462.7" font-size="6" fill="#7a7a7a">H62@贰拾陆</text><circle cx="987.5" cy="465.0" r="4.6" fill="#fdf1ee"/><path d="M984.2 463.8 a3.3 3.300 0 0 1 6.600 0 Z" fill="#5a3a32"/><circle cx="987.5" cy="464.4" r="2.400" fill="#f6c8b8"/><path d="M983.7 468.6 q3.800 -2.600 7.600 0 v1.200 h-7.600 Z" fill="#7a86e4"/><rect x="1002.5" y="502.0" width="33.2" height="11.0" fill="#ffffff" rx="2"/><text x="1006.3" y="509.9" font-size="6.3" fill="#333">触樽女王</text><text x="1002" y="494.2" font-size="6" fill="#7a7a7a">X15@阿冬</text><circle cx="987.5" cy="496.5" r="4.6" fill="#fdf1ee"/><path d="M984.2 495.3 a3.3 3.300 0 0 1 6.600 0 Z" fill="#5a3a32"/><circle cx="987.5" cy="495.9" r="2.400" fill="#f6c8b8"/><path d="M983.7 500.1 q3.800 -2.600 7.600 0 v1.200 h-7.600 Z" fill="#7a86e4"/><rect x="1002.5" y="533.0" width="18.5" height="11.0" fill="#ffffff" rx="2"/><text x="1006.3" y="540.9" font-size="6.3" fill="#333">lord</text><text x="1002" y="525.2" font-size="6" fill="#7a7a7a">X05@阿杰</text><circle cx="987.5" cy="527.5" r="4.6" fill="#fdf1ee"/><path d="M984.2 526.3 a3.3 3.300 0 0 1 6.600 0 Z" fill="#5a3a32"/><circle cx="987.5" cy="526.9" r="2.400" fill="#f6c8b8"/><path d="M983.7 531.1 q3.800 -2.600 7.600 0 v1.200 h-7.600 Z" fill="#7a86e4"/><rect x="1002.5" y="565.0" width="33.2" height="11.0" fill="#ffffff" rx="2"/><text x="1006.3" y="572.9" font-size="6.3" fill="#333">毒蛙王子</text><text x="1002" y="557.2" font-size="6" fill="#7a7a7a">X67@Tina</text><circle cx="987.5" cy="559.5" r="4.6" fill="#fdf1ee"/><path d="M984.2 558.3 a3.3 3.300 0 0 1 6.600 0 Z" fill="#5a3a32"/><circle cx="987.5" cy="558.9" r="2.400" fill="#f6c8b8"/><path d="M983.7 563.1 q3.800 -2.600 7.600 0 v1.200 h-7.600 Z" fill="#7a86e4"/><rect x="1002.5" y="596.5" width="33.2" height="11.0" fill="#ffffff" rx="2"/><text x="1006.3" y="604.4" font-size="6.3" fill="#333">触樽公主</text><text x="1002" y="588.7" font-size="6" fill="#7a7a7a">A14@一块小饼干</text><circle cx="987.5" cy="591.0" r="4.6" fill="#fdf1ee"/><path d="M984.2 589.8 a3.3 3.300 0 0 1 6.600 0 Z" fill="#5a3a32"/><circle cx="987.5" cy="590.4" r="2.400" fill="#f6c8b8"/><path d="M983.7 594.6 q3.800 -2.600 7.600 0 v1.200 h-7.600 Z" fill="#7a86e4"/><rect x="972.0" y="386.0" width="152.0" height="13.5" fill="#ffffff"/><text x="991" y="394" font-size="6.8" fill="#3a8ae0">聊天</text><rect x="995.5" y="397.2" width="5.5" height="1.4" fill="#3a8ae0" rx="0.7"/><text x="1034" y="394" font-size="6.8" fill="#555">在线(428)</text><text x="1086.5" y="394" font-size="6.8" fill="#555">互动应用</text><rect x="1121.3" y="600.0" width="2.2" height="15.0" fill="#b8bcc2" rx="1"/><rect x="972.0" y="615.5" width="152.0" height="75.5" fill="#ffffff"/><circle cx="982.300" cy="623.300" r="4" fill="none" stroke="#b4b8be" stroke-width="0.800"/><path d="M980.300 624.500 q2 2 4 0" stroke="#b4b8be" stroke-width="0.700" fill="none"/><rect x="996.500" y="619.500" width="8" height="7.500" fill="none" stroke="#b4b8be" stroke-width="0.800"/><path d="M997.500 626 l2.500 -3 l2 2 l2 -3" stroke="#b4b8be" stroke-width="0.700" fill="none"/><text x="1013.5" y="627" font-size="9.5" fill="#b4b8be">A</text><text x="1019.5" y="627" font-size="5.5" fill="#b4b8be">A</text><rect x="1086.500" y="619.800" width="5.500" height="5.500" fill="#fff" stroke="#d4d8dc" stroke-width="0.700" rx="0.800"/><text x="1096" y="625.3" font-size="6" fill="#6a6a6a">屏蔽打赏</text><rect x="976.0" y="631.5" width="144.0" height="0.7" fill="#e8ecf0"/><text x="977.5" y="643.5" font-size="6.4" fill="#a4a8ae">我也来参与一下互动</text><rect x="978.5" y="678.0" width="9.0" height="5.0" fill="#e8eaee" rx="2.5"/><circle cx="981" cy="680.500" r="2.100" fill="#fff" stroke="#d4d8dc" stroke-width="0.500"/><text x="992" y="683" font-size="6" fill="#8a8e94">禁止聊天</text><rect x="1089.7" y="674.0" width="30.3" height="13.3" fill="#3b8ee2" rx="1"/><text x="1098.3" y="683.2" font-size="6.5" fill="#e4f0fc">发送</text>
<circle cx="1083.2" cy="842.8" r="20.300" fill="#8a9a90"/><circle cx="1083.2" cy="842.8" r="18.600" fill="#ecfbf1"/><circle cx="1083.2" cy="842.8" r="18.800" fill="none" stroke="#b4d4bc" stroke-width="2.400"/><path d="M1084.2 824.0 A18.8 18.800 0 0 1 1099.7 851.8" fill="none" stroke="#3fd468" stroke-width="2.600"/><circle cx="1082.7" cy="842.8" r="15.500" fill="#f4fbf6"/><text x="1072" y="843.6" font-size="14.6" fill="#4a4a4e">22</text><text x="1088.6" y="843.6" font-size="6.3" font-weight="bold" fill="#5a5a5e">%</text><path d="M1072.500 853.800 v-3.500 m-1.300 1.300 l1.300 -1.300 l1.300 1.300" stroke="#5ab4e8" stroke-width="0.900" fill="none"/><text x="1076" y="854.3" font-size="5" fill="#7a7e82">48.1K/s</text>
<rect x="0.0" y="881.0" width="1297.0" height="27.0" fill="#3b3d54"/><rect x="7.5" y="890.0" width="4.6" height="4.8" fill="#f4f4f4"/><rect x="12.8" y="890.0" width="4.6" height="4.8" fill="#f4f4f4"/><rect x="7.5" y="895.5" width="4.6" height="4.8" fill="#f4f4f4"/><rect x="12.8" y="895.5" width="4.6" height="4.8" fill="#f4f4f4"/><rect x="29.5" y="881.0" width="101.5" height="27.0" fill="#2a62a8"/><rect x="29.5" y="905.8" width="101.5" height="2.2" fill="#8fbef0"/><rect x="37.5" y="888.5" width="12.0" height="12.0" fill="#0b2134" rx="1"/><text x="39.3" y="898" font-size="7.8" font-weight="bold" fill="#31c5f4">Ps</text><text x="53.5" y="898.2" font-size="8" fill="#f4f4f4">板书.psd @ 50% (...</text><circle cx="147" cy="895" r="7" fill="#e8433a"/><path d="M147 895 L141 891.500 A7 7 0 0 0 147.300 902 Z" fill="#3aa757"/><path d="M147 895 L147.300 902 A7 7 0 0 0 153.200 891.700 Z" fill="#f6c433"/><circle cx="147" cy="895" r="3.200" fill="#f4f4f4"/><circle cx="147" cy="895" r="2.500" fill="#4a8af4"/><rect x="166.0" y="905.8" width="96.0" height="2.2" fill="#b4c8ea"/><rect x="170.5" y="888.5" width="12.5" height="12.5" fill="#4a62c8" rx="2"/><text x="173.3" y="898.5" font-size="10" font-weight="bold" fill="#fff">P</text><text x="187" y="898.2" font-size="7.8" fill="#f4f4f4">直播助手(window)...</text><path d="M1092.500 890.500 v8.500 l-6 -4.200 Z" fill="#e84a4a"/><rect x="1104.0" y="890.5" width="3.5" height="3.5" fill="#222"/><rect x="1106.0" y="893.5" width="5.5" height="5.5" fill="#2bd43a"/><ellipse cx="1121" cy="895" rx="5.500" ry="4.500" fill="#e0d61e"/><ellipse cx="1121" cy="895" rx="2.800" ry="2.200" fill="#3a9a2a"/><rect x="1131.500" y="890.500" width="8.500" height="8.500" fill="none" stroke="#e8e8e8" stroke-width="1"/><rect x="1133.0" y="892.5" width="5.0" height="1.0" fill="#e44"/><rect x="1136.5" y="895.5" width="4.5" height="4.5" fill="#e83a3a"/><path d="M1149 890.500 h4 l1 3 v5.500 h-6 v-5.500 Z" fill="none" stroke="#e8e8e8" stroke-width="1"/><path d="M1161.500 891 h10 v6.500 h-4 l-2.500 2 v-2 h-3.500 Z" fill="none" stroke="#e8e8e8" stroke-width="1"/><path d="M1177 893.500 h2 l2.500 -2.500 v8 l-2.500 -2.500 h-2 Z" fill="#cfd3e0"/><path d="M1183 892.500 a3.500 3.500 0 0 1 0 5 M1184.800 891 a5.500 5.500 0 0 1 0 8" stroke="#cfd3e0" stroke-width="0.900" fill="none"/><path d="M1195.500 898 l3 -3 M1194.500 895.500 a2.300 2.300 0 0 0 3.500 3.500 M1200 891.500 a2.300 2.300 0 0 1 3.300 3.300 l-1.500 1.500 M1197.500 894 l2.500 -2.500" stroke="#cfd3e0" stroke-width="1.600" fill="none" stroke-linecap="round"/><text x="1213.2" y="899.3" font-size="11.5" fill="#f0f0f0">A</text><path d="M1229.500 889.500 l10 -1 l1 10 l-10 1.500 Z" fill="#e8412c"/><text x="1232" y="898.5" font-size="9" font-weight="bold" fill="#fff">S</text><text x="1255.92" y="892.6" font-size="7.6" fill="#f0f0f0">22:05:37</text><text x="1255.69" y="904" font-size="7.6" fill="#f0f0f0">2020/6/20</text>
<path d="M1278.500 179.500 l5 5 m0 -5 l-5 5" stroke="#c8c8c8" stroke-width="1"/><rect x="1257" y="179.500" width="5" height="5" fill="none" stroke="#aaa" stroke-width="0.900"/><path d="M1288 200 h3 v9 h-3" stroke="#bbb" stroke-width="1" fill="none"/><rect x="1110" y="186" width="178.500" height="43.500" rx="8" fill="#7a1414" opacity="0.850"/><rect x="1110.500" y="184" width="176.500" height="43" rx="8" fill="#df262b"/><text x="1119" y="204.5" font-size="16.8" font-weight="bold" letter-spacing="0.6" fill="#fff">克克设计</text><rect x="1194.5" y="190.0" width="86.0" height="13.8" fill="#ffffff"/><text x="1196.5" y="201.3" font-size="11.8" fill="#dc242a">微信:kekeyoya</text><text x="1119" y="222.3" font-size="15.3" font-weight="bold" letter-spacing="0.25" fill="#fff">更多一手课程联系微信</text><text x="1157.5" y="190.6" font-family="Liberation Serif, serif" font-weight="bold" font-size="18.6" letter-spacing="1.5" fill="#d3161e" stroke="#d3161e" stroke-width="0.7">15240709231</text>
<path d="M417.500 836.200 L417.500 852.800 L421.400 849.300 L424.300 855 L426.800 853.800 L424 848.400 L429 847.800 Z" fill="#f4f0f4" stroke="#3a3030" stroke-width="1" stroke-linejoin="round"/>
</g>
</svg>
</div>
<div class="title">Rec 0003.mp4</div>
<svg class="abs" style="left:1180px;top:10px" width="110" height="30" viewBox="1180 10 110 30">
<rect x="1186" y="22" width="12" height="2" fill="#fff"/>
<rect x="1227" y="18" width="10" height="10" fill="none" stroke="#fff" stroke-width="2"/>
<path d="M1267.5 17.5 L1278 28 M1278 17.5 L1267.5 28" stroke="#fff" stroke-width="1.8" fill="none"/>
</svg>
<div class="abs" style="left:1299px;top:0;width:4px;height:1077px;background:#151515"></div>
<div class="abs" style="left:0;top:1027px;width:1297px;height:2px;background:#4a4a4a"></div>
<div class="abs" style="left:0;top:1026.3px;width:837px;height:3px;background:#1b9cea"></div>
<svg class="abs" style="left:0;top:1045px" width="110" height="32" viewBox="0 1045 110 32">
<path d="M20 1053 L31.5 1061 L20 1069.5 Z" fill="#fff"/>
<rect x="56" y="1054.5" width="2.2" height="13" fill="#5a5a5a"/><path d="M70 1054.5 L70 1067.5 L60 1061 Z" fill="#5a5a5a"/>
<path d="M83.5 1054.5 L83.5 1067.5 L93.5 1061 Z" fill="#fff"/><rect x="95.2" y="1054.5" width="2.6" height="13" rx="1" fill="#fff"/>
</svg>
<div class="time">00:34:27 / 00:53:18</div>
<svg class="abs" style="left:825px;top:1048px" width="115" height="26" viewBox="825 1048 115 26">
<path d="M830 1057.5 h4.5 l6 -5 v17 l-6 -5 h-4.5 Z" fill="#fff"/>
<path d="M844 1054.5 a7.5 7.5 0 0 1 0 13" stroke="#fff" stroke-width="2.2" fill="none" stroke-linecap="round"/>
<rect x="856" y="1060" width="76" height="2" fill="#fff"/>
<circle cx="932.5" cy="1061" r="4.2" fill="#fff"/>
</svg>
<svg class="abs" style="left:949px;top:1044px" width="60" height="30" viewBox="949 1044 60 30"><rect x="951.9" y="1052.2" width="43.8" height="17.6" rx="1.5" fill="#000" stroke="#ffffff" stroke-width="1.9"/><text x="961.5" y="1066.1" font-size="12.3" font-family="'Liberation Sans','Noto Sans CJK SC',sans-serif" fill="#ffffff" stroke="#ffffff" stroke-width="0.3">标记</text></svg>
<svg class="abs" style="left:1015px;top:1044px" width="60" height="30" viewBox="1015 1044 60 30"><rect x="1017.9" y="1052.2" width="43.8" height="17.6" rx="1.5" fill="#000" stroke="#ffffff" stroke-width="1.9"/><text x="1027.5" y="1066.1" font-size="12.3" font-family="'Liberation Sans','Noto Sans CJK SC',sans-serif" fill="#ffffff" stroke="#ffffff" stroke-width="0.3">倍速</text></svg>
<svg class="abs" style="left:1081px;top:1044px" width="60" height="30" viewBox="1081 1044 60 30"><rect x="1083.9" y="1052.2" width="43.8" height="17.6" rx="1.5" fill="#000" stroke="#f7d58d" stroke-width="1.9"/><text x="1093.5" y="1066.1" font-size="12.3" font-family="'Liberation Sans','Noto Sans CJK SC',sans-serif" fill="#f7d58d" stroke="#f7d58d" stroke-width="0.3">超清</text></svg>
<svg class="abs" style="left:1147px;top:1044px" width="60" height="30" viewBox="1147 1044 60 30"><rect x="1149.9" y="1052.2" width="43.8" height="17.6" rx="1.5" fill="#000" stroke="#ffffff" stroke-width="1.9"/><text x="1159.5" y="1066.1" font-size="12.3" font-family="'Liberation Sans','Noto Sans CJK SC',sans-serif" fill="#ffffff" stroke="#ffffff" stroke-width="0.3">字幕</text></svg>
<div class="newb" style="left:978px;top:1045.2px;width:26px;height:11.4px;line-height:11.6px;font-size:8.5px">NEW</div>
<svg class="abs" style="left:1214px;top:1048px" width="60" height="26" viewBox="1214 1048 60 26">
<path d="M1220 1058.5 V1054.3 H1224.5 M1230 1054.3 H1234.3 V1058.5 M1234.3 1063.5 V1067.7 H1230 M1224.5 1067.7 H1220 V1063.5" stroke="#fff" stroke-width="2.2" fill="none" stroke-linejoin="round" stroke-linecap="round"/>
<rect x="1251" y="1053.3" width="17" height="2" fill="#fff"/><rect x="1251" y="1060" width="9" height="2" fill="#fff"/><rect x="1251" y="1066.7" width="17" height="2" fill="#fff"/>
<path d="M1268 1057.3 V1064.7 L1262 1061 Z" fill="#fff"/>
</svg>
<div class="abs" style="left:1242px;top:453.5px;width:52px;height:177px;background:#222223;border-radius:4px"></div>
<svg class="abs" style="left:1242px;top:453px" width="52" height="178" viewBox="1242 453 52 178" fill="none" stroke="#fff" stroke-width="2.2" stroke-linecap="round" stroke-linejoin="round">
<circle cx="1274.5" cy="486.5" r="3.6"/><circle cx="1263" cy="492.5" r="3.6"/><circle cx="1274.5" cy="498.5" r="3.6"/>
<path d="M1266.2 490.8 L1271.3 488.2 M1266.2 494.2 L1271.3 496.8"/>
<path d="M1267 533.5 V545 M1261.5 540 L1267 545.5 L1272.5 540 M1259 547 V551 H1275 V547"/>
<path d="M1259.5 586 H1276.5 M1265 586 V583 H1271 V586 M1261.5 586.5 V598 Q1261.5 601 1264.5 601 H1271.5 Q1274.5 601 1274.5 598 V586.5 M1266 590.5 V596 M1270 590.5 V596"/>
</svg>
<div class="abs" style="left:1242px;top:642px;width:52px;height:52px;background:#222223;border-radius:4px"></div>
<svg class="abs" style="left:1242px;top:642px" width="52" height="52" viewBox="1242 642 52 52" fill="none" stroke="#f5cf83" stroke-width="2" stroke-linecap="round" stroke-linejoin="round">
<path d="M1272.5 658.5 L1280 666 L1277.5 667 L1273 671.5 L1272.5 676 L1261.5 665 L1266 664.5 L1270.5 660 Z M1267 670.5 L1260 678.5"/>
</svg>
<div class="newb" style="left:1268px;top:642.5px;width:26px;height:11.5px;line-height:11.5px;font-size:8.5px">NEW</div>
</div>
</body></html>
